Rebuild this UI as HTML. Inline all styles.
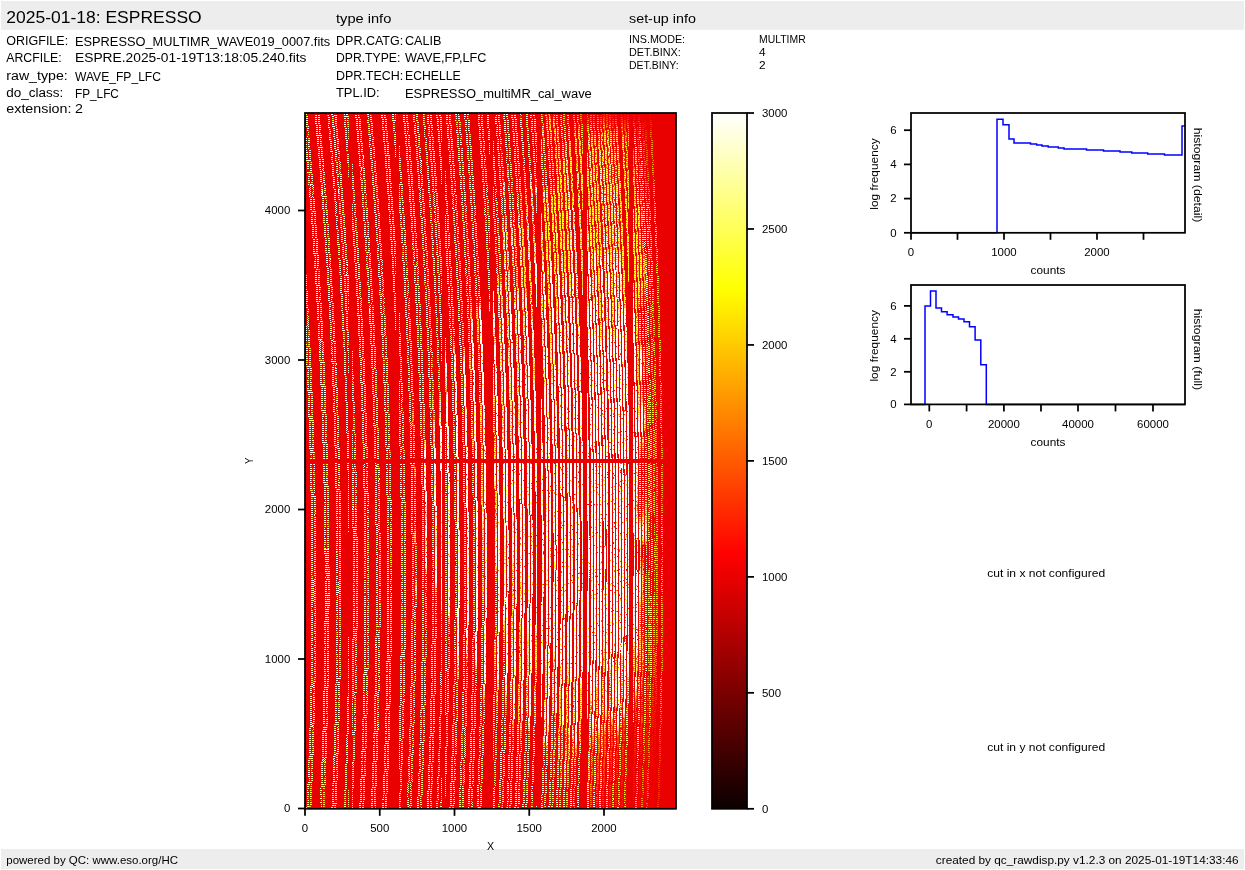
<!DOCTYPE html>
<html><head><meta charset="utf-8"><title>ESPRESSO raw display</title>
<style>html,body{margin:0;padding:0;background:#fff}svg{display:block;opacity:0.9999}text{font-family:"Liberation Sans",sans-serif}</style>
</head><body>
<svg width="1245" height="870" viewBox="0 0 1245 870">
<rect width="1245" height="870" fill="#fff"/>
<rect x="1" y="1" width="1243" height="28.8" fill="#ededed"/>
<rect x="1" y="849" width="1243" height="20" fill="#ededed"/>
<text x="6.30" y="22.90" font-size="17.42" textLength="195.36" lengthAdjust="spacingAndGlyphs" fill="#000">2025-01-18: ESPRESSO</text>
<text x="336.00" y="23.20" font-size="13.06" textLength="55.34" lengthAdjust="spacingAndGlyphs" fill="#000">type info</text>
<text x="629.00" y="22.60" font-size="13.06" textLength="66.89" lengthAdjust="spacingAndGlyphs" fill="#000">set-up info</text>
<text x="6.30" y="44.90" font-size="13.06" textLength="61.85" lengthAdjust="spacingAndGlyphs" fill="#000">ORIGFILE:</text>
<text x="75.00" y="45.80" font-size="13.06" textLength="255.19" lengthAdjust="spacingAndGlyphs" fill="#000">ESPRESSO_MULTIMR_WAVE019_0007.fits</text>
<text x="6.30" y="61.60" font-size="13.06" textLength="55.29" lengthAdjust="spacingAndGlyphs" fill="#000">ARCFILE:</text>
<text x="75.00" y="61.60" font-size="13.06" textLength="231.44" lengthAdjust="spacingAndGlyphs" fill="#000">ESPRE.2025-01-19T13:18:05.240.fits</text>
<text x="6.30" y="79.90" font-size="13.06" textLength="61.41" lengthAdjust="spacingAndGlyphs" fill="#000">raw_type:</text>
<text x="75.00" y="80.60" font-size="13.06" textLength="85.99" lengthAdjust="spacingAndGlyphs" fill="#000">WAVE_FP_LFC</text>
<text x="6.30" y="97.40" font-size="13.06" textLength="57.07" lengthAdjust="spacingAndGlyphs" fill="#000">do_class:</text>
<text x="75.00" y="98.00" font-size="13.06" textLength="43.86" lengthAdjust="spacingAndGlyphs" fill="#000">FP_LFC</text>
<text x="6.30" y="113.40" font-size="13.06" textLength="65.15" lengthAdjust="spacingAndGlyphs" fill="#000">extension:</text>
<text x="75.00" y="113.40" font-size="13.06" textLength="7.95" lengthAdjust="spacingAndGlyphs" fill="#000">2</text>
<text x="336.00" y="45.10" font-size="13.06" textLength="67.22" lengthAdjust="spacingAndGlyphs" fill="#000">DPR.CATG:</text>
<text x="405.00" y="45.10" font-size="13.06" textLength="36.51" lengthAdjust="spacingAndGlyphs" fill="#000">CALIB</text>
<text x="336.00" y="62.10" font-size="13.06" textLength="64.29" lengthAdjust="spacingAndGlyphs" fill="#000">DPR.TYPE:</text>
<text x="405.00" y="62.40" font-size="13.06" textLength="81.43" lengthAdjust="spacingAndGlyphs" fill="#000">WAVE,FP,LFC</text>
<text x="336.00" y="79.50" font-size="13.06" textLength="67.25" lengthAdjust="spacingAndGlyphs" fill="#000">DPR.TECH:</text>
<text x="405.00" y="79.50" font-size="13.06" textLength="55.75" lengthAdjust="spacingAndGlyphs" fill="#000">ECHELLE</text>
<text x="336.00" y="96.50" font-size="13.06" textLength="43.63" lengthAdjust="spacingAndGlyphs" fill="#000">TPL.ID:</text>
<text x="405.00" y="97.70" font-size="13.06" textLength="186.80" lengthAdjust="spacingAndGlyphs" fill="#000">ESPRESSO_multiMR_cal_wave</text>
<text x="629.00" y="42.80" font-size="10.89" textLength="56.10" lengthAdjust="spacingAndGlyphs" fill="#000">INS.MODE:</text>
<text x="759.00" y="42.80" font-size="10.89" textLength="46.66" lengthAdjust="spacingAndGlyphs" fill="#000">MULTIMR</text>
<text x="629.00" y="55.70" font-size="10.89" textLength="51.71" lengthAdjust="spacingAndGlyphs" fill="#000">DET.BINX:</text>
<text x="759.00" y="55.70" font-size="10.89" textLength="6.63" lengthAdjust="spacingAndGlyphs" fill="#000">4</text>
<text x="629.00" y="68.60" font-size="10.89" textLength="49.56" lengthAdjust="spacingAndGlyphs" fill="#000">DET.BINY:</text>
<text x="759.00" y="68.60" font-size="10.89" textLength="6.63" lengthAdjust="spacingAndGlyphs" fill="#000">2</text>
<text x="6.30" y="864.00" font-size="10.89" textLength="171.69" lengthAdjust="spacingAndGlyphs" fill="#000">powered by QC: www.eso.org/HC</text>
<text x="935.80" y="864.00" font-size="10.89" textLength="302.80" lengthAdjust="spacingAndGlyphs" fill="#000">created by qc_rawdisp.py v1.2.3 on 2025-01-19T14:33:46</text>
<text x="987.22" y="576.60" font-size="10.89" textLength="117.97" lengthAdjust="spacingAndGlyphs" fill="#000">cut in x not configured</text>
<text x="987.22" y="750.60" font-size="10.89" textLength="117.97" lengthAdjust="spacingAndGlyphs" fill="#000">cut in y not configured</text>
<defs>
<clipPath id="hclip"><rect x="305.0" y="113.0" width="371.0" height="695.8"/></clipPath>
<filter id="cm" x="305.0" y="113.0" width="371.0" height="695.8" filterUnits="userSpaceOnUse" color-interpolation-filters="sRGB">
<feTurbulence type="fractalNoise" baseFrequency="0.83 0.71" numOctaves="1" seed="3" result="n0"/>
<feColorMatrix in="n0" type="matrix" values="0 0 0 0 0  0 0 0 0 0  0 0 0 0 0  4.2 0 0 0 -1.15" result="n1"/>
<feColorMatrix in="SourceGraphic" type="matrix" values="0 0 0 0 1  0 0 0 0 1  0 0 0 0 1  1 0 0 0 0" result="s1"/>
<feComposite in="s1" in2="n1" operator="arithmetic" k1="1.3" k2="0" k3="0" k4="0" result="m"/>
<feColorMatrix in="m" type="matrix" values="0 0 0 1 0  0 0 0 1 0  0 0 0 1 0  0 0 0 0 1" result="g"/>
<feComponentTransfer in="g">
<feFuncR type="table" tableValues="0.914 1 1 1 1 1 1 1 1 1 1 1 1 1 1 1 1 1 1 1 1 1"/>
<feFuncG type="table" tableValues="0 0 0.083 0.167 0.25 0.333 0.417 0.5 0.583 0.667 0.75 0.833 0.917 1 1 1 1 1 1 1 1 1"/>
<feFuncB type="table" tableValues="0 0 0 0 0 0 0 0 0 0 0 0 0 0 0.125 0.25 0.375 0.5 0.625 0.75 0.875 1"/>
</feComponentTransfer>
</filter>
<filter id="cmB" x="305.0" y="113.0" width="371.0" height="695.8" filterUnits="userSpaceOnUse" color-interpolation-filters="sRGB">
<feTurbulence type="fractalNoise" baseFrequency="0.83 0.71" numOctaves="1" seed="8" result="n0"/>
<feColorMatrix in="n0" type="matrix" values="0 0 0 0 0  0 0 0 0 0  0 0 0 0 0  4.2 0 0 0 -1.15" result="n1"/>
<feColorMatrix in="SourceGraphic" type="matrix" values="0 0 0 0 1  0 0 0 0 1  0 0 0 0 1  0 0 0 1 0" result="s1"/>
<feComposite in="s1" in2="n1" operator="arithmetic" k1="1.9" k2="0" k3="0" k4="0" result="m"/>
<feColorMatrix in="m" type="matrix" values="0 0 0 1 0  0 0 0 1 0  0 0 0 1 0  0 0 0 0 1" result="g"/>
<feComponentTransfer in="g" result="c">
<feFuncR type="table" tableValues="0.914 1 1 1 1 1 1 1 1 1 1 1 1 1 1 1 1 1 1 1 1 1"/>
<feFuncG type="table" tableValues="0 0 0.083 0.167 0.25 0.333 0.417 0.5 0.583 0.667 0.75 0.833 0.917 1 1 1 1 1 1 1 1 1"/>
<feFuncB type="table" tableValues="0 0 0 0 0 0 0 0 0 0 0 0 0 0 0.125 0.25 0.375 0.5 0.625 0.75 0.875 1"/>
</feComponentTransfer>
<feComposite in="c" in2="SourceGraphic" operator="in"/>
</filter>
<radialGradient id="mL" cx="0" cy="0" r="1" gradientUnits="userSpaceOnUse" gradientTransform="translate(575 496) scale(190 300)"><stop offset="0" stop-color="#fff" stop-opacity="1"/><stop offset="0.6" stop-color="#fff" stop-opacity="1"/><stop offset="1" stop-color="#000" stop-opacity="1"/></radialGradient>
<radialGradient id="mF" cx="0" cy="0" r="1" gradientUnits="userSpaceOnUse" gradientTransform="translate(590 500) scale(135 262)"><stop offset="0" stop-color="#fff" stop-opacity="1"/><stop offset="0.4" stop-color="#fff" stop-opacity="1"/><stop offset="1" stop-color="#000" stop-opacity="1"/></radialGradient>
<filter id="dith" x="305.0" y="113.0" width="371.0" height="695.8" filterUnits="userSpaceOnUse" color-interpolation-filters="sRGB">
<feTurbulence type="fractalNoise" baseFrequency="0.09 0.02" numOctaves="2" seed="11" result="t"/>
<feColorMatrix in="t" type="matrix" values="1 0 0 0 0  1 0 0 0 0  1 0 0 0 0  0 0 0 0 1" result="tg"/>
<feComposite in="SourceGraphic" in2="tg" operator="arithmetic" k1="0" k2="1" k3="1.0" k4="-0.5" result="c"/>
<feComponentTransfer in="c"><feFuncR type="linear" slope="4" intercept="-1.5"/><feFuncG type="linear" slope="4" intercept="-1.5"/><feFuncB type="linear" slope="4" intercept="-1.5"/></feComponentTransfer>
</filter>
<linearGradient id="mR" x1="632" y1="0" x2="652" y2="0" gradientUnits="userSpaceOnUse"><stop offset="0" stop-color="#000" stop-opacity="0"/><stop offset="1" stop-color="#000" stop-opacity="1"/></linearGradient>
<mask id="mLm" maskUnits="userSpaceOnUse" x="305.0" y="113.0" width="371.0" height="695.8"><g filter="url(#dith)"><rect x="305.0" y="113.0" width="371.0" height="695.8" fill="url(#mL)"/><rect x="305.0" y="113.0" width="371.0" height="695.8" fill="url(#mR)"/></g></mask>
<mask id="mFm" maskUnits="userSpaceOnUse" x="305.0" y="113.0" width="371.0" height="695.8"><g filter="url(#dith)"><rect x="305.0" y="113.0" width="371.0" height="695.8" fill="url(#mF)"/><rect x="305.0" y="113.0" width="371.0" height="695.8" fill="url(#mR)"/></g></mask>
<radialGradient id="mU" cx="0" cy="0" r="1" gradientUnits="userSpaceOnUse" gradientTransform="translate(600 450) scale(150 400)"><stop offset="0" stop-color="#fff" stop-opacity="1"/><stop offset="0.6" stop-color="#fff" stop-opacity="1"/><stop offset="1" stop-color="#000" stop-opacity="1"/></radialGradient>
<mask id="mUm" maskUnits="userSpaceOnUse" x="305.0" y="113.0" width="371.0" height="695.8"><g filter="url(#dith)"><rect x="305.0" y="113.0" width="371.0" height="695.8" fill="url(#mU)"/><rect x="305.0" y="113.0" width="371.0" height="695.8" fill="url(#mR)"/></g></mask>
<radialGradient id="dTR" cx="0" cy="0" r="1" gradientUnits="userSpaceOnUse" gradientTransform="translate(676 113) scale(58 130)"><stop offset="0" stop-color="#000" stop-opacity="0.6"/><stop offset="0.5" stop-color="#000" stop-opacity="0.4"/><stop offset="1" stop-color="#000" stop-opacity="0"/></radialGradient>
<radialGradient id="dBR" cx="0" cy="0" r="1" gradientUnits="userSpaceOnUse" gradientTransform="translate(676 809) scale(95 140)"><stop offset="0" stop-color="#000" stop-opacity="0.8"/><stop offset="0.5" stop-color="#000" stop-opacity="0.55"/><stop offset="1" stop-color="#000" stop-opacity="0"/></radialGradient>
<radialGradient id="dBL" cx="0" cy="0" r="1" gradientUnits="userSpaceOnUse" gradientTransform="translate(305 809) scale(260 70)"><stop offset="0" stop-color="#000" stop-opacity="0.35"/><stop offset="1" stop-color="#000" stop-opacity="0"/></radialGradient>
<linearGradient id="dR" x1="640" y1="0" x2="664" y2="0" gradientUnits="userSpaceOnUse"><stop offset="0" stop-color="#000" stop-opacity="0"/><stop offset="1" stop-color="#000" stop-opacity="0.6"/></linearGradient>
<radialGradient id="lBR" cx="0" cy="0" r="1" gradientUnits="userSpaceOnUse" gradientTransform="translate(676 830) scale(130 210)"><stop offset="0" stop-color="#000" stop-opacity="0.9"/><stop offset="0.6" stop-color="#000" stop-opacity="0.7"/><stop offset="1" stop-color="#000" stop-opacity="0"/></radialGradient>
<radialGradient id="lTR" cx="0" cy="0" r="1" gradientUnits="userSpaceOnUse" gradientTransform="translate(676 100) scale(75 130)"><stop offset="0" stop-color="#000" stop-opacity="0.7"/><stop offset="0.6" stop-color="#000" stop-opacity="0.4"/><stop offset="1" stop-color="#000" stop-opacity="0"/></radialGradient>
<radialGradient id="dT" cx="0" cy="0" r="1" gradientUnits="userSpaceOnUse" gradientTransform="translate(640 111) scale(120 30)"><stop offset="0" stop-color="#000" stop-opacity="0.95"/><stop offset="0.3" stop-color="#000" stop-opacity="0.8"/><stop offset="1" stop-color="#000" stop-opacity="0"/></radialGradient>
<radialGradient id="dT2" cx="0" cy="0" r="1" gradientUnits="userSpaceOnUse" gradientTransform="translate(640 113) scale(110 140)"><stop offset="0" stop-color="#000" stop-opacity="0.15"/><stop offset="0.6" stop-color="#000" stop-opacity="0.1"/><stop offset="1" stop-color="#000" stop-opacity="0"/></radialGradient>
</defs>
<g clip-path="url(#hclip)"><g filter="url(#cm)">
<rect x="305.0" y="113.0" width="371.0" height="695.8" fill="#000"/>
<g mask="url(#mUm)"><g shape-rendering="crispEdges" fill="none" stroke="#6c6c6c">
<path d="M403.74 113.0L404.74 125.0L405.72 137.0L406.66 149.0L407.59 161.0L408.48 173.0L409.35 185.0L410.19 197.0L411.01 209.0L411.80 221.0L412.56 233.0L413.29 245.0L414.01 257.0L414.69 269.0L415.35 281.0L415.98 293.0L416.58 305.0L417.16 317.0L417.71 329.0L418.24 341.0L418.74 353.0L419.21 365.0L419.66 377.0L420.08 389.0L420.48 401.0L420.84 413.0L421.19 425.0L421.50 437.0L421.79 449.0L422.05 461.0L422.29 473.0L422.50 485.0L422.68 497.0L422.84 509.0L422.97 521.0L423.08 533.0L423.16 545.0L423.21 557.0L423.24 569.0L423.23 581.0L423.21 593.0L423.15 605.0L423.07 617.0L422.96 629.0L422.82 641.0L422.65 653.0L422.46 665.0L422.24 677.0L421.99 689.0L421.71 701.0L421.41 713.0L421.07 725.0L420.71 737.0L420.33 749.0L419.91 761.0L419.47 773.0L419.00 785.0L418.50 797.0L417.98 808.8" stroke-width="2.00"/>
<path d="M413.78 113.0L414.77 125.0L415.73 137.0L416.67 149.0L417.58 161.0L418.47 173.0L419.32 185.0L420.16 197.0L420.96 209.0L421.74 221.0L422.50 233.0L423.22 245.0L423.92 257.0L424.60 269.0L425.25 281.0L425.87 293.0L426.47 305.0L427.04 317.0L427.59 329.0L428.10 341.0L428.60 353.0L429.06 365.0L429.50 377.0L429.92 389.0L430.31 401.0L430.67 413.0L431.00 425.0L431.31 437.0L431.60 449.0L431.86 461.0L432.09 473.0L432.29 485.0L432.47 497.0L432.63 509.0L432.75 521.0L432.85 533.0L432.93 545.0L432.98 557.0L433.00 569.0L433.00 581.0L432.97 593.0L432.91 605.0L432.82 617.0L432.71 629.0L432.57 641.0L432.40 653.0L432.21 665.0L431.98 677.0L431.73 689.0L431.46 701.0L431.15 713.0L430.82 725.0L430.46 737.0L430.07 749.0L429.66 761.0L429.21 773.0L428.75 785.0L428.25 797.0L427.73 808.8" stroke-width="2.00"/>
<path d="M427.61 113.0L428.59 125.0L429.53 137.0L430.45 149.0L431.35 161.0L432.22 173.0L433.06 185.0L433.88 197.0L434.68 209.0L435.44 221.0L436.18 233.0L436.90 245.0L437.59 257.0L438.25 269.0L438.89 281.0L439.50 293.0L440.09 305.0L440.65 317.0L441.18 329.0L441.69 341.0L442.17 353.0L442.63 365.0L443.06 377.0L443.47 389.0L443.85 401.0L444.20 413.0L444.53 425.0L444.83 437.0L445.11 449.0L445.36 461.0L445.58 473.0L445.78 485.0L445.96 497.0L446.10 509.0L446.23 521.0L446.32 533.0L446.39 545.0L446.44 557.0L446.46 569.0L446.45 581.0L446.41 593.0L446.35 605.0L446.26 617.0L446.15 629.0L446.00 641.0L445.83 653.0L445.64 665.0L445.41 677.0L445.16 689.0L444.88 701.0L444.58 713.0L444.24 725.0L443.88 737.0L443.50 749.0L443.08 761.0L442.64 773.0L442.17 785.0L441.68 797.0L441.16 808.8" stroke-width="1.99"/>
<path d="M437.14 113.0L438.10 125.0L439.04 137.0L439.95 149.0L440.83 161.0L441.69 173.0L442.53 185.0L443.34 197.0L444.12 209.0L444.88 221.0L445.61 233.0L446.32 245.0L447.00 257.0L447.65 269.0L448.28 281.0L448.89 293.0L449.47 305.0L450.02 317.0L450.55 329.0L451.05 341.0L451.53 353.0L451.98 365.0L452.40 377.0L452.80 389.0L453.18 401.0L453.52 413.0L453.85 425.0L454.14 437.0L454.42 449.0L454.66 461.0L454.88 473.0L455.08 485.0L455.25 497.0L455.39 509.0L455.51 521.0L455.60 533.0L455.67 545.0L455.71 557.0L455.72 569.0L455.71 581.0L455.68 593.0L455.61 605.0L455.52 617.0L455.40 629.0L455.26 641.0L455.09 653.0L454.89 665.0L454.66 677.0L454.41 689.0L454.13 701.0L453.83 713.0L453.49 725.0L453.13 737.0L452.75 749.0L452.33 761.0L451.89 773.0L451.42 785.0L450.93 797.0L450.42 808.8" stroke-width="1.99"/>
<path d="M446.56 113.0L447.51 125.0L448.44 137.0L449.34 149.0L450.21 161.0L451.07 173.0L451.89 185.0L452.69 197.0L453.46 209.0L454.21 221.0L454.94 233.0L455.64 245.0L456.31 257.0L456.96 269.0L457.58 281.0L458.18 293.0L458.75 305.0L459.29 317.0L459.81 329.0L460.31 341.0L460.78 353.0L461.22 365.0L461.64 377.0L462.03 389.0L462.40 401.0L462.75 413.0L463.06 425.0L463.36 437.0L463.62 449.0L463.86 461.0L464.08 473.0L464.27 485.0L464.44 497.0L464.58 509.0L464.69 521.0L464.78 533.0L464.84 545.0L464.88 557.0L464.89 569.0L464.88 581.0L464.84 593.0L464.77 605.0L464.68 617.0L464.56 629.0L464.41 641.0L464.24 653.0L464.04 665.0L463.82 677.0L463.56 689.0L463.28 701.0L462.98 713.0L462.64 725.0L462.28 737.0L461.90 749.0L461.48 761.0L461.04 773.0L460.58 785.0L460.09 797.0L459.57 808.8" stroke-width="1.98"/>
<path d="M455.88 113.0L456.82 125.0L457.73 137.0L458.63 149.0L459.49 161.0L460.33 173.0L461.15 185.0L461.94 197.0L462.71 209.0L463.45 221.0L464.16 233.0L464.85 245.0L465.52 257.0L466.16 269.0L466.77 281.0L467.36 293.0L467.92 305.0L468.46 317.0L468.98 329.0L469.46 341.0L469.93 353.0L470.37 365.0L470.78 377.0L471.17 389.0L471.53 401.0L471.87 413.0L472.18 425.0L472.47 437.0L472.73 449.0L472.97 461.0L473.18 473.0L473.36 485.0L473.52 497.0L473.66 509.0L473.77 521.0L473.86 533.0L473.92 545.0L473.95 557.0L473.96 569.0L473.95 581.0L473.91 593.0L473.84 605.0L473.74 617.0L473.62 629.0L473.47 641.0L473.30 653.0L473.10 665.0L472.87 677.0L472.62 689.0L472.34 701.0L472.03 713.0L471.70 725.0L471.34 737.0L470.95 749.0L470.54 761.0L470.10 773.0L469.63 785.0L469.14 797.0L468.63 808.8" stroke-width="1.98"/>
<path d="M464.99 113.0L465.92 125.0L466.83 137.0L467.71 149.0L468.56 161.0L469.40 173.0L470.20 185.0L470.99 197.0L471.74 209.0L472.47 221.0L473.18 233.0L473.86 245.0L474.52 257.0L475.15 269.0L475.76 281.0L476.34 293.0L476.90 305.0L477.43 317.0L477.94 329.0L478.42 341.0L478.88 353.0L479.31 365.0L479.72 377.0L480.10 389.0L480.46 401.0L480.79 413.0L481.10 425.0L481.38 437.0L481.64 449.0L481.87 461.0L482.07 473.0L482.26 485.0L482.41 497.0L482.55 509.0L482.65 521.0L482.74 533.0L482.79 545.0L482.83 557.0L482.83 569.0L482.82 581.0L482.77 593.0L482.70 605.0L482.60 617.0L482.48 629.0L482.33 641.0L482.16 653.0L481.95 665.0L481.72 677.0L481.47 689.0L481.19 701.0L480.88 713.0L480.55 725.0L480.19 737.0L479.80 749.0L479.39 761.0L478.96 773.0L478.49 785.0L478.00 797.0L477.49 808.8" stroke-width="1.98"/>
<path d="M478.50 113.0L479.42 125.0L480.31 137.0L481.18 149.0L482.02 161.0L482.84 173.0L483.63 185.0L484.40 197.0L485.14 209.0L485.86 221.0L486.56 233.0L487.23 245.0L487.87 257.0L488.49 269.0L489.09 281.0L489.66 293.0L490.21 305.0L490.73 317.0L491.23 329.0L491.70 341.0L492.15 353.0L492.57 365.0L492.97 377.0L493.35 389.0L493.69 401.0L494.02 413.0L494.32 425.0L494.59 437.0L494.84 449.0L495.07 461.0L495.27 473.0L495.45 485.0L495.60 497.0L495.73 509.0L495.83 521.0L495.91 533.0L495.96 545.0L495.99 557.0L495.99 569.0L495.97 581.0L495.92 593.0L495.85 605.0L495.75 617.0L495.62 629.0L495.47 641.0L495.29 653.0L495.09 665.0L494.86 677.0L494.61 689.0L494.32 701.0L494.02 713.0L493.68 725.0L493.32 737.0L492.94 749.0L492.53 761.0L492.09 773.0L491.63 785.0L491.14 797.0L490.63 808.8" stroke-width="1.97"/>
<path d="M487.40 113.0L488.31 125.0L489.19 137.0L490.05 149.0L490.89 161.0L491.69 173.0L492.48 185.0L493.24 197.0L493.98 209.0L494.69 221.0L495.37 233.0L496.04 245.0L496.67 257.0L497.29 269.0L497.88 281.0L498.44 293.0L498.98 305.0L499.50 317.0L499.99 329.0L500.45 341.0L500.90 353.0L501.31 365.0L501.71 377.0L502.08 389.0L502.42 401.0L502.74 413.0L503.03 425.0L503.30 437.0L503.55 449.0L503.77 461.0L503.97 473.0L504.14 485.0L504.29 497.0L504.41 509.0L504.51 521.0L504.59 533.0L504.64 545.0L504.66 557.0L504.66 569.0L504.64 581.0L504.59 593.0L504.51 605.0L504.41 617.0L504.29 629.0L504.13 641.0L503.95 653.0L503.75 665.0L503.52 677.0L503.26 689.0L502.98 701.0L502.67 713.0L502.34 725.0L501.98 737.0L501.60 749.0L501.19 761.0L500.75 773.0L500.29 785.0L499.80 797.0L499.30 808.8" stroke-width="1.97"/>
<path d="M495.69 113.0L496.59 125.0L497.46 137.0L498.31 149.0L499.14 161.0L499.94 173.0L500.72 185.0L501.47 197.0L502.20 209.0L502.90 221.0L503.58 233.0L504.24 245.0L504.87 257.0L505.47 269.0L506.06 281.0L506.61 293.0L507.15 305.0L507.66 317.0L508.14 329.0L508.60 341.0L509.04 353.0L509.45 365.0L509.84 377.0L510.20 389.0L510.54 401.0L510.86 413.0L511.15 425.0L511.41 437.0L511.66 449.0L511.87 461.0L512.07 473.0L512.24 485.0L512.38 497.0L512.50 509.0L512.60 521.0L512.67 533.0L512.72 545.0L512.74 557.0L512.74 569.0L512.71 581.0L512.66 593.0L512.58 605.0L512.48 617.0L512.35 629.0L512.20 641.0L512.02 653.0L511.81 665.0L511.58 677.0L511.32 689.0L511.04 701.0L510.73 713.0L510.40 725.0L510.04 737.0L509.66 749.0L509.25 761.0L508.82 773.0L508.35 785.0L507.87 797.0L507.37 808.8" stroke-width="1.96"/>
<path d="M503.98 113.0L504.87 125.0L505.73 137.0L506.57 149.0L507.39 161.0L508.18 173.0L508.95 185.0L509.70 197.0L510.42 209.0L511.11 221.0L511.79 233.0L512.44 245.0L513.06 257.0L513.66 269.0L514.23 281.0L514.79 293.0L515.31 305.0L515.82 317.0L516.30 329.0L516.75 341.0L517.18 353.0L517.59 365.0L517.97 377.0L518.33 389.0L518.67 401.0L518.98 413.0L519.26 425.0L519.52 437.0L519.76 449.0L519.98 461.0L520.17 473.0L520.33 485.0L520.47 497.0L520.59 509.0L520.68 521.0L520.75 533.0L520.80 545.0L520.82 557.0L520.81 569.0L520.79 581.0L520.73 593.0L520.65 605.0L520.55 617.0L520.42 629.0L520.26 641.0L520.08 653.0L519.87 665.0L519.64 677.0L519.39 689.0L519.10 701.0L518.80 713.0L518.46 725.0L518.11 737.0L517.72 749.0L517.31 761.0L516.88 773.0L516.42 785.0L515.94 797.0L515.43 808.8" stroke-width="1.96"/>
<path d="M512.06 113.0L512.94 125.0L513.80 137.0L514.63 149.0L515.44 161.0L516.23 173.0L516.99 185.0L517.72 197.0L518.44 209.0L519.12 221.0L519.79 233.0L520.43 245.0L521.05 257.0L521.64 269.0L522.21 281.0L522.76 293.0L523.28 305.0L523.78 317.0L524.25 329.0L524.70 341.0L525.12 353.0L525.53 365.0L525.90 377.0L526.26 389.0L526.59 401.0L526.89 413.0L527.17 425.0L527.43 437.0L527.67 449.0L527.88 461.0L528.06 473.0L528.23 485.0L528.36 497.0L528.48 509.0L528.57 521.0L528.63 533.0L528.68 545.0L528.70 557.0L528.69 569.0L528.66 581.0L528.60 593.0L528.52 605.0L528.42 617.0L528.28 629.0L528.13 641.0L527.95 653.0L527.74 665.0L527.51 677.0L527.25 689.0L526.97 701.0L526.66 713.0L526.33 725.0L525.97 737.0L525.59 749.0L525.18 761.0L524.75 773.0L524.29 785.0L523.80 797.0L523.30 808.8" stroke-width="1.96"/>
<path d="M531.13 113.0L531.98 125.0L532.81 137.0L533.61 149.0L534.39 161.0L535.15 173.0L535.88 185.0L536.59 197.0L537.28 209.0L537.95 221.0L538.59 233.0L539.21 245.0L539.80 257.0L540.38 269.0L540.92 281.0L541.45 293.0L541.95 305.0L542.43 317.0L542.89 329.0L543.32 341.0L543.73 353.0L544.12 365.0L544.48 377.0L544.82 389.0L545.14 401.0L545.44 413.0L545.71 425.0L545.95 437.0L546.18 449.0L546.38 461.0L546.56 473.0L546.71 485.0L546.85 497.0L546.95 509.0L547.04 521.0L547.10 533.0L547.14 545.0L547.16 557.0L547.15 569.0L547.12 581.0L547.06 593.0L546.98 605.0L546.88 617.0L546.75 629.0L546.60 641.0L546.42 653.0L546.22 665.0L545.99 677.0L545.74 689.0L545.46 701.0L545.16 713.0L544.84 725.0L544.49 737.0L544.12 749.0L543.72 761.0L543.30 773.0L542.86 785.0L542.39 797.0L541.90 808.8" stroke-width="1.95"/>
<path d="M538.76 113.0L539.60 125.0L540.41 137.0L541.21 149.0L541.97 161.0L542.72 173.0L543.44 185.0L544.15 197.0L544.82 209.0L545.48 221.0L546.11 233.0L546.72 245.0L547.31 257.0L547.87 269.0L548.41 281.0L548.93 293.0L549.42 305.0L549.90 317.0L550.35 329.0L550.77 341.0L551.18 353.0L551.56 365.0L551.91 377.0L552.25 389.0L552.56 401.0L552.85 413.0L553.12 425.0L553.36 437.0L553.58 449.0L553.78 461.0L553.96 473.0L554.11 485.0L554.24 497.0L554.35 509.0L554.43 521.0L554.49 533.0L554.53 545.0L554.54 557.0L554.54 569.0L554.50 581.0L554.45 593.0L554.37 605.0L554.27 617.0L554.14 629.0L553.99 641.0L553.81 653.0L553.61 665.0L553.39 677.0L553.14 689.0L552.87 701.0L552.57 713.0L552.25 725.0L551.91 737.0L551.54 749.0L551.15 761.0L550.73 773.0L550.29 785.0L549.83 797.0L549.35 808.8" stroke-width="1.95"/>
<path d="M546.29 113.0L547.12 125.0L547.92 137.0L548.70 149.0L549.46 161.0L550.19 173.0L550.90 185.0L551.59 197.0L552.26 209.0L552.91 221.0L553.53 233.0L554.13 245.0L554.71 257.0L555.26 269.0L555.80 281.0L556.31 293.0L556.79 305.0L557.26 317.0L557.70 329.0L558.12 341.0L558.52 353.0L558.89 365.0L559.25 377.0L559.58 389.0L559.88 401.0L560.17 413.0L560.43 425.0L560.67 437.0L560.89 449.0L561.08 461.0L561.26 473.0L561.40 485.0L561.53 497.0L561.64 509.0L561.72 521.0L561.78 533.0L561.82 545.0L561.83 557.0L561.82 569.0L561.79 581.0L561.73 593.0L561.66 605.0L561.55 617.0L561.43 629.0L561.28 641.0L561.10 653.0L560.90 665.0L560.68 677.0L560.44 689.0L560.17 701.0L559.88 713.0L559.56 725.0L559.22 737.0L558.86 749.0L558.47 761.0L558.06 773.0L557.63 785.0L557.17 797.0L556.70 808.8" stroke-width="1.94"/>
<path d="M553.51 113.0L554.32 125.0L555.11 137.0L555.88 149.0L556.63 161.0L557.35 173.0L558.06 185.0L558.74 197.0L559.40 209.0L560.03 221.0L560.65 233.0L561.24 245.0L561.81 257.0L562.35 269.0L562.88 281.0L563.38 293.0L563.86 305.0L564.32 317.0L564.75 329.0L565.17 341.0L565.56 353.0L565.93 365.0L566.28 377.0L566.60 389.0L566.90 401.0L567.18 413.0L567.44 425.0L567.68 437.0L567.89 449.0L568.08 461.0L568.25 473.0L568.40 485.0L568.53 497.0L568.63 509.0L568.71 521.0L568.77 533.0L568.80 545.0L568.82 557.0L568.81 569.0L568.78 581.0L568.72 593.0L568.64 605.0L568.54 617.0L568.42 629.0L568.27 641.0L568.09 653.0L567.90 665.0L567.68 677.0L567.44 689.0L567.17 701.0L566.89 713.0L566.57 725.0L566.24 737.0L565.88 749.0L565.50 761.0L565.09 773.0L564.66 785.0L564.21 797.0L563.75 808.8" stroke-width="1.94"/>
<path d="M560.63 113.0L561.43 125.0L562.21 137.0L562.96 149.0L563.70 161.0L564.42 173.0L565.11 185.0L565.78 197.0L566.43 209.0L567.05 221.0L567.66 233.0L568.24 245.0L568.80 257.0L569.34 269.0L569.86 281.0L570.35 293.0L570.83 305.0L571.28 317.0L571.71 329.0L572.11 341.0L572.50 353.0L572.86 365.0L573.21 377.0L573.53 389.0L573.82 401.0L574.10 413.0L574.35 425.0L574.59 437.0L574.80 449.0L574.99 461.0L575.15 473.0L575.30 485.0L575.42 497.0L575.52 509.0L575.60 521.0L575.66 533.0L575.69 545.0L575.70 557.0L575.70 569.0L575.66 581.0L575.61 593.0L575.53 605.0L575.43 617.0L575.31 629.0L575.16 641.0L574.99 653.0L574.79 665.0L574.58 677.0L574.34 689.0L574.08 701.0L573.79 713.0L573.48 725.0L573.15 737.0L572.80 749.0L572.42 761.0L572.02 773.0L571.60 785.0L571.15 797.0L570.69 808.8" stroke-width="1.94"/>
<path d="M577.85 113.0L578.62 125.0L579.37 137.0L580.10 149.0L580.81 161.0L581.50 173.0L582.17 185.0L582.82 197.0L583.44 209.0L584.05 221.0L584.63 233.0L585.19 245.0L585.73 257.0L586.25 269.0L586.75 281.0L587.23 293.0L587.68 305.0L588.12 317.0L588.53 329.0L588.93 341.0L589.30 353.0L589.65 365.0L589.98 377.0L590.28 389.0L590.57 401.0L590.84 413.0L591.08 425.0L591.30 437.0L591.51 449.0L591.69 461.0L591.85 473.0L591.99 485.0L592.10 497.0L592.20 509.0L592.28 521.0L592.33 533.0L592.36 545.0L592.37 557.0L592.36 569.0L592.33 581.0L592.28 593.0L592.20 605.0L592.10 617.0L591.98 629.0L591.84 641.0L591.67 653.0L591.48 665.0L591.27 677.0L591.04 689.0L590.79 701.0L590.51 713.0L590.21 725.0L589.89 737.0L589.55 749.0L589.18 761.0L588.79 773.0L588.38 785.0L587.95 797.0L587.51 808.8" stroke-width="1.93"/>
<path d="M584.14 113.0L584.90 125.0L585.64 137.0L586.36 149.0L587.06 161.0L587.74 173.0L588.40 185.0L589.04 197.0L589.66 209.0L590.25 221.0L590.83 233.0L591.38 245.0L591.92 257.0L592.43 269.0L592.92 281.0L593.39 293.0L593.84 305.0L594.27 317.0L594.68 329.0L595.07 341.0L595.43 353.0L595.78 365.0L596.10 377.0L596.41 389.0L596.69 401.0L596.95 413.0L597.19 425.0L597.41 437.0L597.61 449.0L597.79 461.0L597.95 473.0L598.08 485.0L598.20 497.0L598.29 509.0L598.37 521.0L598.42 533.0L598.45 545.0L598.46 557.0L598.45 569.0L598.42 581.0L598.37 593.0L598.29 605.0L598.19 617.0L598.07 629.0L597.93 641.0L597.77 653.0L597.58 665.0L597.37 677.0L597.14 689.0L596.89 701.0L596.62 713.0L596.32 725.0L596.01 737.0L595.67 749.0L595.30 761.0L594.92 773.0L594.52 785.0L594.09 797.0L593.65 808.8" stroke-width="1.93"/>
<path d="M590.42 113.0L591.18 125.0L591.91 137.0L592.62 149.0L593.31 161.0L593.98 173.0L594.63 185.0L595.26 197.0L595.87 209.0L596.46 221.0L597.03 233.0L597.57 245.0L598.10 257.0L598.61 269.0L599.09 281.0L599.56 293.0L600.00 305.0L600.42 317.0L600.82 329.0L601.21 341.0L601.57 353.0L601.91 365.0L602.23 377.0L602.53 389.0L602.81 401.0L603.06 413.0L603.30 425.0L603.52 437.0L603.71 449.0L603.89 461.0L604.04 473.0L604.18 485.0L604.29 497.0L604.39 509.0L604.46 521.0L604.51 533.0L604.54 545.0L604.55 557.0L604.54 569.0L604.51 581.0L604.46 593.0L604.38 605.0L604.28 617.0L604.16 629.0L604.02 641.0L603.86 653.0L603.68 665.0L603.47 677.0L603.24 689.0L603.00 701.0L602.73 713.0L602.43 725.0L602.12 737.0L601.78 749.0L601.43 761.0L601.05 773.0L600.65 785.0L600.23 797.0L599.79 808.8" stroke-width="1.92"/>
<path d="M597.33 113.0L598.07 125.0L598.80 137.0L599.50 149.0L600.18 161.0L600.84 173.0L601.48 185.0L602.10 197.0L602.70 209.0L603.28 221.0L603.84 233.0L604.37 245.0L604.89 257.0L605.39 269.0L605.87 281.0L606.32 293.0L606.76 305.0L607.18 317.0L607.57 329.0L607.95 341.0L608.31 353.0L608.64 365.0L608.96 377.0L609.25 389.0L609.52 401.0L609.78 413.0L610.01 425.0L610.23 437.0L610.42 449.0L610.59 461.0L610.74 473.0L610.88 485.0L610.99 497.0L611.08 509.0L611.15 521.0L611.20 533.0L611.23 545.0L611.24 557.0L611.23 569.0L611.20 581.0L611.14 593.0L611.07 605.0L610.97 617.0L610.85 629.0L610.72 641.0L610.56 653.0L610.37 665.0L610.17 677.0L609.95 689.0L609.70 701.0L609.43 713.0L609.15 725.0L608.84 737.0L608.51 749.0L608.15 761.0L607.78 773.0L607.38 785.0L606.97 797.0L606.54 808.8" stroke-width="1.92"/>
<path d="M603.52 113.0L604.25 125.0L604.96 137.0L605.65 149.0L606.32 161.0L606.98 173.0L607.61 185.0L608.22 197.0L608.81 209.0L609.38 221.0L609.93 233.0L610.46 245.0L610.97 257.0L611.46 269.0L611.94 281.0L612.39 293.0L612.82 305.0L613.23 317.0L613.62 329.0L613.99 341.0L614.34 353.0L614.67 365.0L614.98 377.0L615.27 389.0L615.54 401.0L615.79 413.0L616.02 425.0L616.23 437.0L616.42 449.0L616.59 461.0L616.74 473.0L616.87 485.0L616.98 497.0L617.07 509.0L617.14 521.0L617.19 533.0L617.22 545.0L617.23 557.0L617.22 569.0L617.19 581.0L617.13 593.0L617.06 605.0L616.96 617.0L616.85 629.0L616.71 641.0L616.55 653.0L616.37 665.0L616.17 677.0L615.95 689.0L615.71 701.0L615.44 713.0L615.16 725.0L614.85 737.0L614.52 749.0L614.18 761.0L613.81 773.0L613.42 785.0L613.00 797.0L612.58 808.8" stroke-width="1.92"/>
<path d="M609.50 113.0L610.22 125.0L610.92 137.0L611.60 149.0L612.27 161.0L612.91 173.0L613.53 185.0L614.13 197.0L614.72 209.0L615.28 221.0L615.83 233.0L616.35 245.0L616.85 257.0L617.34 269.0L617.80 281.0L618.25 293.0L618.67 305.0L619.08 317.0L619.46 329.0L619.83 341.0L620.17 353.0L620.50 365.0L620.80 377.0L621.09 389.0L621.36 401.0L621.60 413.0L621.83 425.0L622.04 437.0L622.23 449.0L622.39 461.0L622.54 473.0L622.67 485.0L622.78 497.0L622.86 509.0L622.93 521.0L622.98 533.0L623.01 545.0L623.02 557.0L623.01 569.0L622.98 581.0L622.92 593.0L622.85 605.0L622.75 617.0L622.64 629.0L622.50 641.0L622.35 653.0L622.17 665.0L621.97 677.0L621.75 689.0L621.51 701.0L621.25 713.0L620.97 725.0L620.67 737.0L620.34 749.0L620.00 761.0L619.63 773.0L619.25 785.0L618.84 797.0L618.42 808.8" stroke-width="1.92"/>
<path d="M621.35 113.0L622.05 125.0L622.74 137.0L623.40 149.0L624.05 161.0L624.67 173.0L625.28 185.0L625.86 197.0L626.43 209.0L626.98 221.0L627.51 233.0L628.02 245.0L628.51 257.0L628.98 269.0L629.43 281.0L629.87 293.0L630.28 305.0L630.67 317.0L631.05 329.0L631.40 341.0L631.74 353.0L632.06 365.0L632.35 377.0L632.63 389.0L632.89 401.0L633.13 413.0L633.35 425.0L633.55 437.0L633.73 449.0L633.89 461.0L634.04 473.0L634.16 485.0L634.27 497.0L634.35 509.0L634.42 521.0L634.46 533.0L634.49 545.0L634.50 557.0L634.49 569.0L634.46 581.0L634.40 593.0L634.33 605.0L634.24 617.0L634.12 629.0L633.99 641.0L633.84 653.0L633.66 665.0L633.47 677.0L633.25 689.0L633.02 701.0L632.77 713.0L632.49 725.0L632.19 737.0L631.88 749.0L631.54 761.0L631.19 773.0L630.81 785.0L630.41 797.0L630.00 808.8" stroke-width="1.91"/>
<path d="M627.54 113.0L628.23 125.0L628.90 137.0L629.56 149.0L630.19 161.0L630.81 173.0L631.41 185.0L631.98 197.0L632.54 209.0L633.08 221.0L633.61 233.0L634.11 245.0L634.59 257.0L635.06 269.0L635.50 281.0L635.93 293.0L636.33 305.0L636.72 317.0L637.09 329.0L637.44 341.0L637.77 353.0L638.08 365.0L638.38 377.0L638.65 389.0L638.91 401.0L639.14 413.0L639.36 425.0L639.56 437.0L639.74 449.0L639.90 461.0L640.04 473.0L640.16 485.0L640.26 497.0L640.34 509.0L640.41 521.0L640.45 533.0L640.48 545.0L640.49 557.0L640.48 569.0L640.44 581.0L640.39 593.0L640.32 605.0L640.23 617.0L640.12 629.0L639.99 641.0L639.83 653.0L639.66 665.0L639.47 677.0L639.26 689.0L639.03 701.0L638.77 713.0L638.50 725.0L638.21 737.0L637.90 749.0L637.57 761.0L637.22 773.0L636.84 785.0L636.45 797.0L636.05 808.8" stroke-width="1.91"/>
<path d="M633.72 113.0L634.40 125.0L635.07 137.0L635.71 149.0L636.34 161.0L636.94 173.0L637.53 185.0L638.10 197.0L638.65 209.0L639.19 221.0L639.70 233.0L640.20 245.0L640.67 257.0L641.13 269.0L641.57 281.0L641.99 293.0L642.39 305.0L642.77 317.0L643.14 329.0L643.48 341.0L643.81 353.0L644.11 365.0L644.40 377.0L644.67 389.0L644.92 401.0L645.16 413.0L645.37 425.0L645.56 437.0L645.74 449.0L645.90 461.0L646.03 473.0L646.15 485.0L646.26 497.0L646.34 509.0L646.40 521.0L646.45 533.0L646.47 545.0L646.48 557.0L646.47 569.0L646.43 581.0L646.38 593.0L646.31 605.0L646.22 617.0L646.11 629.0L645.98 641.0L645.83 653.0L645.66 665.0L645.47 677.0L645.26 689.0L645.03 701.0L644.78 713.0L644.51 725.0L644.23 737.0L643.92 749.0L643.59 761.0L643.24 773.0L642.88 785.0L642.49 797.0L642.09 808.8" stroke-width="1.91"/>
<path d="M638.98 113.0L639.65 125.0L640.30 137.0L640.94 149.0L641.56 161.0L642.16 173.0L642.74 185.0L643.30 197.0L643.85 209.0L644.37 221.0L644.88 233.0L645.37 245.0L645.84 257.0L646.29 269.0L646.73 281.0L647.14 293.0L647.54 305.0L647.91 317.0L648.27 329.0L648.61 341.0L648.93 353.0L649.24 365.0L649.52 377.0L649.79 389.0L650.04 401.0L650.27 413.0L650.48 425.0L650.67 437.0L650.84 449.0L651.00 461.0L651.13 473.0L651.25 485.0L651.35 497.0L651.43 509.0L651.49 521.0L651.54 533.0L651.56 545.0L651.57 557.0L651.56 569.0L651.53 581.0L651.47 593.0L651.40 605.0L651.31 617.0L651.20 629.0L651.07 641.0L650.93 653.0L650.76 665.0L650.57 677.0L650.36 689.0L650.14 701.0L649.89 713.0L649.62 725.0L649.34 737.0L649.04 749.0L648.71 761.0L648.37 773.0L648.01 785.0L647.62 797.0L647.23 808.8" stroke-width="1.90"/>
<path d="M520.48 113.0L521.35 125.0L522.20 137.0L523.02 149.0L523.81 161.0L524.59 173.0L525.34 185.0L526.06 197.0L526.77 209.0L527.45 221.0L528.10 233.0L528.73 245.0L529.34 257.0L529.92 269.0L530.49 281.0L531.02 293.0L531.54 305.0L532.03 317.0L532.49 329.0L532.93 341.0L533.35 353.0L533.75 365.0L534.12 377.0L534.47 389.0L534.79 401.0L535.09 413.0L535.37 425.0L535.62 437.0L535.85 449.0L536.06 461.0L536.24 473.0L536.40 485.0L536.54 497.0L536.65 509.0L536.74 521.0L536.80 533.0L536.84 545.0L536.86 557.0L536.85 569.0L536.82 581.0L536.77 593.0L536.68 605.0L536.58 617.0L536.45 629.0L536.29 641.0L536.11 653.0L535.91 665.0L535.68 677.0L535.42 689.0L535.14 701.0L534.84 713.0L534.51 725.0L534.15 737.0L533.78 749.0L533.37 761.0L532.94 773.0L532.49 785.0L532.01 797.0L531.52 808.8" stroke-width="1.95"/>
<path d="M567.73 113.0L568.52 125.0L569.29 137.0L570.03 149.0L570.76 161.0L571.46 173.0L572.15 185.0L572.81 197.0L573.45 209.0L574.06 221.0L574.66 233.0L575.23 245.0L575.79 257.0L576.32 269.0L576.83 281.0L577.31 293.0L577.78 305.0L578.22 317.0L578.65 329.0L579.05 341.0L579.43 353.0L579.79 365.0L580.12 377.0L580.44 389.0L580.73 401.0L581.00 413.0L581.25 425.0L581.48 437.0L581.69 449.0L581.88 461.0L582.04 473.0L582.18 485.0L582.30 497.0L582.40 509.0L582.48 521.0L582.53 533.0L582.57 545.0L582.58 557.0L582.57 569.0L582.54 581.0L582.48 593.0L582.41 605.0L582.31 617.0L582.18 629.0L582.04 641.0L581.87 653.0L581.68 665.0L581.47 677.0L581.23 689.0L580.97 701.0L580.69 713.0L580.38 725.0L580.06 737.0L579.71 749.0L579.34 761.0L578.94 773.0L578.52 785.0L578.08 797.0L577.63 808.8" stroke-width="1.93"/>
<path d="M615.78 113.0L616.49 125.0L617.18 137.0L617.86 149.0L618.51 161.0L619.14 173.0L619.76 185.0L620.35 197.0L620.93 209.0L621.48 221.0L622.02 233.0L622.53 245.0L623.03 257.0L623.51 269.0L623.97 281.0L624.40 293.0L624.82 305.0L625.22 317.0L625.60 329.0L625.96 341.0L626.30 353.0L626.62 365.0L626.93 377.0L627.21 389.0L627.47 401.0L627.71 413.0L627.94 425.0L628.14 437.0L628.32 449.0L628.49 461.0L628.63 473.0L628.76 485.0L628.87 497.0L628.95 509.0L629.02 521.0L629.07 533.0L629.10 545.0L629.10 557.0L629.09 569.0L629.06 581.0L629.01 593.0L628.93 605.0L628.84 617.0L628.73 629.0L628.59 641.0L628.44 653.0L628.26 665.0L628.06 677.0L627.85 689.0L627.61 701.0L627.35 713.0L627.07 725.0L626.78 737.0L626.46 749.0L626.12 761.0L625.76 773.0L625.38 785.0L624.97 797.0L624.56 808.8" stroke-width="1.91"/>
<path d="M650.15 113.0L650.81 125.0L651.45 137.0L652.07 149.0L652.68 161.0L653.26 173.0L653.83 185.0L654.38 197.0L654.91 209.0L655.43 221.0L655.92 233.0L656.40 245.0L656.86 257.0L657.30 269.0L657.73 281.0L658.13 293.0L658.52 305.0L658.89 317.0L659.24 329.0L659.57 341.0L659.88 353.0L660.18 365.0L660.46 377.0L660.72 389.0L660.96 401.0L661.18 413.0L661.39 425.0L661.58 437.0L661.75 449.0L661.90 461.0L662.03 473.0L662.15 485.0L662.24 497.0L662.32 509.0L662.38 521.0L662.42 533.0L662.45 545.0L662.45 557.0L662.44 569.0L662.41 581.0L662.36 593.0L662.29 605.0L662.20 617.0L662.09 629.0L661.97 641.0L661.82 653.0L661.65 665.0L661.47 677.0L661.27 689.0L661.05 701.0L660.80 713.0L660.54 725.0L660.26 737.0L659.97 749.0L659.65 761.0L659.31 773.0L658.96 785.0L658.58 797.0L658.19 808.8" stroke-width="1.90"/>
<path d="M406.75 113.0L407.74 125.0L408.71 137.0L409.66 149.0L410.58 161.0L411.47 173.0L412.33 185.0L413.17 197.0L413.98 209.0L414.77 221.0L415.53 233.0L416.27 245.0L416.97 257.0L417.65 269.0L418.31 281.0L418.94 293.0L419.54 305.0L420.12 317.0L420.67 329.0L421.19 341.0L421.69 353.0L422.16 365.0L422.61 377.0L423.03 389.0L423.42 401.0L423.78 413.0L424.12 425.0L424.44 437.0L424.73 449.0L424.99 461.0L425.22 473.0L425.43 485.0L425.61 497.0L425.77 509.0L425.90 521.0L426.00 533.0L426.08 545.0L426.13 557.0L426.16 569.0L426.16 581.0L426.13 593.0L426.07 605.0L425.99 617.0L425.88 629.0L425.74 641.0L425.57 653.0L425.37 665.0L425.15 677.0L424.90 689.0L424.63 701.0L424.32 713.0L423.99 725.0L423.63 737.0L423.24 749.0L422.83 761.0L422.39 773.0L421.92 785.0L421.42 797.0L420.90 808.8" stroke-width="2.00"/>
<path d="M416.79 113.0L417.78 125.0L418.74 137.0L419.67 149.0L420.58 161.0L421.46 173.0L422.31 185.0L423.14 197.0L423.94 209.0L424.72 221.0L425.47 233.0L426.20 245.0L426.90 257.0L427.57 269.0L428.22 281.0L428.84 293.0L429.43 305.0L430.00 317.0L430.54 329.0L431.06 341.0L431.55 353.0L432.01 365.0L432.45 377.0L432.86 389.0L433.25 401.0L433.61 413.0L433.95 425.0L434.25 437.0L434.54 449.0L434.79 461.0L435.02 473.0L435.23 485.0L435.40 497.0L435.56 509.0L435.68 521.0L435.78 533.0L435.86 545.0L435.90 557.0L435.93 569.0L435.92 581.0L435.89 593.0L435.83 605.0L435.74 617.0L435.63 629.0L435.49 641.0L435.32 653.0L435.13 665.0L434.90 677.0L434.65 689.0L434.37 701.0L434.07 713.0L433.74 725.0L433.38 737.0L432.99 749.0L432.58 761.0L432.13 773.0L431.66 785.0L431.17 797.0L430.65 808.8" stroke-width="2.00"/>
<path d="M430.62 113.0L431.59 125.0L432.54 137.0L433.46 149.0L434.35 161.0L435.21 173.0L436.06 185.0L436.87 197.0L437.66 209.0L438.42 221.0L439.16 233.0L439.88 245.0L440.56 257.0L441.22 269.0L441.86 281.0L442.47 293.0L443.05 305.0L443.61 317.0L444.14 329.0L444.65 341.0L445.13 353.0L445.58 365.0L446.01 377.0L446.42 389.0L446.80 401.0L447.15 413.0L447.47 425.0L447.78 437.0L448.05 449.0L448.30 461.0L448.52 473.0L448.72 485.0L448.89 497.0L449.04 509.0L449.16 521.0L449.25 533.0L449.32 545.0L449.37 557.0L449.38 569.0L449.38 581.0L449.34 593.0L449.28 605.0L449.19 617.0L449.07 629.0L448.93 641.0L448.76 653.0L448.56 665.0L448.33 677.0L448.08 689.0L447.80 701.0L447.50 713.0L447.17 725.0L446.81 737.0L446.42 749.0L446.01 761.0L445.56 773.0L445.10 785.0L444.60 797.0L444.09 808.8" stroke-width="1.99"/>
<path d="M440.15 113.0L441.11 125.0L442.04 137.0L442.95 149.0L443.83 161.0L444.69 173.0L445.52 185.0L446.33 197.0L447.11 209.0L447.86 221.0L448.59 233.0L449.30 245.0L449.98 257.0L450.63 269.0L451.26 281.0L451.86 293.0L452.43 305.0L452.99 317.0L453.51 329.0L454.01 341.0L454.48 353.0L454.93 365.0L455.36 377.0L455.75 389.0L456.13 401.0L456.47 413.0L456.79 425.0L457.09 437.0L457.36 449.0L457.60 461.0L457.82 473.0L458.02 485.0L458.18 497.0L458.33 509.0L458.44 521.0L458.53 533.0L458.60 545.0L458.64 557.0L458.66 569.0L458.64 581.0L458.61 593.0L458.54 605.0L458.45 617.0L458.33 629.0L458.19 641.0L458.01 653.0L457.81 665.0L457.59 677.0L457.34 689.0L457.06 701.0L456.75 713.0L456.42 725.0L456.06 737.0L455.67 749.0L455.26 761.0L454.82 773.0L454.35 785.0L453.86 797.0L453.35 808.8" stroke-width="1.99"/>
<path d="M449.57 113.0L450.52 125.0L451.45 137.0L452.34 149.0L453.22 161.0L454.06 173.0L454.89 185.0L455.68 197.0L456.45 209.0L457.20 221.0L457.92 233.0L458.62 245.0L459.29 257.0L459.93 269.0L460.55 281.0L461.15 293.0L461.72 305.0L462.26 317.0L462.78 329.0L463.27 341.0L463.74 353.0L464.18 365.0L464.60 377.0L464.99 389.0L465.36 401.0L465.70 413.0L466.01 425.0L466.30 437.0L466.57 449.0L466.81 461.0L467.02 473.0L467.21 485.0L467.38 497.0L467.51 509.0L467.63 521.0L467.72 533.0L467.78 545.0L467.82 557.0L467.83 569.0L467.81 581.0L467.77 593.0L467.71 605.0L467.61 617.0L467.49 629.0L467.35 641.0L467.17 653.0L466.97 665.0L466.74 677.0L466.49 689.0L466.21 701.0L465.91 713.0L465.57 725.0L465.21 737.0L464.83 749.0L464.41 761.0L463.97 773.0L463.51 785.0L463.02 797.0L462.51 808.8" stroke-width="1.98"/>
<path d="M458.89 113.0L459.83 125.0L460.75 137.0L461.63 149.0L462.50 161.0L463.33 173.0L464.15 185.0L464.94 197.0L465.70 209.0L466.44 221.0L467.15 233.0L467.84 245.0L468.50 257.0L469.13 269.0L469.75 281.0L470.33 293.0L470.90 305.0L471.43 317.0L471.94 329.0L472.43 341.0L472.89 353.0L473.33 365.0L473.74 377.0L474.12 389.0L474.49 401.0L474.82 413.0L475.13 425.0L475.42 437.0L475.68 449.0L475.91 461.0L476.12 473.0L476.31 485.0L476.47 497.0L476.60 509.0L476.71 521.0L476.80 533.0L476.86 545.0L476.89 557.0L476.90 569.0L476.88 581.0L476.84 593.0L476.77 605.0L476.68 617.0L476.55 629.0L476.41 641.0L476.23 653.0L476.03 665.0L475.80 677.0L475.55 689.0L475.27 701.0L474.96 713.0L474.63 725.0L474.27 737.0L473.88 749.0L473.47 761.0L473.03 773.0L472.57 785.0L472.07 797.0L471.57 808.8" stroke-width="1.98"/>
<path d="M468.01 113.0L468.94 125.0L469.84 137.0L470.72 149.0L471.57 161.0L472.40 173.0L473.20 185.0L473.98 197.0L474.74 209.0L475.47 221.0L476.17 233.0L476.85 245.0L477.50 257.0L478.13 269.0L478.74 281.0L479.32 293.0L479.87 305.0L480.40 317.0L480.91 329.0L481.39 341.0L481.84 353.0L482.27 365.0L482.68 377.0L483.06 389.0L483.41 401.0L483.74 413.0L484.05 425.0L484.33 437.0L484.59 449.0L484.82 461.0L485.02 473.0L485.20 485.0L485.36 497.0L485.49 509.0L485.60 521.0L485.68 533.0L485.74 545.0L485.77 557.0L485.77 569.0L485.76 581.0L485.71 593.0L485.64 605.0L485.54 617.0L485.42 629.0L485.27 641.0L485.09 653.0L484.89 665.0L484.66 677.0L484.41 689.0L484.12 701.0L483.82 713.0L483.48 725.0L483.12 737.0L482.74 749.0L482.33 761.0L481.89 773.0L481.43 785.0L480.94 797.0L480.43 808.8" stroke-width="1.98"/>
<path d="M481.52 113.0L482.44 125.0L483.32 137.0L484.19 149.0L485.03 161.0L485.84 173.0L486.63 185.0L487.40 197.0L488.14 209.0L488.86 221.0L489.55 233.0L490.22 245.0L490.86 257.0L491.48 269.0L492.07 281.0L492.64 293.0L493.19 305.0L493.71 317.0L494.20 329.0L494.67 341.0L495.12 353.0L495.54 365.0L495.94 377.0L496.31 389.0L496.66 401.0L496.98 413.0L497.28 425.0L497.55 437.0L497.80 449.0L498.02 461.0L498.22 473.0L498.40 485.0L498.55 497.0L498.68 509.0L498.78 521.0L498.85 533.0L498.91 545.0L498.93 557.0L498.94 569.0L498.91 581.0L498.86 593.0L498.79 605.0L498.69 617.0L498.56 629.0L498.41 641.0L498.23 653.0L498.03 665.0L497.80 677.0L497.54 689.0L497.26 701.0L496.96 713.0L496.62 725.0L496.26 737.0L495.88 749.0L495.47 761.0L495.03 773.0L494.57 785.0L494.08 797.0L493.58 808.8" stroke-width="1.97"/>
<path d="M490.43 113.0L491.33 125.0L492.21 137.0L493.07 149.0L493.90 161.0L494.70 173.0L495.49 185.0L496.24 197.0L496.98 209.0L497.68 221.0L498.37 233.0L499.03 245.0L499.66 257.0L500.27 269.0L500.86 281.0L501.42 293.0L501.96 305.0L502.47 317.0L502.96 329.0L503.43 341.0L503.87 353.0L504.28 365.0L504.67 377.0L505.04 389.0L505.38 401.0L505.70 413.0L505.99 425.0L506.26 437.0L506.51 449.0L506.73 461.0L506.92 473.0L507.10 485.0L507.24 497.0L507.37 509.0L507.46 521.0L507.54 533.0L507.59 545.0L507.61 557.0L507.61 569.0L507.59 581.0L507.53 593.0L507.46 605.0L507.36 617.0L507.23 629.0L507.07 641.0L506.90 653.0L506.69 665.0L506.46 677.0L506.20 689.0L505.92 701.0L505.62 713.0L505.28 725.0L504.92 737.0L504.54 749.0L504.13 761.0L503.69 773.0L503.23 785.0L502.75 797.0L502.24 808.8" stroke-width="1.97"/>
<path d="M498.72 113.0L499.61 125.0L500.48 137.0L501.33 149.0L502.15 161.0L502.95 173.0L503.72 185.0L504.47 197.0L505.20 209.0L505.90 221.0L506.58 233.0L507.23 245.0L507.86 257.0L508.46 269.0L509.04 281.0L509.60 293.0L510.13 305.0L510.64 317.0L511.12 329.0L511.58 341.0L512.01 353.0L512.42 365.0L512.81 377.0L513.17 389.0L513.51 401.0L513.82 413.0L514.11 425.0L514.38 437.0L514.62 449.0L514.83 461.0L515.02 473.0L515.19 485.0L515.34 497.0L515.46 509.0L515.55 521.0L515.62 533.0L515.67 545.0L515.69 557.0L515.69 569.0L515.66 581.0L515.61 593.0L515.53 605.0L515.43 617.0L515.30 629.0L515.14 641.0L514.96 653.0L514.76 665.0L514.52 677.0L514.27 689.0L513.99 701.0L513.68 713.0L513.35 725.0L512.99 737.0L512.60 749.0L512.19 761.0L511.76 773.0L511.30 785.0L510.81 797.0L510.31 808.8" stroke-width="1.96"/>
<path d="M507.01 113.0L507.89 125.0L508.76 137.0L509.59 149.0L510.41 161.0L511.20 173.0L511.96 185.0L512.71 197.0L513.42 209.0L514.12 221.0L514.79 233.0L515.43 245.0L516.05 257.0L516.65 269.0L517.22 281.0L517.77 293.0L518.30 305.0L518.80 317.0L519.28 329.0L519.73 341.0L520.16 353.0L520.56 365.0L520.94 377.0L521.30 389.0L521.63 401.0L521.94 413.0L522.23 425.0L522.49 437.0L522.72 449.0L522.94 461.0L523.12 473.0L523.29 485.0L523.43 497.0L523.55 509.0L523.64 521.0L523.71 533.0L523.75 545.0L523.77 557.0L523.77 569.0L523.74 581.0L523.68 593.0L523.60 605.0L523.50 617.0L523.36 629.0L523.21 641.0L523.03 653.0L522.82 665.0L522.59 677.0L522.33 689.0L522.05 701.0L521.74 713.0L521.41 725.0L521.05 737.0L520.67 749.0L520.26 761.0L519.83 773.0L519.37 785.0L518.88 797.0L518.38 808.8" stroke-width="1.96"/>
<path d="M515.10 113.0L515.98 125.0L516.83 137.0L517.66 149.0L518.46 161.0L519.25 173.0L520.00 185.0L520.74 197.0L521.45 209.0L522.13 221.0L522.79 233.0L523.43 245.0L524.05 257.0L524.64 269.0L525.20 281.0L525.75 293.0L526.27 305.0L526.76 317.0L527.23 329.0L527.68 341.0L528.10 353.0L528.50 365.0L528.88 377.0L529.23 389.0L529.56 401.0L529.86 413.0L530.14 425.0L530.40 437.0L530.63 449.0L530.84 461.0L531.03 473.0L531.19 485.0L531.32 497.0L531.44 509.0L531.53 521.0L531.59 533.0L531.63 545.0L531.65 557.0L531.64 569.0L531.61 581.0L531.56 593.0L531.48 605.0L531.37 617.0L531.24 629.0L531.08 641.0L530.90 653.0L530.69 665.0L530.46 677.0L530.20 689.0L529.92 701.0L529.61 713.0L529.28 725.0L528.93 737.0L528.54 749.0L528.14 761.0L527.70 773.0L527.25 785.0L526.76 797.0L526.27 808.8" stroke-width="1.96"/>
<path d="M534.19 113.0L535.03 125.0L535.86 137.0L536.66 149.0L537.43 161.0L538.19 173.0L538.92 185.0L539.62 197.0L540.31 209.0L540.97 221.0L541.61 233.0L542.22 245.0L542.81 257.0L543.38 269.0L543.93 281.0L544.45 293.0L544.95 305.0L545.43 317.0L545.88 329.0L546.31 341.0L546.72 353.0L547.10 365.0L547.46 377.0L547.80 389.0L548.12 401.0L548.41 413.0L548.68 425.0L548.93 437.0L549.15 449.0L549.35 461.0L549.53 473.0L549.68 485.0L549.81 497.0L549.92 509.0L550.00 521.0L550.07 533.0L550.10 545.0L550.12 557.0L550.11 569.0L550.08 581.0L550.03 593.0L549.95 605.0L549.84 617.0L549.71 629.0L549.56 641.0L549.38 653.0L549.18 665.0L548.96 677.0L548.71 689.0L548.43 701.0L548.14 713.0L547.81 725.0L547.47 737.0L547.10 749.0L546.70 761.0L546.28 773.0L545.84 785.0L545.37 797.0L544.89 808.8" stroke-width="1.95"/>
<path d="M541.82 113.0L542.66 125.0L543.47 137.0L544.25 149.0L545.02 161.0L545.76 173.0L546.48 185.0L547.18 197.0L547.85 209.0L548.50 221.0L549.13 233.0L549.73 245.0L550.32 257.0L550.88 269.0L551.42 281.0L551.93 293.0L552.42 305.0L552.89 317.0L553.34 329.0L553.76 341.0L554.16 353.0L554.54 365.0L554.90 377.0L555.23 389.0L555.54 401.0L555.83 413.0L556.09 425.0L556.34 437.0L556.56 449.0L556.75 461.0L556.93 473.0L557.08 485.0L557.21 497.0L557.31 509.0L557.40 521.0L557.46 533.0L557.49 545.0L557.51 557.0L557.50 569.0L557.47 581.0L557.41 593.0L557.33 605.0L557.23 617.0L557.10 629.0L556.95 641.0L556.78 653.0L556.58 665.0L556.36 677.0L556.11 689.0L555.84 701.0L555.54 713.0L555.23 725.0L554.88 737.0L554.52 749.0L554.13 761.0L553.72 773.0L553.28 785.0L552.82 797.0L552.34 808.8" stroke-width="1.95"/>
<path d="M549.36 113.0L550.18 125.0L550.97 137.0L551.75 149.0L552.50 161.0L553.23 173.0L553.94 185.0L554.63 197.0L555.29 209.0L555.93 221.0L556.55 233.0L557.15 245.0L557.72 257.0L558.27 269.0L558.80 281.0L559.31 293.0L559.79 305.0L560.26 317.0L560.70 329.0L561.11 341.0L561.51 353.0L561.88 365.0L562.23 377.0L562.56 389.0L562.86 401.0L563.15 413.0L563.41 425.0L563.65 437.0L563.86 449.0L564.06 461.0L564.23 473.0L564.38 485.0L564.50 497.0L564.61 509.0L564.69 521.0L564.75 533.0L564.78 545.0L564.80 557.0L564.79 569.0L564.76 581.0L564.70 593.0L564.62 605.0L564.52 617.0L564.39 629.0L564.24 641.0L564.07 653.0L563.87 665.0L563.65 677.0L563.41 689.0L563.14 701.0L562.85 713.0L562.54 725.0L562.20 737.0L561.84 749.0L561.46 761.0L561.05 773.0L560.62 785.0L560.16 797.0L559.69 808.8" stroke-width="1.94"/>
<path d="M556.58 113.0L557.38 125.0L558.17 137.0L558.94 149.0L559.68 161.0L560.40 173.0L561.10 185.0L561.77 197.0L562.43 209.0L563.06 221.0L563.67 233.0L564.26 245.0L564.82 257.0L565.36 269.0L565.89 281.0L566.39 293.0L566.86 305.0L567.32 317.0L567.75 329.0L568.16 341.0L568.55 353.0L568.92 365.0L569.26 377.0L569.59 389.0L569.89 401.0L570.17 413.0L570.42 425.0L570.66 437.0L570.87 449.0L571.06 461.0L571.23 473.0L571.37 485.0L571.50 497.0L571.60 509.0L571.68 521.0L571.74 533.0L571.77 545.0L571.79 557.0L571.78 569.0L571.75 581.0L571.69 593.0L571.61 605.0L571.51 617.0L571.39 629.0L571.24 641.0L571.07 653.0L570.87 665.0L570.65 677.0L570.41 689.0L570.15 701.0L569.86 713.0L569.55 725.0L569.22 737.0L568.86 749.0L568.48 761.0L568.08 773.0L567.65 785.0L567.20 797.0L566.74 808.8" stroke-width="1.94"/>
<path d="M563.69 113.0L564.49 125.0L565.27 137.0L566.02 149.0L566.75 161.0L567.46 173.0L568.15 185.0L568.81 197.0L569.46 209.0L570.08 221.0L570.68 233.0L571.26 245.0L571.82 257.0L572.35 269.0L572.87 281.0L573.36 293.0L573.83 305.0L574.28 317.0L574.71 329.0L575.11 341.0L575.49 353.0L575.85 365.0L576.19 377.0L576.51 389.0L576.81 401.0L577.08 413.0L577.33 425.0L577.57 437.0L577.77 449.0L577.96 461.0L578.13 473.0L578.27 485.0L578.39 497.0L578.49 509.0L578.57 521.0L578.63 533.0L578.66 545.0L578.68 557.0L578.67 569.0L578.63 581.0L578.58 593.0L578.50 605.0L578.40 617.0L578.28 629.0L578.13 641.0L577.96 653.0L577.77 665.0L577.55 677.0L577.32 689.0L577.06 701.0L576.77 713.0L576.47 725.0L576.14 737.0L575.78 749.0L575.41 761.0L575.01 773.0L574.59 785.0L574.15 797.0L573.69 808.8" stroke-width="1.94"/>
<path d="M580.92 113.0L581.69 125.0L582.44 137.0L583.16 149.0L583.87 161.0L584.55 173.0L585.22 185.0L585.86 197.0L586.48 209.0L587.08 221.0L587.66 233.0L588.22 245.0L588.75 257.0L589.27 269.0L589.77 281.0L590.24 293.0L590.69 305.0L591.12 317.0L591.54 329.0L591.93 341.0L592.29 353.0L592.64 365.0L592.97 377.0L593.28 389.0L593.56 401.0L593.82 413.0L594.07 425.0L594.29 437.0L594.49 449.0L594.67 461.0L594.83 473.0L594.97 485.0L595.08 497.0L595.18 509.0L595.25 521.0L595.31 533.0L595.34 545.0L595.35 557.0L595.34 569.0L595.31 581.0L595.25 593.0L595.18 605.0L595.08 617.0L594.96 629.0L594.81 641.0L594.65 653.0L594.46 665.0L594.25 677.0L594.02 689.0L593.77 701.0L593.50 713.0L593.20 725.0L592.88 737.0L592.54 749.0L592.17 761.0L591.79 773.0L591.38 785.0L590.95 797.0L590.51 808.8" stroke-width="1.93"/>
<path d="M587.21 113.0L587.97 125.0L588.71 137.0L589.42 149.0L590.12 161.0L590.79 173.0L591.45 185.0L592.08 197.0L592.70 209.0L593.29 221.0L593.86 233.0L594.41 245.0L594.94 257.0L595.45 269.0L595.94 281.0L596.41 293.0L596.85 305.0L597.28 317.0L597.68 329.0L598.07 341.0L598.43 353.0L598.77 365.0L599.10 377.0L599.40 389.0L599.68 401.0L599.94 413.0L600.18 425.0L600.40 437.0L600.60 449.0L600.77 461.0L600.93 473.0L601.06 485.0L601.18 497.0L601.27 509.0L601.35 521.0L601.40 533.0L601.43 545.0L601.44 557.0L601.43 569.0L601.40 581.0L601.34 593.0L601.27 605.0L601.17 617.0L601.05 629.0L600.91 641.0L600.75 653.0L600.56 665.0L600.36 677.0L600.13 689.0L599.88 701.0L599.60 713.0L599.31 725.0L598.99 737.0L598.66 749.0L598.30 761.0L597.92 773.0L597.51 785.0L597.09 797.0L596.65 808.8" stroke-width="1.93"/>
<path d="M593.50 113.0L594.25 125.0L594.98 137.0L595.68 149.0L596.37 161.0L597.04 173.0L597.68 185.0L598.31 197.0L598.91 209.0L599.50 221.0L600.06 233.0L600.60 245.0L601.13 257.0L601.63 269.0L602.11 281.0L602.57 293.0L603.01 305.0L603.43 317.0L603.83 329.0L604.21 341.0L604.57 353.0L604.91 365.0L605.22 377.0L605.52 389.0L605.80 401.0L606.05 413.0L606.29 425.0L606.51 437.0L606.70 449.0L606.87 461.0L607.03 473.0L607.16 485.0L607.27 497.0L607.37 509.0L607.44 521.0L607.49 533.0L607.52 545.0L607.53 557.0L607.52 569.0L607.49 581.0L607.43 593.0L607.36 605.0L607.26 617.0L607.14 629.0L607.00 641.0L606.84 653.0L606.66 665.0L606.46 677.0L606.23 689.0L605.98 701.0L605.71 713.0L605.42 725.0L605.11 737.0L604.78 749.0L604.42 761.0L604.05 773.0L603.65 785.0L603.23 797.0L602.80 808.8" stroke-width="1.92"/>
<path d="M600.41 113.0L601.15 125.0L601.86 137.0L602.56 149.0L603.24 161.0L603.89 173.0L604.53 185.0L605.14 197.0L605.74 209.0L606.31 221.0L606.87 233.0L607.40 245.0L607.92 257.0L608.41 269.0L608.89 281.0L609.34 293.0L609.78 305.0L610.19 317.0L610.58 329.0L610.96 341.0L611.31 353.0L611.64 365.0L611.95 377.0L612.25 389.0L612.52 401.0L612.77 413.0L613.00 425.0L613.21 437.0L613.41 449.0L613.58 461.0L613.73 473.0L613.86 485.0L613.97 497.0L614.06 509.0L614.13 521.0L614.18 533.0L614.21 545.0L614.22 557.0L614.21 569.0L614.18 581.0L614.12 593.0L614.05 605.0L613.95 617.0L613.84 629.0L613.70 641.0L613.54 653.0L613.36 665.0L613.16 677.0L612.93 689.0L612.69 701.0L612.42 713.0L612.14 725.0L611.83 737.0L611.50 749.0L611.15 761.0L610.78 773.0L610.39 785.0L609.97 797.0L609.54 808.8" stroke-width="1.92"/>
<path d="M606.60 113.0L607.32 125.0L608.03 137.0L608.72 149.0L609.38 161.0L610.03 173.0L610.66 185.0L611.27 197.0L611.85 209.0L612.42 221.0L612.97 233.0L613.50 245.0L614.00 257.0L614.49 269.0L614.96 281.0L615.41 293.0L615.83 305.0L616.24 317.0L616.63 329.0L617.00 341.0L617.34 353.0L617.67 365.0L617.98 377.0L618.27 389.0L618.54 401.0L618.79 413.0L619.01 425.0L619.22 437.0L619.41 449.0L619.58 461.0L619.73 473.0L619.86 485.0L619.97 497.0L620.06 509.0L620.12 521.0L620.17 533.0L620.20 545.0L620.21 557.0L620.20 569.0L620.17 581.0L620.12 593.0L620.04 605.0L619.95 617.0L619.83 629.0L619.69 641.0L619.54 653.0L619.36 665.0L619.16 677.0L618.94 689.0L618.70 701.0L618.43 713.0L618.15 725.0L617.85 737.0L617.52 749.0L617.17 761.0L616.81 773.0L616.42 785.0L616.01 797.0L615.59 808.8" stroke-width="1.92"/>
<path d="M612.58 113.0L613.30 125.0L613.99 137.0L614.67 149.0L615.33 161.0L615.97 173.0L616.58 185.0L617.18 197.0L617.76 209.0L618.32 221.0L618.86 233.0L619.38 245.0L619.88 257.0L620.36 269.0L620.83 281.0L621.27 293.0L621.69 305.0L622.09 317.0L622.47 329.0L622.84 341.0L623.18 353.0L623.50 365.0L623.81 377.0L624.09 389.0L624.36 401.0L624.60 413.0L624.83 425.0L625.03 437.0L625.22 449.0L625.38 461.0L625.53 473.0L625.66 485.0L625.76 497.0L625.85 509.0L625.92 521.0L625.97 533.0L625.99 545.0L626.00 557.0L625.99 569.0L625.96 581.0L625.91 593.0L625.83 605.0L625.74 617.0L625.62 629.0L625.49 641.0L625.33 653.0L625.16 665.0L624.96 677.0L624.74 689.0L624.50 701.0L624.24 713.0L623.96 725.0L623.66 737.0L623.34 749.0L623.00 761.0L622.64 773.0L622.25 785.0L621.85 797.0L621.43 808.8" stroke-width="1.92"/>
<path d="M624.44 113.0L625.13 125.0L625.81 137.0L626.47 149.0L627.11 161.0L627.73 173.0L628.33 185.0L628.92 197.0L629.48 209.0L630.02 221.0L630.55 233.0L631.06 245.0L631.54 257.0L632.01 269.0L632.46 281.0L632.89 293.0L633.30 305.0L633.69 317.0L634.06 329.0L634.41 341.0L634.75 353.0L635.06 365.0L635.36 377.0L635.63 389.0L635.89 401.0L636.13 413.0L636.35 425.0L636.55 437.0L636.73 449.0L636.89 461.0L637.03 473.0L637.15 485.0L637.26 497.0L637.34 509.0L637.41 521.0L637.45 533.0L637.48 545.0L637.49 557.0L637.48 569.0L637.44 581.0L637.39 593.0L637.32 605.0L637.23 617.0L637.11 629.0L636.98 641.0L636.83 653.0L636.66 665.0L636.46 677.0L636.25 689.0L636.02 701.0L635.76 713.0L635.49 725.0L635.20 737.0L634.88 749.0L634.55 761.0L634.19 773.0L633.82 785.0L633.43 797.0L633.02 808.8" stroke-width="1.91"/>
<path d="M630.62 113.0L631.31 125.0L631.98 137.0L632.63 149.0L633.26 161.0L633.87 173.0L634.46 185.0L635.04 197.0L635.59 209.0L636.13 221.0L636.65 233.0L637.15 245.0L637.63 257.0L638.09 269.0L638.53 281.0L638.95 293.0L639.36 305.0L639.74 317.0L640.11 329.0L640.46 341.0L640.78 353.0L641.09 365.0L641.38 377.0L641.66 389.0L641.91 401.0L642.14 413.0L642.36 425.0L642.55 437.0L642.73 449.0L642.89 461.0L643.03 473.0L643.15 485.0L643.25 497.0L643.34 509.0L643.40 521.0L643.44 533.0L643.47 545.0L643.48 557.0L643.47 569.0L643.43 581.0L643.38 593.0L643.31 605.0L643.22 617.0L643.11 629.0L642.98 641.0L642.83 653.0L642.65 665.0L642.46 677.0L642.25 689.0L642.02 701.0L641.77 713.0L641.50 725.0L641.21 737.0L640.90 749.0L640.57 761.0L640.22 773.0L639.85 785.0L639.47 797.0L639.06 808.8" stroke-width="1.91"/>
<path d="M636.81 113.0L637.48 125.0L638.14 137.0L638.78 149.0L639.41 161.0L640.01 173.0L640.59 185.0L641.16 197.0L641.71 209.0L642.23 221.0L642.74 233.0L643.24 245.0L643.71 257.0L644.16 269.0L644.60 281.0L645.01 293.0L645.41 305.0L645.79 317.0L646.15 329.0L646.50 341.0L646.82 353.0L647.12 365.0L647.41 377.0L647.68 389.0L647.93 401.0L648.16 413.0L648.37 425.0L648.56 437.0L648.74 449.0L648.89 461.0L649.03 473.0L649.15 485.0L649.25 497.0L649.33 509.0L649.39 521.0L649.44 533.0L649.46 545.0L649.47 557.0L649.46 569.0L649.43 581.0L649.37 593.0L649.30 605.0L649.21 617.0L649.10 629.0L648.97 641.0L648.82 653.0L648.65 665.0L648.47 677.0L648.26 689.0L648.03 701.0L647.78 713.0L647.52 725.0L647.23 737.0L646.92 749.0L646.60 761.0L646.25 773.0L645.89 785.0L645.51 797.0L645.11 808.8" stroke-width="1.91"/>
<path d="M642.06 113.0L642.73 125.0L643.38 137.0L644.02 149.0L644.63 161.0L645.23 173.0L645.80 185.0L646.36 197.0L646.90 209.0L647.42 221.0L647.93 233.0L648.41 245.0L648.88 257.0L649.33 269.0L649.76 281.0L650.17 293.0L650.56 305.0L650.94 317.0L651.29 329.0L651.63 341.0L651.95 353.0L652.25 365.0L652.53 377.0L652.80 389.0L653.04 401.0L653.27 413.0L653.48 425.0L653.67 437.0L653.84 449.0L654.00 461.0L654.13 473.0L654.25 485.0L654.35 497.0L654.43 509.0L654.49 521.0L654.53 533.0L654.56 545.0L654.56 557.0L654.55 569.0L654.52 581.0L654.47 593.0L654.40 605.0L654.31 617.0L654.20 629.0L654.07 641.0L653.92 653.0L653.75 665.0L653.57 677.0L653.36 689.0L653.14 701.0L652.89 713.0L652.63 725.0L652.35 737.0L652.04 749.0L651.72 761.0L651.38 773.0L651.02 785.0L650.64 797.0L650.25 808.8" stroke-width="1.90"/>
<path d="M423.48 113.0L424.46 125.0L425.41 137.0L426.34 149.0L427.24 161.0L428.11 173.0L428.96 185.0L429.78 197.0L430.58 209.0L431.35 221.0L432.10 233.0L432.82 245.0L433.51 257.0L434.18 269.0L434.82 281.0L435.43 293.0L436.02 305.0L436.58 317.0L437.12 329.0L437.63 341.0L438.12 353.0L438.58 365.0L439.01 377.0L439.42 389.0L439.80 401.0L440.16 413.0L440.49 425.0L440.80 437.0L441.07 449.0L441.33 461.0L441.55 473.0L441.76 485.0L441.93 497.0L442.08 509.0L442.20 521.0L442.30 533.0L442.37 545.0L442.42 557.0L442.44 569.0L442.43 581.0L442.40 593.0L442.34 605.0L442.25 617.0L442.13 629.0L441.99 641.0L441.82 653.0L441.63 665.0L441.40 677.0L441.15 689.0L440.87 701.0L440.57 713.0L440.23 725.0L439.87 737.0L439.49 749.0L439.07 761.0L438.63 773.0L438.16 785.0L437.67 797.0L437.15 808.8" stroke-width="1.99"/>
<path d="M526.47 113.0L527.33 125.0L528.16 137.0L528.97 149.0L529.76 161.0L530.53 173.0L531.27 185.0L531.98 197.0L532.68 209.0L533.35 221.0L534.00 233.0L534.62 245.0L535.22 257.0L535.80 269.0L536.35 281.0L536.89 293.0L537.39 305.0L537.88 317.0L538.34 329.0L538.77 341.0L539.19 353.0L539.58 365.0L539.95 377.0L540.29 389.0L540.61 401.0L540.91 413.0L541.18 425.0L541.43 437.0L541.66 449.0L541.86 461.0L542.04 473.0L542.20 485.0L542.33 497.0L542.44 509.0L542.53 521.0L542.59 533.0L542.63 545.0L542.65 557.0L542.64 569.0L542.61 581.0L542.56 593.0L542.47 605.0L542.37 617.0L542.24 629.0L542.09 641.0L541.91 653.0L541.70 665.0L541.47 677.0L541.22 689.0L540.95 701.0L540.64 713.0L540.32 725.0L539.97 737.0L539.59 749.0L539.19 761.0L538.77 773.0L538.32 785.0L537.85 797.0L537.36 808.8" stroke-width="1.95"/>
<path d="M573.92 113.0L574.70 125.0L575.46 137.0L576.19 149.0L576.91 161.0L577.60 173.0L578.28 185.0L578.93 197.0L579.56 209.0L580.17 221.0L580.76 233.0L581.32 245.0L581.87 257.0L582.39 269.0L582.90 281.0L583.38 293.0L583.84 305.0L584.28 317.0L584.69 329.0L585.09 341.0L585.46 353.0L585.82 365.0L586.15 377.0L586.46 389.0L586.75 401.0L587.02 413.0L587.26 425.0L587.49 437.0L587.69 449.0L587.88 461.0L588.04 473.0L588.18 485.0L588.30 497.0L588.39 509.0L588.47 521.0L588.53 533.0L588.56 545.0L588.57 557.0L588.56 569.0L588.53 581.0L588.47 593.0L588.40 605.0L588.30 617.0L588.18 629.0L588.03 641.0L587.87 653.0L587.68 665.0L587.46 677.0L587.23 689.0L586.97 701.0L586.70 713.0L586.40 725.0L586.07 737.0L585.73 749.0L585.36 761.0L584.97 773.0L584.55 785.0L584.12 797.0L583.67 808.8" stroke-width="1.93"/>
<path d="M644.64 113.0L645.31 125.0L645.95 137.0L646.58 149.0L647.19 161.0L647.78 173.0L648.36 185.0L648.91 197.0L649.45 209.0L649.97 221.0L650.47 233.0L650.95 245.0L651.41 257.0L651.86 269.0L652.29 281.0L652.70 293.0L653.09 305.0L653.46 317.0L653.81 329.0L654.15 341.0L654.47 353.0L654.76 365.0L655.04 377.0L655.31 389.0L655.55 401.0L655.78 413.0L655.98 425.0L656.17 437.0L656.34 449.0L656.50 461.0L656.63 473.0L656.75 485.0L656.85 497.0L656.93 509.0L656.99 521.0L657.03 533.0L657.05 545.0L657.06 557.0L657.05 569.0L657.02 581.0L656.96 593.0L656.89 605.0L656.81 617.0L656.70 629.0L656.57 641.0L656.42 653.0L656.26 665.0L656.07 677.0L655.87 689.0L655.64 701.0L655.40 713.0L655.14 725.0L654.85 737.0L654.55 749.0L654.23 761.0L653.89 773.0L653.54 785.0L653.16 797.0L652.77 808.8" stroke-width="1.90"/>
</g></g>
<g shape-rendering="crispEdges" fill="none" stroke="#c6c6c6">
<path d="M292.69 113.0L293.82 125.0L294.92 137.0L295.99 149.0L297.03 161.0L298.04 173.0L299.03 185.0L299.98 197.0L300.91 209.0L301.81 221.0L302.68 233.0L303.52 245.0L304.33 257.0L305.11 269.0L305.86 281.0L306.59 293.0L307.29 305.0L307.95 317.0L308.59 329.0L309.20 341.0L309.79 353.0L310.34 365.0L310.86 377.0L311.36 389.0L311.82 401.0L312.26 413.0L312.67 425.0L313.05 437.0L313.40 449.0L313.73 461.0L314.02 473.0L314.29 485.0L314.52 497.0L314.73 509.0L314.91 521.0L315.06 533.0L315.18 545.0L315.27 557.0L315.34 569.0L315.37 581.0L315.38 593.0L315.36 605.0L315.30 617.0L315.22 629.0L315.11 641.0L314.96 653.0L314.79 665.0L314.58 677.0L314.35 689.0L314.08 701.0L313.79 713.0L313.46 725.0L313.11 737.0L312.72 749.0L312.31 761.0L311.86 773.0L311.38 785.0L310.88 797.0L310.35 808.8" stroke-width="2.05" stroke-dasharray="1 0.991" stroke-dashoffset="0.96"/>
<path d="M306.24 113.0L307.35 125.0L308.43 137.0L309.49 149.0L310.52 161.0L311.51 173.0L312.48 185.0L313.43 197.0L314.34 209.0L315.22 221.0L316.08 233.0L316.91 245.0L317.70 257.0L318.48 269.0L319.22 281.0L319.93 293.0L320.62 305.0L321.27 317.0L321.90 329.0L322.50 341.0L323.07 353.0L323.62 365.0L324.13 377.0L324.62 389.0L325.07 401.0L325.50 413.0L325.90 425.0L326.28 437.0L326.62 449.0L326.93 461.0L327.22 473.0L327.48 485.0L327.71 497.0L327.91 509.0L328.08 521.0L328.23 533.0L328.34 545.0L328.43 557.0L328.49 569.0L328.52 581.0L328.52 593.0L328.50 605.0L328.44 617.0L328.35 629.0L328.23 641.0L328.09 653.0L327.91 665.0L327.70 677.0L327.47 689.0L327.20 701.0L326.90 713.0L326.58 725.0L326.22 737.0L325.83 749.0L325.42 761.0L324.97 773.0L324.50 785.0L323.99 797.0L323.46 808.8" stroke-width="2.04" stroke-dasharray="1 0.991" stroke-dashoffset="0.82"/>
<path d="M318.45 113.0L319.55 125.0L320.62 137.0L321.66 149.0L322.67 161.0L323.66 173.0L324.61 185.0L325.54 197.0L326.44 209.0L327.32 221.0L328.16 233.0L328.98 245.0L329.76 257.0L330.52 269.0L331.25 281.0L331.96 293.0L332.63 305.0L333.28 317.0L333.90 329.0L334.49 341.0L335.05 353.0L335.58 365.0L336.09 377.0L336.57 389.0L337.02 401.0L337.44 413.0L337.83 425.0L338.20 437.0L338.53 449.0L338.84 461.0L339.12 473.0L339.37 485.0L339.60 497.0L339.79 509.0L339.96 521.0L340.10 533.0L340.21 545.0L340.29 557.0L340.35 569.0L340.37 581.0L340.37 593.0L340.34 605.0L340.28 617.0L340.19 629.0L340.07 641.0L339.92 653.0L339.74 665.0L339.53 677.0L339.29 689.0L339.02 701.0L338.73 713.0L338.40 725.0L338.04 737.0L337.66 749.0L337.24 761.0L336.79 773.0L336.32 785.0L335.81 797.0L335.29 808.8" stroke-width="2.04" stroke-dasharray="1 0.984" stroke-dashoffset="-0.17"/>
<path d="M335.28 113.0L336.36 125.0L337.41 137.0L338.43 149.0L339.42 161.0L340.39 173.0L341.33 185.0L342.24 197.0L343.12 209.0L343.98 221.0L344.81 233.0L345.61 245.0L346.38 257.0L347.12 269.0L347.84 281.0L348.53 293.0L349.19 305.0L349.82 317.0L350.43 329.0L351.01 341.0L351.56 353.0L352.08 365.0L352.57 377.0L353.04 389.0L353.48 401.0L353.89 413.0L354.27 425.0L354.62 437.0L354.95 449.0L355.25 461.0L355.52 473.0L355.76 485.0L355.98 497.0L356.17 509.0L356.33 521.0L356.46 533.0L356.56 545.0L356.64 557.0L356.69 569.0L356.71 581.0L356.70 593.0L356.67 605.0L356.60 617.0L356.51 629.0L356.38 641.0L356.23 653.0L356.05 665.0L355.83 677.0L355.59 689.0L355.32 701.0L355.02 713.0L354.70 725.0L354.34 737.0L353.95 749.0L353.53 761.0L353.09 773.0L352.61 785.0L352.11 797.0L351.59 808.8" stroke-width="2.03" stroke-dasharray="1 0.985" stroke-dashoffset="1.85"/>
<path d="M347.18 113.0L348.24 125.0L349.28 137.0L350.29 149.0L351.27 161.0L352.22 173.0L353.15 185.0L354.05 197.0L354.92 209.0L355.77 221.0L356.58 233.0L357.37 245.0L358.13 257.0L358.87 269.0L359.57 281.0L360.25 293.0L360.90 305.0L361.52 317.0L362.12 329.0L362.69 341.0L363.23 353.0L363.74 365.0L364.23 377.0L364.69 389.0L365.12 401.0L365.52 413.0L365.90 425.0L366.24 437.0L366.56 449.0L366.86 461.0L367.12 473.0L367.36 485.0L367.57 497.0L367.75 509.0L367.91 521.0L368.03 533.0L368.13 545.0L368.21 557.0L368.25 569.0L368.27 581.0L368.26 593.0L368.22 605.0L368.15 617.0L368.05 629.0L367.92 641.0L367.77 653.0L367.58 665.0L367.37 677.0L367.13 689.0L366.85 701.0L366.55 713.0L366.22 725.0L365.87 737.0L365.48 749.0L365.06 761.0L364.62 773.0L364.14 785.0L363.64 797.0L363.12 808.8" stroke-width="2.03" stroke-dasharray="1 1.011" stroke-dashoffset="1.03"/>
<path d="M358.97 113.0L360.02 125.0L361.05 137.0L362.04 149.0L363.01 161.0L363.95 173.0L364.87 185.0L365.76 197.0L366.62 209.0L367.45 221.0L368.25 233.0L369.03 245.0L369.78 257.0L370.50 269.0L371.20 281.0L371.87 293.0L372.51 305.0L373.12 317.0L373.71 329.0L374.27 341.0L374.80 353.0L375.31 365.0L375.78 377.0L376.23 389.0L376.66 401.0L377.05 413.0L377.42 425.0L377.76 437.0L378.08 449.0L378.36 461.0L378.62 473.0L378.85 485.0L379.06 497.0L379.23 509.0L379.38 521.0L379.51 533.0L379.60 545.0L379.67 557.0L379.71 569.0L379.72 581.0L379.71 593.0L379.67 605.0L379.59 617.0L379.49 629.0L379.36 641.0L379.21 653.0L379.02 665.0L378.80 677.0L378.56 689.0L378.29 701.0L377.99 713.0L377.66 725.0L377.30 737.0L376.91 749.0L376.49 761.0L376.05 773.0L375.57 785.0L375.07 797.0L374.55 808.8" stroke-width="2.02" stroke-dasharray="1 0.984" stroke-dashoffset="-0.08"/>
<path d="M370.66 113.0L371.70 125.0L372.71 137.0L373.69 149.0L374.65 161.0L375.58 173.0L376.48 185.0L377.36 197.0L378.21 209.0L379.03 221.0L379.82 233.0L380.59 245.0L381.33 257.0L382.04 269.0L382.73 281.0L383.39 293.0L384.02 305.0L384.62 317.0L385.20 329.0L385.75 341.0L386.27 353.0L386.77 365.0L387.24 377.0L387.68 389.0L388.10 401.0L388.49 413.0L388.85 425.0L389.18 437.0L389.49 449.0L389.77 461.0L390.02 473.0L390.25 485.0L390.45 497.0L390.62 509.0L390.76 521.0L390.88 533.0L390.97 545.0L391.04 557.0L391.07 569.0L391.08 581.0L391.06 593.0L391.02 605.0L390.94 617.0L390.84 629.0L390.71 641.0L390.55 653.0L390.36 665.0L390.14 677.0L389.89 689.0L389.62 701.0L389.32 713.0L388.99 725.0L388.63 737.0L388.24 749.0L387.83 761.0L387.38 773.0L386.91 785.0L386.41 797.0L385.89 808.8" stroke-width="2.02" stroke-dasharray="1 1.001" stroke-dashoffset="2.13"/>
<path d="M385.02 113.0L386.04 125.0L387.03 137.0L388.00 149.0L388.94 161.0L389.86 173.0L390.74 185.0L391.60 197.0L392.44 209.0L393.25 221.0L394.03 233.0L394.78 245.0L395.51 257.0L396.21 269.0L396.88 281.0L397.53 293.0L398.15 305.0L398.74 317.0L399.31 329.0L399.85 341.0L400.36 353.0L400.85 365.0L401.31 377.0L401.74 389.0L402.15 401.0L402.53 413.0L402.88 425.0L403.20 437.0L403.50 449.0L403.78 461.0L404.02 473.0L404.24 485.0L404.43 497.0L404.60 509.0L404.74 521.0L404.85 533.0L404.94 545.0L404.99 557.0L405.03 569.0L405.03 581.0L405.01 593.0L404.96 605.0L404.88 617.0L404.77 629.0L404.64 641.0L404.47 653.0L404.28 665.0L404.06 677.0L403.82 689.0L403.54 701.0L403.24 713.0L402.91 725.0L402.55 737.0L402.16 749.0L401.74 761.0L401.30 773.0L400.83 785.0L400.33 797.0L399.81 808.8" stroke-width="2.01" stroke-dasharray="1 1.007" stroke-dashoffset="-0.05"/>
<path d="M395.88 113.0L396.89 125.0L397.87 137.0L398.83 149.0L399.76 161.0L400.66 173.0L401.54 185.0L402.39 197.0L403.21 209.0L404.01 221.0L404.78 233.0L405.52 245.0L406.24 257.0L406.93 269.0L407.60 281.0L408.23 293.0L408.84 305.0L409.43 317.0L409.99 329.0L410.52 341.0L411.03 353.0L411.50 365.0L411.96 377.0L412.38 389.0L412.78 401.0L413.15 413.0L413.50 425.0L413.82 437.0L414.11 449.0L414.38 461.0L414.62 473.0L414.84 485.0L415.02 497.0L415.18 509.0L415.32 521.0L415.43 533.0L415.51 545.0L415.56 557.0L415.59 569.0L415.59 581.0L415.57 593.0L415.51 605.0L415.43 617.0L415.32 629.0L415.19 641.0L415.02 653.0L414.83 665.0L414.61 677.0L414.36 689.0L414.08 701.0L413.78 713.0L413.45 725.0L413.09 737.0L412.70 749.0L412.29 761.0L411.84 773.0L411.37 785.0L410.87 797.0L410.36 808.8" stroke-width="2.01" stroke-dasharray="1 1.009" stroke-dashoffset="0.88"/>
<path d="M406.75 113.0L407.74 125.0L408.71 137.0L409.66 149.0L410.58 161.0L411.47 173.0L412.33 185.0L413.17 197.0L413.98 209.0L414.77 221.0L415.53 233.0L416.27 245.0L416.97 257.0L417.65 269.0L418.31 281.0L418.94 293.0L419.54 305.0L420.12 317.0L420.67 329.0L421.19 341.0L421.69 353.0L422.16 365.0L422.61 377.0L423.03 389.0L423.42 401.0L423.78 413.0L424.12 425.0L424.44 437.0L424.73 449.0L424.99 461.0L425.22 473.0L425.43 485.0L425.61 497.0L425.77 509.0L425.90 521.0L426.00 533.0L426.08 545.0L426.13 557.0L426.16 569.0L426.16 581.0L426.13 593.0L426.07 605.0L425.99 617.0L425.88 629.0L425.74 641.0L425.57 653.0L425.37 665.0L425.15 677.0L424.90 689.0L424.63 701.0L424.32 713.0L423.99 725.0L423.63 737.0L423.24 749.0L422.83 761.0L422.39 773.0L421.92 785.0L421.42 797.0L420.90 808.8" stroke-width="2.00" stroke-dasharray="1 1.012" stroke-dashoffset="0.03"/>
<path d="M416.79 113.0L417.78 125.0L418.74 137.0L419.67 149.0L420.58 161.0L421.46 173.0L422.31 185.0L423.14 197.0L423.94 209.0L424.72 221.0L425.47 233.0L426.20 245.0L426.90 257.0L427.57 269.0L428.22 281.0L428.84 293.0L429.43 305.0L430.00 317.0L430.54 329.0L431.06 341.0L431.55 353.0L432.01 365.0L432.45 377.0L432.86 389.0L433.25 401.0L433.61 413.0L433.95 425.0L434.25 437.0L434.54 449.0L434.79 461.0L435.02 473.0L435.23 485.0L435.40 497.0L435.56 509.0L435.68 521.0L435.78 533.0L435.86 545.0L435.90 557.0L435.93 569.0L435.92 581.0L435.89 593.0L435.83 605.0L435.74 617.0L435.63 629.0L435.49 641.0L435.32 653.0L435.13 665.0L434.90 677.0L434.65 689.0L434.37 701.0L434.07 713.0L433.74 725.0L433.38 737.0L432.99 749.0L432.58 761.0L432.13 773.0L431.66 785.0L431.17 797.0L430.65 808.8" stroke-width="2.00" stroke-dasharray="1 0.992" stroke-dashoffset="1.08"/>
<path d="M430.62 113.0L431.59 125.0L432.54 137.0L433.46 149.0L434.35 161.0L435.21 173.0L436.06 185.0L436.87 197.0L437.66 209.0L438.42 221.0L439.16 233.0L439.88 245.0L440.56 257.0L441.22 269.0L441.86 281.0L442.47 293.0L443.05 305.0L443.61 317.0L444.14 329.0L444.65 341.0L445.13 353.0L445.58 365.0L446.01 377.0L446.42 389.0L446.80 401.0L447.15 413.0L447.47 425.0L447.78 437.0L448.05 449.0L448.30 461.0L448.52 473.0L448.72 485.0L448.89 497.0L449.04 509.0L449.16 521.0L449.25 533.0L449.32 545.0L449.37 557.0L449.38 569.0L449.38 581.0L449.34 593.0L449.28 605.0L449.19 617.0L449.07 629.0L448.93 641.0L448.76 653.0L448.56 665.0L448.33 677.0L448.08 689.0L447.80 701.0L447.50 713.0L447.17 725.0L446.81 737.0L446.42 749.0L446.01 761.0L445.56 773.0L445.10 785.0L444.60 797.0L444.09 808.8" stroke-width="1.99" stroke-dasharray="1 1.001" stroke-dashoffset="0.15"/>
<path d="M440.15 113.0L441.11 125.0L442.04 137.0L442.95 149.0L443.83 161.0L444.69 173.0L445.52 185.0L446.33 197.0L447.11 209.0L447.86 221.0L448.59 233.0L449.30 245.0L449.98 257.0L450.63 269.0L451.26 281.0L451.86 293.0L452.43 305.0L452.99 317.0L453.51 329.0L454.01 341.0L454.48 353.0L454.93 365.0L455.36 377.0L455.75 389.0L456.13 401.0L456.47 413.0L456.79 425.0L457.09 437.0L457.36 449.0L457.60 461.0L457.82 473.0L458.02 485.0L458.18 497.0L458.33 509.0L458.44 521.0L458.53 533.0L458.60 545.0L458.64 557.0L458.66 569.0L458.64 581.0L458.61 593.0L458.54 605.0L458.45 617.0L458.33 629.0L458.19 641.0L458.01 653.0L457.81 665.0L457.59 677.0L457.34 689.0L457.06 701.0L456.75 713.0L456.42 725.0L456.06 737.0L455.67 749.0L455.26 761.0L454.82 773.0L454.35 785.0L453.86 797.0L453.35 808.8" stroke-width="1.99" stroke-dasharray="1 1.006" stroke-dashoffset="-0.15"/>
<path d="M449.57 113.0L450.52 125.0L451.45 137.0L452.34 149.0L453.22 161.0L454.06 173.0L454.89 185.0L455.68 197.0L456.45 209.0L457.20 221.0L457.92 233.0L458.62 245.0L459.29 257.0L459.93 269.0L460.55 281.0L461.15 293.0L461.72 305.0L462.26 317.0L462.78 329.0L463.27 341.0L463.74 353.0L464.18 365.0L464.60 377.0L464.99 389.0L465.36 401.0L465.70 413.0L466.01 425.0L466.30 437.0L466.57 449.0L466.81 461.0L467.02 473.0L467.21 485.0L467.38 497.0L467.51 509.0L467.63 521.0L467.72 533.0L467.78 545.0L467.82 557.0L467.83 569.0L467.81 581.0L467.77 593.0L467.71 605.0L467.61 617.0L467.49 629.0L467.35 641.0L467.17 653.0L466.97 665.0L466.74 677.0L466.49 689.0L466.21 701.0L465.91 713.0L465.57 725.0L465.21 737.0L464.83 749.0L464.41 761.0L463.97 773.0L463.51 785.0L463.02 797.0L462.51 808.8" stroke-width="1.98" stroke-dasharray="1 1.000" stroke-dashoffset="-0.03"/>
<path d="M458.89 113.0L459.83 125.0L460.75 137.0L461.63 149.0L462.50 161.0L463.33 173.0L464.15 185.0L464.94 197.0L465.70 209.0L466.44 221.0L467.15 233.0L467.84 245.0L468.50 257.0L469.13 269.0L469.75 281.0L470.33 293.0L470.90 305.0L471.43 317.0L471.94 329.0L472.43 341.0L472.89 353.0L473.33 365.0L473.74 377.0L474.12 389.0L474.49 401.0L474.82 413.0L475.13 425.0L475.42 437.0L475.68 449.0L475.91 461.0L476.12 473.0L476.31 485.0L476.47 497.0L476.60 509.0L476.71 521.0L476.80 533.0L476.86 545.0L476.89 557.0L476.90 569.0L476.88 581.0L476.84 593.0L476.77 605.0L476.68 617.0L476.55 629.0L476.41 641.0L476.23 653.0L476.03 665.0L475.80 677.0L475.55 689.0L475.27 701.0L474.96 713.0L474.63 725.0L474.27 737.0L473.88 749.0L473.47 761.0L473.03 773.0L472.57 785.0L472.07 797.0L471.57 808.8" stroke-width="1.98" stroke-dasharray="1 1.018" stroke-dashoffset="1.12"/>
<path d="M468.01 113.0L468.94 125.0L469.84 137.0L470.72 149.0L471.57 161.0L472.40 173.0L473.20 185.0L473.98 197.0L474.74 209.0L475.47 221.0L476.17 233.0L476.85 245.0L477.50 257.0L478.13 269.0L478.74 281.0L479.32 293.0L479.87 305.0L480.40 317.0L480.91 329.0L481.39 341.0L481.84 353.0L482.27 365.0L482.68 377.0L483.06 389.0L483.41 401.0L483.74 413.0L484.05 425.0L484.33 437.0L484.59 449.0L484.82 461.0L485.02 473.0L485.20 485.0L485.36 497.0L485.49 509.0L485.60 521.0L485.68 533.0L485.74 545.0L485.77 557.0L485.77 569.0L485.76 581.0L485.71 593.0L485.64 605.0L485.54 617.0L485.42 629.0L485.27 641.0L485.09 653.0L484.89 665.0L484.66 677.0L484.41 689.0L484.12 701.0L483.82 713.0L483.48 725.0L483.12 737.0L482.74 749.0L482.33 761.0L481.89 773.0L481.43 785.0L480.94 797.0L480.43 808.8" stroke-width="1.98" stroke-dasharray="1 1.015" stroke-dashoffset="1.00"/>
<path d="M481.52 113.0L482.44 125.0L483.32 137.0L484.19 149.0L485.03 161.0L485.84 173.0L486.63 185.0L487.40 197.0L488.14 209.0L488.86 221.0L489.55 233.0L490.22 245.0L490.86 257.0L491.48 269.0L492.07 281.0L492.64 293.0L493.19 305.0L493.71 317.0L494.20 329.0L494.67 341.0L495.12 353.0L495.54 365.0L495.94 377.0L496.31 389.0L496.66 401.0L496.98 413.0L497.28 425.0L497.55 437.0L497.80 449.0L498.02 461.0L498.22 473.0L498.40 485.0L498.55 497.0L498.68 509.0L498.78 521.0L498.85 533.0L498.91 545.0L498.93 557.0L498.94 569.0L498.91 581.0L498.86 593.0L498.79 605.0L498.69 617.0L498.56 629.0L498.41 641.0L498.23 653.0L498.03 665.0L497.80 677.0L497.54 689.0L497.26 701.0L496.96 713.0L496.62 725.0L496.26 737.0L495.88 749.0L495.47 761.0L495.03 773.0L494.57 785.0L494.08 797.0L493.58 808.8" stroke-width="1.97" stroke-dasharray="1 1.018" stroke-dashoffset="-0.01"/>
<path d="M490.43 113.0L491.33 125.0L492.21 137.0L493.07 149.0L493.90 161.0L494.70 173.0L495.49 185.0L496.24 197.0L496.98 209.0L497.68 221.0L498.37 233.0L499.03 245.0L499.66 257.0L500.27 269.0L500.86 281.0L501.42 293.0L501.96 305.0L502.47 317.0L502.96 329.0L503.43 341.0L503.87 353.0L504.28 365.0L504.67 377.0L505.04 389.0L505.38 401.0L505.70 413.0L505.99 425.0L506.26 437.0L506.51 449.0L506.73 461.0L506.92 473.0L507.10 485.0L507.24 497.0L507.37 509.0L507.46 521.0L507.54 533.0L507.59 545.0L507.61 557.0L507.61 569.0L507.59 581.0L507.53 593.0L507.46 605.0L507.36 617.0L507.23 629.0L507.07 641.0L506.90 653.0L506.69 665.0L506.46 677.0L506.20 689.0L505.92 701.0L505.62 713.0L505.28 725.0L504.92 737.0L504.54 749.0L504.13 761.0L503.69 773.0L503.23 785.0L502.75 797.0L502.24 808.8" stroke-width="1.97" stroke-dasharray="1 1.019" stroke-dashoffset="0.06"/>
<path d="M498.72 113.0L499.61 125.0L500.48 137.0L501.33 149.0L502.15 161.0L502.95 173.0L503.72 185.0L504.47 197.0L505.20 209.0L505.90 221.0L506.58 233.0L507.23 245.0L507.86 257.0L508.46 269.0L509.04 281.0L509.60 293.0L510.13 305.0L510.64 317.0L511.12 329.0L511.58 341.0L512.01 353.0L512.42 365.0L512.81 377.0L513.17 389.0L513.51 401.0L513.82 413.0L514.11 425.0L514.38 437.0L514.62 449.0L514.83 461.0L515.02 473.0L515.19 485.0L515.34 497.0L515.46 509.0L515.55 521.0L515.62 533.0L515.67 545.0L515.69 557.0L515.69 569.0L515.66 581.0L515.61 593.0L515.53 605.0L515.43 617.0L515.30 629.0L515.14 641.0L514.96 653.0L514.76 665.0L514.52 677.0L514.27 689.0L513.99 701.0L513.68 713.0L513.35 725.0L512.99 737.0L512.60 749.0L512.19 761.0L511.76 773.0L511.30 785.0L510.81 797.0L510.31 808.8" stroke-width="1.96" stroke-dasharray="1 0.995" stroke-dashoffset="0.15"/>
<path d="M507.01 113.0L507.89 125.0L508.76 137.0L509.59 149.0L510.41 161.0L511.20 173.0L511.96 185.0L512.71 197.0L513.42 209.0L514.12 221.0L514.79 233.0L515.43 245.0L516.05 257.0L516.65 269.0L517.22 281.0L517.77 293.0L518.30 305.0L518.80 317.0L519.28 329.0L519.73 341.0L520.16 353.0L520.56 365.0L520.94 377.0L521.30 389.0L521.63 401.0L521.94 413.0L522.23 425.0L522.49 437.0L522.72 449.0L522.94 461.0L523.12 473.0L523.29 485.0L523.43 497.0L523.55 509.0L523.64 521.0L523.71 533.0L523.75 545.0L523.77 557.0L523.77 569.0L523.74 581.0L523.68 593.0L523.60 605.0L523.50 617.0L523.36 629.0L523.21 641.0L523.03 653.0L522.82 665.0L522.59 677.0L522.33 689.0L522.05 701.0L521.74 713.0L521.41 725.0L521.05 737.0L520.67 749.0L520.26 761.0L519.83 773.0L519.37 785.0L518.88 797.0L518.38 808.8" stroke-width="1.96" stroke-dasharray="1 0.992" stroke-dashoffset="0.85"/>
<path d="M515.10 113.0L515.98 125.0L516.83 137.0L517.66 149.0L518.46 161.0L519.25 173.0L520.00 185.0L520.74 197.0L521.45 209.0L522.13 221.0L522.79 233.0L523.43 245.0L524.05 257.0L524.64 269.0L525.20 281.0L525.75 293.0L526.27 305.0L526.76 317.0L527.23 329.0L527.68 341.0L528.10 353.0L528.50 365.0L528.88 377.0L529.23 389.0L529.56 401.0L529.86 413.0L530.14 425.0L530.40 437.0L530.63 449.0L530.84 461.0L531.03 473.0L531.19 485.0L531.32 497.0L531.44 509.0L531.53 521.0L531.59 533.0L531.63 545.0L531.65 557.0L531.64 569.0L531.61 581.0L531.56 593.0L531.48 605.0L531.37 617.0L531.24 629.0L531.08 641.0L530.90 653.0L530.69 665.0L530.46 677.0L530.20 689.0L529.92 701.0L529.61 713.0L529.28 725.0L528.93 737.0L528.54 749.0L528.14 761.0L527.70 773.0L527.25 785.0L526.76 797.0L526.27 808.8" stroke-width="1.96" stroke-dasharray="1 0.999" stroke-dashoffset="-0.04"/>
<path d="M534.19 113.0L535.03 125.0L535.86 137.0L536.66 149.0L537.43 161.0L538.19 173.0L538.92 185.0L539.62 197.0L540.31 209.0L540.97 221.0L541.61 233.0L542.22 245.0L542.81 257.0L543.38 269.0L543.93 281.0L544.45 293.0L544.95 305.0L545.43 317.0L545.88 329.0L546.31 341.0L546.72 353.0L547.10 365.0L547.46 377.0L547.80 389.0L548.12 401.0L548.41 413.0L548.68 425.0L548.93 437.0L549.15 449.0L549.35 461.0L549.53 473.0L549.68 485.0L549.81 497.0L549.92 509.0L550.00 521.0L550.07 533.0L550.10 545.0L550.12 557.0L550.11 569.0L550.08 581.0L550.03 593.0L549.95 605.0L549.84 617.0L549.71 629.0L549.56 641.0L549.38 653.0L549.18 665.0L548.96 677.0L548.71 689.0L548.43 701.0L548.14 713.0L547.81 725.0L547.47 737.0L547.10 749.0L546.70 761.0L546.28 773.0L545.84 785.0L545.37 797.0L544.89 808.8" stroke-width="1.95" stroke-dasharray="1 0.987" stroke-dashoffset="-0.04"/>
<path d="M541.82 113.0L542.66 125.0L543.47 137.0L544.25 149.0L545.02 161.0L545.76 173.0L546.48 185.0L547.18 197.0L547.85 209.0L548.50 221.0L549.13 233.0L549.73 245.0L550.32 257.0L550.88 269.0L551.42 281.0L551.93 293.0L552.42 305.0L552.89 317.0L553.34 329.0L553.76 341.0L554.16 353.0L554.54 365.0L554.90 377.0L555.23 389.0L555.54 401.0L555.83 413.0L556.09 425.0L556.34 437.0L556.56 449.0L556.75 461.0L556.93 473.0L557.08 485.0L557.21 497.0L557.31 509.0L557.40 521.0L557.46 533.0L557.49 545.0L557.51 557.0L557.50 569.0L557.47 581.0L557.41 593.0L557.33 605.0L557.23 617.0L557.10 629.0L556.95 641.0L556.78 653.0L556.58 665.0L556.36 677.0L556.11 689.0L555.84 701.0L555.54 713.0L555.23 725.0L554.88 737.0L554.52 749.0L554.13 761.0L553.72 773.0L553.28 785.0L552.82 797.0L552.34 808.8" stroke-width="1.95" stroke-dasharray="1 1.013" stroke-dashoffset="0.91"/>
<path d="M549.36 113.0L550.18 125.0L550.97 137.0L551.75 149.0L552.50 161.0L553.23 173.0L553.94 185.0L554.63 197.0L555.29 209.0L555.93 221.0L556.55 233.0L557.15 245.0L557.72 257.0L558.27 269.0L558.80 281.0L559.31 293.0L559.79 305.0L560.26 317.0L560.70 329.0L561.11 341.0L561.51 353.0L561.88 365.0L562.23 377.0L562.56 389.0L562.86 401.0L563.15 413.0L563.41 425.0L563.65 437.0L563.86 449.0L564.06 461.0L564.23 473.0L564.38 485.0L564.50 497.0L564.61 509.0L564.69 521.0L564.75 533.0L564.78 545.0L564.80 557.0L564.79 569.0L564.76 581.0L564.70 593.0L564.62 605.0L564.52 617.0L564.39 629.0L564.24 641.0L564.07 653.0L563.87 665.0L563.65 677.0L563.41 689.0L563.14 701.0L562.85 713.0L562.54 725.0L562.20 737.0L561.84 749.0L561.46 761.0L561.05 773.0L560.62 785.0L560.16 797.0L559.69 808.8" stroke-width="1.94" stroke-dasharray="1 1.004" stroke-dashoffset="0.18"/>
<path d="M556.58 113.0L557.38 125.0L558.17 137.0L558.94 149.0L559.68 161.0L560.40 173.0L561.10 185.0L561.77 197.0L562.43 209.0L563.06 221.0L563.67 233.0L564.26 245.0L564.82 257.0L565.36 269.0L565.89 281.0L566.39 293.0L566.86 305.0L567.32 317.0L567.75 329.0L568.16 341.0L568.55 353.0L568.92 365.0L569.26 377.0L569.59 389.0L569.89 401.0L570.17 413.0L570.42 425.0L570.66 437.0L570.87 449.0L571.06 461.0L571.23 473.0L571.37 485.0L571.50 497.0L571.60 509.0L571.68 521.0L571.74 533.0L571.77 545.0L571.79 557.0L571.78 569.0L571.75 581.0L571.69 593.0L571.61 605.0L571.51 617.0L571.39 629.0L571.24 641.0L571.07 653.0L570.87 665.0L570.65 677.0L570.41 689.0L570.15 701.0L569.86 713.0L569.55 725.0L569.22 737.0L568.86 749.0L568.48 761.0L568.08 773.0L567.65 785.0L567.20 797.0L566.74 808.8" stroke-width="1.94" stroke-dasharray="1 0.998" stroke-dashoffset="-0.20"/>
<path d="M563.69 113.0L564.49 125.0L565.27 137.0L566.02 149.0L566.75 161.0L567.46 173.0L568.15 185.0L568.81 197.0L569.46 209.0L570.08 221.0L570.68 233.0L571.26 245.0L571.82 257.0L572.35 269.0L572.87 281.0L573.36 293.0L573.83 305.0L574.28 317.0L574.71 329.0L575.11 341.0L575.49 353.0L575.85 365.0L576.19 377.0L576.51 389.0L576.81 401.0L577.08 413.0L577.33 425.0L577.57 437.0L577.77 449.0L577.96 461.0L578.13 473.0L578.27 485.0L578.39 497.0L578.49 509.0L578.57 521.0L578.63 533.0L578.66 545.0L578.68 557.0L578.67 569.0L578.63 581.0L578.58 593.0L578.50 605.0L578.40 617.0L578.28 629.0L578.13 641.0L577.96 653.0L577.77 665.0L577.55 677.0L577.32 689.0L577.06 701.0L576.77 713.0L576.47 725.0L576.14 737.0L575.78 749.0L575.41 761.0L575.01 773.0L574.59 785.0L574.15 797.0L573.69 808.8" stroke-width="1.94" stroke-dasharray="1 0.997" stroke-dashoffset="0.86"/>
<path d="M580.92 113.0L581.69 125.0L582.44 137.0L583.16 149.0L583.87 161.0L584.55 173.0L585.22 185.0L585.86 197.0L586.48 209.0L587.08 221.0L587.66 233.0L588.22 245.0L588.75 257.0L589.27 269.0L589.77 281.0L590.24 293.0L590.69 305.0L591.12 317.0L591.54 329.0L591.93 341.0L592.29 353.0L592.64 365.0L592.97 377.0L593.28 389.0L593.56 401.0L593.82 413.0L594.07 425.0L594.29 437.0L594.49 449.0L594.67 461.0L594.83 473.0L594.97 485.0L595.08 497.0L595.18 509.0L595.25 521.0L595.31 533.0L595.34 545.0L595.35 557.0L595.34 569.0L595.31 581.0L595.25 593.0L595.18 605.0L595.08 617.0L594.96 629.0L594.81 641.0L594.65 653.0L594.46 665.0L594.25 677.0L594.02 689.0L593.77 701.0L593.50 713.0L593.20 725.0L592.88 737.0L592.54 749.0L592.17 761.0L591.79 773.0L591.38 785.0L590.95 797.0L590.51 808.8" stroke-width="1.93" stroke-dasharray="1 1.006" stroke-dashoffset="1.08"/>
<path d="M587.21 113.0L587.97 125.0L588.71 137.0L589.42 149.0L590.12 161.0L590.79 173.0L591.45 185.0L592.08 197.0L592.70 209.0L593.29 221.0L593.86 233.0L594.41 245.0L594.94 257.0L595.45 269.0L595.94 281.0L596.41 293.0L596.85 305.0L597.28 317.0L597.68 329.0L598.07 341.0L598.43 353.0L598.77 365.0L599.10 377.0L599.40 389.0L599.68 401.0L599.94 413.0L600.18 425.0L600.40 437.0L600.60 449.0L600.77 461.0L600.93 473.0L601.06 485.0L601.18 497.0L601.27 509.0L601.35 521.0L601.40 533.0L601.43 545.0L601.44 557.0L601.43 569.0L601.40 581.0L601.34 593.0L601.27 605.0L601.17 617.0L601.05 629.0L600.91 641.0L600.75 653.0L600.56 665.0L600.36 677.0L600.13 689.0L599.88 701.0L599.60 713.0L599.31 725.0L598.99 737.0L598.66 749.0L598.30 761.0L597.92 773.0L597.51 785.0L597.09 797.0L596.65 808.8" stroke-width="1.93" stroke-dasharray="1 1.015" stroke-dashoffset="0.98"/>
<path d="M593.50 113.0L594.25 125.0L594.98 137.0L595.68 149.0L596.37 161.0L597.04 173.0L597.68 185.0L598.31 197.0L598.91 209.0L599.50 221.0L600.06 233.0L600.60 245.0L601.13 257.0L601.63 269.0L602.11 281.0L602.57 293.0L603.01 305.0L603.43 317.0L603.83 329.0L604.21 341.0L604.57 353.0L604.91 365.0L605.22 377.0L605.52 389.0L605.80 401.0L606.05 413.0L606.29 425.0L606.51 437.0L606.70 449.0L606.87 461.0L607.03 473.0L607.16 485.0L607.27 497.0L607.37 509.0L607.44 521.0L607.49 533.0L607.52 545.0L607.53 557.0L607.52 569.0L607.49 581.0L607.43 593.0L607.36 605.0L607.26 617.0L607.14 629.0L607.00 641.0L606.84 653.0L606.66 665.0L606.46 677.0L606.23 689.0L605.98 701.0L605.71 713.0L605.42 725.0L605.11 737.0L604.78 749.0L604.42 761.0L604.05 773.0L603.65 785.0L603.23 797.0L602.80 808.8" stroke-width="1.92" stroke-dasharray="1 1.000" stroke-dashoffset="-0.04"/>
<path d="M600.41 113.0L601.15 125.0L601.86 137.0L602.56 149.0L603.24 161.0L603.89 173.0L604.53 185.0L605.14 197.0L605.74 209.0L606.31 221.0L606.87 233.0L607.40 245.0L607.92 257.0L608.41 269.0L608.89 281.0L609.34 293.0L609.78 305.0L610.19 317.0L610.58 329.0L610.96 341.0L611.31 353.0L611.64 365.0L611.95 377.0L612.25 389.0L612.52 401.0L612.77 413.0L613.00 425.0L613.21 437.0L613.41 449.0L613.58 461.0L613.73 473.0L613.86 485.0L613.97 497.0L614.06 509.0L614.13 521.0L614.18 533.0L614.21 545.0L614.22 557.0L614.21 569.0L614.18 581.0L614.12 593.0L614.05 605.0L613.95 617.0L613.84 629.0L613.70 641.0L613.54 653.0L613.36 665.0L613.16 677.0L612.93 689.0L612.69 701.0L612.42 713.0L612.14 725.0L611.83 737.0L611.50 749.0L611.15 761.0L610.78 773.0L610.39 785.0L609.97 797.0L609.54 808.8" stroke-width="1.92" stroke-dasharray="1 0.989" stroke-dashoffset="0.19"/>
<path d="M606.60 113.0L607.32 125.0L608.03 137.0L608.72 149.0L609.38 161.0L610.03 173.0L610.66 185.0L611.27 197.0L611.85 209.0L612.42 221.0L612.97 233.0L613.50 245.0L614.00 257.0L614.49 269.0L614.96 281.0L615.41 293.0L615.83 305.0L616.24 317.0L616.63 329.0L617.00 341.0L617.34 353.0L617.67 365.0L617.98 377.0L618.27 389.0L618.54 401.0L618.79 413.0L619.01 425.0L619.22 437.0L619.41 449.0L619.58 461.0L619.73 473.0L619.86 485.0L619.97 497.0L620.06 509.0L620.12 521.0L620.17 533.0L620.20 545.0L620.21 557.0L620.20 569.0L620.17 581.0L620.12 593.0L620.04 605.0L619.95 617.0L619.83 629.0L619.69 641.0L619.54 653.0L619.36 665.0L619.16 677.0L618.94 689.0L618.70 701.0L618.43 713.0L618.15 725.0L617.85 737.0L617.52 749.0L617.17 761.0L616.81 773.0L616.42 785.0L616.01 797.0L615.59 808.8" stroke-width="1.92" stroke-dasharray="1 1.000" stroke-dashoffset="0.84"/>
<path d="M612.58 113.0L613.30 125.0L613.99 137.0L614.67 149.0L615.33 161.0L615.97 173.0L616.58 185.0L617.18 197.0L617.76 209.0L618.32 221.0L618.86 233.0L619.38 245.0L619.88 257.0L620.36 269.0L620.83 281.0L621.27 293.0L621.69 305.0L622.09 317.0L622.47 329.0L622.84 341.0L623.18 353.0L623.50 365.0L623.81 377.0L624.09 389.0L624.36 401.0L624.60 413.0L624.83 425.0L625.03 437.0L625.22 449.0L625.38 461.0L625.53 473.0L625.66 485.0L625.76 497.0L625.85 509.0L625.92 521.0L625.97 533.0L625.99 545.0L626.00 557.0L625.99 569.0L625.96 581.0L625.91 593.0L625.83 605.0L625.74 617.0L625.62 629.0L625.49 641.0L625.33 653.0L625.16 665.0L624.96 677.0L624.74 689.0L624.50 701.0L624.24 713.0L623.96 725.0L623.66 737.0L623.34 749.0L623.00 761.0L622.64 773.0L622.25 785.0L621.85 797.0L621.43 808.8" stroke-width="1.92" stroke-dasharray="1 0.984" stroke-dashoffset="0.05"/>
<path d="M624.44 113.0L625.13 125.0L625.81 137.0L626.47 149.0L627.11 161.0L627.73 173.0L628.33 185.0L628.92 197.0L629.48 209.0L630.02 221.0L630.55 233.0L631.06 245.0L631.54 257.0L632.01 269.0L632.46 281.0L632.89 293.0L633.30 305.0L633.69 317.0L634.06 329.0L634.41 341.0L634.75 353.0L635.06 365.0L635.36 377.0L635.63 389.0L635.89 401.0L636.13 413.0L636.35 425.0L636.55 437.0L636.73 449.0L636.89 461.0L637.03 473.0L637.15 485.0L637.26 497.0L637.34 509.0L637.41 521.0L637.45 533.0L637.48 545.0L637.49 557.0L637.48 569.0L637.44 581.0L637.39 593.0L637.32 605.0L637.23 617.0L637.11 629.0L636.98 641.0L636.83 653.0L636.66 665.0L636.46 677.0L636.25 689.0L636.02 701.0L635.76 713.0L635.49 725.0L635.20 737.0L634.88 749.0L634.55 761.0L634.19 773.0L633.82 785.0L633.43 797.0L633.02 808.8" stroke-width="1.91" stroke-dasharray="1 1.015" stroke-dashoffset="1.05"/>
<path d="M630.62 113.0L631.31 125.0L631.98 137.0L632.63 149.0L633.26 161.0L633.87 173.0L634.46 185.0L635.04 197.0L635.59 209.0L636.13 221.0L636.65 233.0L637.15 245.0L637.63 257.0L638.09 269.0L638.53 281.0L638.95 293.0L639.36 305.0L639.74 317.0L640.11 329.0L640.46 341.0L640.78 353.0L641.09 365.0L641.38 377.0L641.66 389.0L641.91 401.0L642.14 413.0L642.36 425.0L642.55 437.0L642.73 449.0L642.89 461.0L643.03 473.0L643.15 485.0L643.25 497.0L643.34 509.0L643.40 521.0L643.44 533.0L643.47 545.0L643.48 557.0L643.47 569.0L643.43 581.0L643.38 593.0L643.31 605.0L643.22 617.0L643.11 629.0L642.98 641.0L642.83 653.0L642.65 665.0L642.46 677.0L642.25 689.0L642.02 701.0L641.77 713.0L641.50 725.0L641.21 737.0L640.90 749.0L640.57 761.0L640.22 773.0L639.85 785.0L639.47 797.0L639.06 808.8" stroke-width="1.91" stroke-dasharray="1 0.999" stroke-dashoffset="-0.15"/>
<path d="M636.81 113.0L637.48 125.0L638.14 137.0L638.78 149.0L639.41 161.0L640.01 173.0L640.59 185.0L641.16 197.0L641.71 209.0L642.23 221.0L642.74 233.0L643.24 245.0L643.71 257.0L644.16 269.0L644.60 281.0L645.01 293.0L645.41 305.0L645.79 317.0L646.15 329.0L646.50 341.0L646.82 353.0L647.12 365.0L647.41 377.0L647.68 389.0L647.93 401.0L648.16 413.0L648.37 425.0L648.56 437.0L648.74 449.0L648.89 461.0L649.03 473.0L649.15 485.0L649.25 497.0L649.33 509.0L649.39 521.0L649.44 533.0L649.46 545.0L649.47 557.0L649.46 569.0L649.43 581.0L649.37 593.0L649.30 605.0L649.21 617.0L649.10 629.0L648.97 641.0L648.82 653.0L648.65 665.0L648.47 677.0L648.26 689.0L648.03 701.0L647.78 713.0L647.52 725.0L647.23 737.0L646.92 749.0L646.60 761.0L646.25 773.0L645.89 785.0L645.51 797.0L645.11 808.8" stroke-width="1.91" stroke-dasharray="1 0.997" stroke-dashoffset="-0.17"/>
<path d="M642.06 113.0L642.73 125.0L643.38 137.0L644.02 149.0L644.63 161.0L645.23 173.0L645.80 185.0L646.36 197.0L646.90 209.0L647.42 221.0L647.93 233.0L648.41 245.0L648.88 257.0L649.33 269.0L649.76 281.0L650.17 293.0L650.56 305.0L650.94 317.0L651.29 329.0L651.63 341.0L651.95 353.0L652.25 365.0L652.53 377.0L652.80 389.0L653.04 401.0L653.27 413.0L653.48 425.0L653.67 437.0L653.84 449.0L654.00 461.0L654.13 473.0L654.25 485.0L654.35 497.0L654.43 509.0L654.49 521.0L654.53 533.0L654.56 545.0L654.56 557.0L654.55 569.0L654.52 581.0L654.47 593.0L654.40 605.0L654.31 617.0L654.20 629.0L654.07 641.0L653.92 653.0L653.75 665.0L653.57 677.0L653.36 689.0L653.14 701.0L652.89 713.0L652.63 725.0L652.35 737.0L652.04 749.0L651.72 761.0L651.38 773.0L651.02 785.0L650.64 797.0L650.25 808.8" stroke-width="1.90" stroke-dasharray="1 1.006" stroke-dashoffset="0.13"/>
<path d="M423.48 113.0L424.46 125.0L425.41 137.0L426.34 149.0L427.24 161.0L428.11 173.0L428.96 185.0L429.78 197.0L430.58 209.0L431.35 221.0L432.10 233.0L432.82 245.0L433.51 257.0L434.18 269.0L434.82 281.0L435.43 293.0L436.02 305.0L436.58 317.0L437.12 329.0L437.63 341.0L438.12 353.0L438.58 365.0L439.01 377.0L439.42 389.0L439.80 401.0L440.16 413.0L440.49 425.0L440.80 437.0L441.07 449.0L441.33 461.0L441.55 473.0L441.76 485.0L441.93 497.0L442.08 509.0L442.20 521.0L442.30 533.0L442.37 545.0L442.42 557.0L442.44 569.0L442.43 581.0L442.40 593.0L442.34 605.0L442.25 617.0L442.13 629.0L441.99 641.0L441.82 653.0L441.63 665.0L441.40 677.0L441.15 689.0L440.87 701.0L440.57 713.0L440.23 725.0L439.87 737.0L439.49 749.0L439.07 761.0L438.63 773.0L438.16 785.0L437.67 797.0L437.15 808.8" stroke-width="1.99" stroke-dasharray="1 1.005" stroke-dashoffset="1.38"/>
<path d="M526.47 113.0L527.33 125.0L528.16 137.0L528.97 149.0L529.76 161.0L530.53 173.0L531.27 185.0L531.98 197.0L532.68 209.0L533.35 221.0L534.00 233.0L534.62 245.0L535.22 257.0L535.80 269.0L536.35 281.0L536.89 293.0L537.39 305.0L537.88 317.0L538.34 329.0L538.77 341.0L539.19 353.0L539.58 365.0L539.95 377.0L540.29 389.0L540.61 401.0L540.91 413.0L541.18 425.0L541.43 437.0L541.66 449.0L541.86 461.0L542.04 473.0L542.20 485.0L542.33 497.0L542.44 509.0L542.53 521.0L542.59 533.0L542.63 545.0L542.65 557.0L542.64 569.0L542.61 581.0L542.56 593.0L542.47 605.0L542.37 617.0L542.24 629.0L542.09 641.0L541.91 653.0L541.70 665.0L541.47 677.0L541.22 689.0L540.95 701.0L540.64 713.0L540.32 725.0L539.97 737.0L539.59 749.0L539.19 761.0L538.77 773.0L538.32 785.0L537.85 797.0L537.36 808.8" stroke-width="1.95" stroke-dasharray="1 1.001" stroke-dashoffset="1.29"/>
<path d="M573.92 113.0L574.70 125.0L575.46 137.0L576.19 149.0L576.91 161.0L577.60 173.0L578.28 185.0L578.93 197.0L579.56 209.0L580.17 221.0L580.76 233.0L581.32 245.0L581.87 257.0L582.39 269.0L582.90 281.0L583.38 293.0L583.84 305.0L584.28 317.0L584.69 329.0L585.09 341.0L585.46 353.0L585.82 365.0L586.15 377.0L586.46 389.0L586.75 401.0L587.02 413.0L587.26 425.0L587.49 437.0L587.69 449.0L587.88 461.0L588.04 473.0L588.18 485.0L588.30 497.0L588.39 509.0L588.47 521.0L588.53 533.0L588.56 545.0L588.57 557.0L588.56 569.0L588.53 581.0L588.47 593.0L588.40 605.0L588.30 617.0L588.18 629.0L588.03 641.0L587.87 653.0L587.68 665.0L587.46 677.0L587.23 689.0L586.97 701.0L586.70 713.0L586.40 725.0L586.07 737.0L585.73 749.0L585.36 761.0L584.97 773.0L584.55 785.0L584.12 797.0L583.67 808.8" stroke-width="1.93" stroke-dasharray="1 1.016" stroke-dashoffset="1.82"/>
<path d="M644.64 113.0L645.31 125.0L645.95 137.0L646.58 149.0L647.19 161.0L647.78 173.0L648.36 185.0L648.91 197.0L649.45 209.0L649.97 221.0L650.47 233.0L650.95 245.0L651.41 257.0L651.86 269.0L652.29 281.0L652.70 293.0L653.09 305.0L653.46 317.0L653.81 329.0L654.15 341.0L654.47 353.0L654.76 365.0L655.04 377.0L655.31 389.0L655.55 401.0L655.78 413.0L655.98 425.0L656.17 437.0L656.34 449.0L656.50 461.0L656.63 473.0L656.75 485.0L656.85 497.0L656.93 509.0L656.99 521.0L657.03 533.0L657.05 545.0L657.06 557.0L657.05 569.0L657.02 581.0L656.96 593.0L656.89 605.0L656.81 617.0L656.70 629.0L656.57 641.0L656.42 653.0L656.26 665.0L656.07 677.0L655.87 689.0L655.64 701.0L655.40 713.0L655.14 725.0L654.85 737.0L654.55 749.0L654.23 761.0L653.89 773.0L653.54 785.0L653.16 797.0L652.77 808.8" stroke-width="1.90" stroke-dasharray="1 1.018" stroke-dashoffset="1.01"/>
</g>
<rect x="305.0" y="113.0" width="371.0" height="695.8" fill="url(#lBR)"/><rect x="305.0" y="113.0" width="371.0" height="695.8" fill="url(#lTR)"/>
<g shape-rendering="crispEdges" fill="none" stroke="#ececec">
<path d="M289.74 113.0L290.87 125.0L291.97 137.0L293.04 149.0L294.09 161.0L295.10 173.0L296.09 185.0L297.05 197.0L297.97 209.0L298.87 221.0L299.75 233.0L300.59 245.0L301.40 257.0L302.19 269.0L302.94 281.0L303.67 293.0L304.37 305.0L305.04 317.0L305.68 329.0L306.29 341.0L306.87 353.0L307.43 365.0L307.95 377.0L308.45 389.0L308.92 401.0L309.36 413.0L309.77 425.0L310.15 437.0L310.50 449.0L310.83 461.0L311.12 473.0L311.39 485.0L311.63 497.0L311.83 509.0L312.01 521.0L312.17 533.0L312.29 545.0L312.38 557.0L312.45 569.0L312.48 581.0L312.49 593.0L312.47 605.0L312.41 617.0L312.33 629.0L312.22 641.0L312.07 653.0L311.90 665.0L311.70 677.0L311.46 689.0L311.20 701.0L310.90 713.0L310.58 725.0L310.22 737.0L309.84 749.0L309.42 761.0L308.97 773.0L308.50 785.0L307.99 797.0L307.46 808.8" stroke-width="2.05" stroke-dasharray="1 0.998" stroke-dashoffset="-0.04"/>
<path d="M303.26 113.0L304.37 125.0L305.46 137.0L306.52 149.0L307.55 161.0L308.55 173.0L309.52 185.0L310.47 197.0L311.38 209.0L312.27 221.0L313.13 233.0L313.96 245.0L314.76 257.0L315.54 269.0L316.28 281.0L317.00 293.0L317.68 305.0L318.34 317.0L318.97 329.0L319.58 341.0L320.15 353.0L320.70 365.0L321.21 377.0L321.70 389.0L322.16 401.0L322.59 413.0L322.99 425.0L323.37 437.0L323.71 449.0L324.03 461.0L324.32 473.0L324.58 485.0L324.81 497.0L325.01 509.0L325.19 521.0L325.33 533.0L325.45 545.0L325.54 557.0L325.60 569.0L325.63 581.0L325.63 593.0L325.61 605.0L325.55 617.0L325.46 629.0L325.35 641.0L325.20 653.0L325.02 665.0L324.82 677.0L324.58 689.0L324.31 701.0L324.02 713.0L323.69 725.0L323.34 737.0L322.95 749.0L322.53 761.0L322.09 773.0L321.61 785.0L321.11 797.0L320.58 808.8" stroke-width="2.04" stroke-dasharray="1 0.991" stroke-dashoffset="0.82"/>
<path d="M315.47 113.0L316.57 125.0L317.64 137.0L318.69 149.0L319.70 161.0L320.69 173.0L321.65 185.0L322.58 197.0L323.49 209.0L324.36 221.0L325.21 233.0L326.03 245.0L326.82 257.0L327.58 269.0L328.31 281.0L329.02 293.0L329.70 305.0L330.35 317.0L330.97 329.0L331.56 341.0L332.12 353.0L332.66 365.0L333.17 377.0L333.65 389.0L334.10 401.0L334.52 413.0L334.92 425.0L335.28 437.0L335.62 449.0L335.93 461.0L336.21 473.0L336.47 485.0L336.69 497.0L336.89 509.0L337.06 521.0L337.20 533.0L337.31 545.0L337.40 557.0L337.45 569.0L337.48 581.0L337.48 593.0L337.45 605.0L337.39 617.0L337.30 629.0L337.18 641.0L337.03 653.0L336.85 665.0L336.64 677.0L336.40 689.0L336.14 701.0L335.84 713.0L335.51 725.0L335.15 737.0L334.77 749.0L334.35 761.0L333.91 773.0L333.43 785.0L332.92 797.0L332.40 808.8" stroke-width="2.04" stroke-dasharray="1 0.991" stroke-dashoffset="-0.17"/>
<path d="M332.29 113.0L333.37 125.0L334.43 137.0L335.45 149.0L336.45 161.0L337.42 173.0L338.36 185.0L339.28 197.0L340.16 209.0L341.02 221.0L341.85 233.0L342.66 245.0L343.43 257.0L344.18 269.0L344.90 281.0L345.59 293.0L346.25 305.0L346.89 317.0L347.49 329.0L348.07 341.0L348.63 353.0L349.15 365.0L349.65 377.0L350.11 389.0L350.55 401.0L350.97 413.0L351.35 425.0L351.71 437.0L352.04 449.0L352.34 461.0L352.61 473.0L352.85 485.0L353.07 497.0L353.26 509.0L353.42 521.0L353.56 533.0L353.66 545.0L353.74 557.0L353.79 569.0L353.81 581.0L353.80 593.0L353.77 605.0L353.70 617.0L353.61 629.0L353.49 641.0L353.33 653.0L353.15 665.0L352.94 677.0L352.70 689.0L352.43 701.0L352.13 713.0L351.80 725.0L351.44 737.0L351.06 749.0L350.64 761.0L350.20 773.0L349.72 785.0L349.22 797.0L348.69 808.8" stroke-width="2.03" stroke-dasharray="1 0.990" stroke-dashoffset="0.85"/>
<path d="M344.19 113.0L345.26 125.0L346.30 137.0L347.31 149.0L348.29 161.0L349.25 173.0L350.18 185.0L351.08 197.0L351.96 209.0L352.80 221.0L353.62 233.0L354.42 245.0L355.18 257.0L355.92 269.0L356.62 281.0L357.31 293.0L357.96 305.0L358.58 317.0L359.18 329.0L359.75 341.0L360.30 353.0L360.81 365.0L361.30 377.0L361.76 389.0L362.19 401.0L362.60 413.0L362.97 425.0L363.32 437.0L363.65 449.0L363.94 461.0L364.21 473.0L364.45 485.0L364.66 497.0L364.84 509.0L365.00 521.0L365.13 533.0L365.23 545.0L365.30 557.0L365.35 569.0L365.36 581.0L365.35 593.0L365.31 605.0L365.25 617.0L365.15 629.0L365.02 641.0L364.87 653.0L364.68 665.0L364.47 677.0L364.23 689.0L363.96 701.0L363.66 713.0L363.33 725.0L362.97 737.0L362.58 749.0L362.17 761.0L361.72 773.0L361.25 785.0L360.74 797.0L360.22 808.8" stroke-width="2.03" stroke-dasharray="1 1.018" stroke-dashoffset="1.03"/>
<path d="M355.98 113.0L357.03 125.0L358.06 137.0L359.06 149.0L360.03 161.0L360.98 173.0L361.90 185.0L362.79 197.0L363.65 209.0L364.48 221.0L365.29 233.0L366.07 245.0L366.83 257.0L367.55 269.0L368.25 281.0L368.92 293.0L369.56 305.0L370.18 317.0L370.77 329.0L371.33 341.0L371.87 353.0L372.37 365.0L372.85 377.0L373.30 389.0L373.73 401.0L374.13 413.0L374.50 425.0L374.84 437.0L375.15 449.0L375.44 461.0L375.70 473.0L375.94 485.0L376.14 497.0L376.32 509.0L376.47 521.0L376.60 533.0L376.69 545.0L376.76 557.0L376.80 569.0L376.82 581.0L376.80 593.0L376.76 605.0L376.69 617.0L376.59 629.0L376.46 641.0L376.30 653.0L376.12 665.0L375.90 677.0L375.66 689.0L375.39 701.0L375.08 713.0L374.75 725.0L374.40 737.0L374.01 749.0L373.59 761.0L373.15 773.0L372.67 785.0L372.17 797.0L371.65 808.8" stroke-width="2.02" stroke-dasharray="1 0.989" stroke-dashoffset="-0.08"/>
<path d="M367.67 113.0L368.71 125.0L369.72 137.0L370.71 149.0L371.67 161.0L372.60 173.0L373.51 185.0L374.38 197.0L375.24 209.0L376.06 221.0L376.86 233.0L377.63 245.0L378.37 257.0L379.08 269.0L379.77 281.0L380.43 293.0L381.07 305.0L381.68 317.0L382.26 329.0L382.81 341.0L383.33 353.0L383.83 365.0L384.30 377.0L384.75 389.0L385.17 401.0L385.56 413.0L385.92 425.0L386.26 437.0L386.56 449.0L386.85 461.0L387.10 473.0L387.33 485.0L387.53 497.0L387.70 509.0L387.85 521.0L387.97 533.0L388.06 545.0L388.12 557.0L388.16 569.0L388.17 581.0L388.15 593.0L388.11 605.0L388.03 617.0L387.93 629.0L387.80 641.0L387.64 653.0L387.45 665.0L387.24 677.0L386.99 689.0L386.72 701.0L386.41 713.0L386.08 725.0L385.72 737.0L385.34 749.0L384.92 761.0L384.48 773.0L384.00 785.0L383.50 797.0L382.98 808.8" stroke-width="2.02" stroke-dasharray="1 1.006" stroke-dashoffset="1.13"/>
<path d="M382.02 113.0L383.04 125.0L384.04 137.0L385.01 149.0L385.96 161.0L386.87 173.0L387.76 185.0L388.63 197.0L389.46 209.0L390.27 221.0L391.06 233.0L391.81 245.0L392.54 257.0L393.25 269.0L393.92 281.0L394.57 293.0L395.19 305.0L395.79 317.0L396.36 329.0L396.90 341.0L397.42 353.0L397.91 365.0L398.37 377.0L398.80 389.0L399.21 401.0L399.59 413.0L399.95 425.0L400.27 437.0L400.57 449.0L400.85 461.0L401.10 473.0L401.32 485.0L401.51 497.0L401.68 509.0L401.82 521.0L401.93 533.0L402.02 545.0L402.08 557.0L402.11 569.0L402.12 581.0L402.09 593.0L402.04 605.0L401.97 617.0L401.86 629.0L401.73 641.0L401.56 653.0L401.37 665.0L401.15 677.0L400.91 689.0L400.63 701.0L400.33 713.0L400.00 725.0L399.64 737.0L399.25 749.0L398.84 761.0L398.39 773.0L397.92 785.0L397.42 797.0L396.90 808.8" stroke-width="2.01" stroke-dasharray="1 1.006" stroke-dashoffset="-0.05"/>
<path d="M392.88 113.0L393.89 125.0L394.88 137.0L395.84 149.0L396.77 161.0L397.68 173.0L398.56 185.0L399.41 197.0L400.24 209.0L401.04 221.0L401.81 233.0L402.56 245.0L403.28 257.0L403.97 269.0L404.64 281.0L405.28 293.0L405.89 305.0L406.48 317.0L407.04 329.0L407.57 341.0L408.08 353.0L408.56 365.0L409.01 377.0L409.44 389.0L409.84 401.0L410.22 413.0L410.57 425.0L410.89 437.0L411.18 449.0L411.45 461.0L411.69 473.0L411.91 485.0L412.10 497.0L412.26 509.0L412.40 521.0L412.50 533.0L412.59 545.0L412.64 557.0L412.67 569.0L412.68 581.0L412.65 593.0L412.60 605.0L412.52 617.0L412.41 629.0L412.27 641.0L412.11 653.0L411.92 665.0L411.70 677.0L411.45 689.0L411.17 701.0L410.87 713.0L410.54 725.0L410.18 737.0L409.79 749.0L409.37 761.0L408.93 773.0L408.46 785.0L407.96 797.0L407.44 808.8" stroke-width="2.01" stroke-dasharray="1 1.006" stroke-dashoffset="0.88"/>
<path d="M403.74 113.0L404.74 125.0L405.72 137.0L406.66 149.0L407.59 161.0L408.48 173.0L409.35 185.0L410.19 197.0L411.01 209.0L411.80 221.0L412.56 233.0L413.29 245.0L414.01 257.0L414.69 269.0L415.35 281.0L415.98 293.0L416.58 305.0L417.16 317.0L417.71 329.0L418.24 341.0L418.74 353.0L419.21 365.0L419.66 377.0L420.08 389.0L420.48 401.0L420.84 413.0L421.19 425.0L421.50 437.0L421.79 449.0L422.05 461.0L422.29 473.0L422.50 485.0L422.68 497.0L422.84 509.0L422.97 521.0L423.08 533.0L423.16 545.0L423.21 557.0L423.24 569.0L423.23 581.0L423.21 593.0L423.15 605.0L423.07 617.0L422.96 629.0L422.82 641.0L422.65 653.0L422.46 665.0L422.24 677.0L421.99 689.0L421.71 701.0L421.41 713.0L421.07 725.0L420.71 737.0L420.33 749.0L419.91 761.0L419.47 773.0L419.00 785.0L418.50 797.0L417.98 808.8" stroke-width="2.00" stroke-dasharray="1 1.013" stroke-dashoffset="0.03"/>
<path d="M413.78 113.0L414.77 125.0L415.73 137.0L416.67 149.0L417.58 161.0L418.47 173.0L419.32 185.0L420.16 197.0L420.96 209.0L421.74 221.0L422.50 233.0L423.22 245.0L423.92 257.0L424.60 269.0L425.25 281.0L425.87 293.0L426.47 305.0L427.04 317.0L427.59 329.0L428.10 341.0L428.60 353.0L429.06 365.0L429.50 377.0L429.92 389.0L430.31 401.0L430.67 413.0L431.00 425.0L431.31 437.0L431.60 449.0L431.86 461.0L432.09 473.0L432.29 485.0L432.47 497.0L432.63 509.0L432.75 521.0L432.85 533.0L432.93 545.0L432.98 557.0L433.00 569.0L433.00 581.0L432.97 593.0L432.91 605.0L432.82 617.0L432.71 629.0L432.57 641.0L432.40 653.0L432.21 665.0L431.98 677.0L431.73 689.0L431.46 701.0L431.15 713.0L430.82 725.0L430.46 737.0L430.07 749.0L429.66 761.0L429.21 773.0L428.75 785.0L428.25 797.0L427.73 808.8" stroke-width="2.00" stroke-dasharray="1 0.996" stroke-dashoffset="0.08"/>
<path d="M427.61 113.0L428.59 125.0L429.53 137.0L430.45 149.0L431.35 161.0L432.22 173.0L433.06 185.0L433.88 197.0L434.68 209.0L435.44 221.0L436.18 233.0L436.90 245.0L437.59 257.0L438.25 269.0L438.89 281.0L439.50 293.0L440.09 305.0L440.65 317.0L441.18 329.0L441.69 341.0L442.17 353.0L442.63 365.0L443.06 377.0L443.47 389.0L443.85 401.0L444.20 413.0L444.53 425.0L444.83 437.0L445.11 449.0L445.36 461.0L445.58 473.0L445.78 485.0L445.96 497.0L446.10 509.0L446.23 521.0L446.32 533.0L446.39 545.0L446.44 557.0L446.46 569.0L446.45 581.0L446.41 593.0L446.35 605.0L446.26 617.0L446.15 629.0L446.00 641.0L445.83 653.0L445.64 665.0L445.41 677.0L445.16 689.0L444.88 701.0L444.58 713.0L444.24 725.0L443.88 737.0L443.50 749.0L443.08 761.0L442.64 773.0L442.17 785.0L441.68 797.0L441.16 808.8" stroke-width="1.99" stroke-dasharray="1 0.998" stroke-dashoffset="0.15"/>
<path d="M437.14 113.0L438.10 125.0L439.04 137.0L439.95 149.0L440.83 161.0L441.69 173.0L442.53 185.0L443.34 197.0L444.12 209.0L444.88 221.0L445.61 233.0L446.32 245.0L447.00 257.0L447.65 269.0L448.28 281.0L448.89 293.0L449.47 305.0L450.02 317.0L450.55 329.0L451.05 341.0L451.53 353.0L451.98 365.0L452.40 377.0L452.80 389.0L453.18 401.0L453.52 413.0L453.85 425.0L454.14 437.0L454.42 449.0L454.66 461.0L454.88 473.0L455.08 485.0L455.25 497.0L455.39 509.0L455.51 521.0L455.60 533.0L455.67 545.0L455.71 557.0L455.72 569.0L455.71 581.0L455.68 593.0L455.61 605.0L455.52 617.0L455.40 629.0L455.26 641.0L455.09 653.0L454.89 665.0L454.66 677.0L454.41 689.0L454.13 701.0L453.83 713.0L453.49 725.0L453.13 737.0L452.75 749.0L452.33 761.0L451.89 773.0L451.42 785.0L450.93 797.0L450.42 808.8" stroke-width="1.99" stroke-dasharray="1 1.007" stroke-dashoffset="-0.15"/>
<path d="M446.56 113.0L447.51 125.0L448.44 137.0L449.34 149.0L450.21 161.0L451.07 173.0L451.89 185.0L452.69 197.0L453.46 209.0L454.21 221.0L454.94 233.0L455.64 245.0L456.31 257.0L456.96 269.0L457.58 281.0L458.18 293.0L458.75 305.0L459.29 317.0L459.81 329.0L460.31 341.0L460.78 353.0L461.22 365.0L461.64 377.0L462.03 389.0L462.40 401.0L462.75 413.0L463.06 425.0L463.36 437.0L463.62 449.0L463.86 461.0L464.08 473.0L464.27 485.0L464.44 497.0L464.58 509.0L464.69 521.0L464.78 533.0L464.84 545.0L464.88 557.0L464.89 569.0L464.88 581.0L464.84 593.0L464.77 605.0L464.68 617.0L464.56 629.0L464.41 641.0L464.24 653.0L464.04 665.0L463.82 677.0L463.56 689.0L463.28 701.0L462.98 713.0L462.64 725.0L462.28 737.0L461.90 749.0L461.48 761.0L461.04 773.0L460.58 785.0L460.09 797.0L459.57 808.8" stroke-width="1.98" stroke-dasharray="1 0.993" stroke-dashoffset="-0.03"/>
<path d="M455.88 113.0L456.82 125.0L457.73 137.0L458.63 149.0L459.49 161.0L460.33 173.0L461.15 185.0L461.94 197.0L462.71 209.0L463.45 221.0L464.16 233.0L464.85 245.0L465.52 257.0L466.16 269.0L466.77 281.0L467.36 293.0L467.92 305.0L468.46 317.0L468.98 329.0L469.46 341.0L469.93 353.0L470.37 365.0L470.78 377.0L471.17 389.0L471.53 401.0L471.87 413.0L472.18 425.0L472.47 437.0L472.73 449.0L472.97 461.0L473.18 473.0L473.36 485.0L473.52 497.0L473.66 509.0L473.77 521.0L473.86 533.0L473.92 545.0L473.95 557.0L473.96 569.0L473.95 581.0L473.91 593.0L473.84 605.0L473.74 617.0L473.62 629.0L473.47 641.0L473.30 653.0L473.10 665.0L472.87 677.0L472.62 689.0L472.34 701.0L472.03 713.0L471.70 725.0L471.34 737.0L470.95 749.0L470.54 761.0L470.10 773.0L469.63 785.0L469.14 797.0L468.63 808.8" stroke-width="1.98" stroke-dasharray="1 1.012" stroke-dashoffset="1.12"/>
<path d="M464.99 113.0L465.92 125.0L466.83 137.0L467.71 149.0L468.56 161.0L469.40 173.0L470.20 185.0L470.99 197.0L471.74 209.0L472.47 221.0L473.18 233.0L473.86 245.0L474.52 257.0L475.15 269.0L475.76 281.0L476.34 293.0L476.90 305.0L477.43 317.0L477.94 329.0L478.42 341.0L478.88 353.0L479.31 365.0L479.72 377.0L480.10 389.0L480.46 401.0L480.79 413.0L481.10 425.0L481.38 437.0L481.64 449.0L481.87 461.0L482.07 473.0L482.26 485.0L482.41 497.0L482.55 509.0L482.65 521.0L482.74 533.0L482.79 545.0L482.83 557.0L482.83 569.0L482.82 581.0L482.77 593.0L482.70 605.0L482.60 617.0L482.48 629.0L482.33 641.0L482.16 653.0L481.95 665.0L481.72 677.0L481.47 689.0L481.19 701.0L480.88 713.0L480.55 725.0L480.19 737.0L479.80 749.0L479.39 761.0L478.96 773.0L478.49 785.0L478.00 797.0L477.49 808.8" stroke-width="1.98" stroke-dasharray="1 1.010" stroke-dashoffset="1.00"/>
<path d="M478.50 113.0L479.42 125.0L480.31 137.0L481.18 149.0L482.02 161.0L482.84 173.0L483.63 185.0L484.40 197.0L485.14 209.0L485.86 221.0L486.56 233.0L487.23 245.0L487.87 257.0L488.49 269.0L489.09 281.0L489.66 293.0L490.21 305.0L490.73 317.0L491.23 329.0L491.70 341.0L492.15 353.0L492.57 365.0L492.97 377.0L493.35 389.0L493.69 401.0L494.02 413.0L494.32 425.0L494.59 437.0L494.84 449.0L495.07 461.0L495.27 473.0L495.45 485.0L495.60 497.0L495.73 509.0L495.83 521.0L495.91 533.0L495.96 545.0L495.99 557.0L495.99 569.0L495.97 581.0L495.92 593.0L495.85 605.0L495.75 617.0L495.62 629.0L495.47 641.0L495.29 653.0L495.09 665.0L494.86 677.0L494.61 689.0L494.32 701.0L494.02 713.0L493.68 725.0L493.32 737.0L492.94 749.0L492.53 761.0L492.09 773.0L491.63 785.0L491.14 797.0L490.63 808.8" stroke-width="1.97" stroke-dasharray="1 1.015" stroke-dashoffset="-0.01"/>
<path d="M487.40 113.0L488.31 125.0L489.19 137.0L490.05 149.0L490.89 161.0L491.69 173.0L492.48 185.0L493.24 197.0L493.98 209.0L494.69 221.0L495.37 233.0L496.04 245.0L496.67 257.0L497.29 269.0L497.88 281.0L498.44 293.0L498.98 305.0L499.50 317.0L499.99 329.0L500.45 341.0L500.90 353.0L501.31 365.0L501.71 377.0L502.08 389.0L502.42 401.0L502.74 413.0L503.03 425.0L503.30 437.0L503.55 449.0L503.77 461.0L503.97 473.0L504.14 485.0L504.29 497.0L504.41 509.0L504.51 521.0L504.59 533.0L504.64 545.0L504.66 557.0L504.66 569.0L504.64 581.0L504.59 593.0L504.51 605.0L504.41 617.0L504.29 629.0L504.13 641.0L503.95 653.0L503.75 665.0L503.52 677.0L503.26 689.0L502.98 701.0L502.67 713.0L502.34 725.0L501.98 737.0L501.60 749.0L501.19 761.0L500.75 773.0L500.29 785.0L499.80 797.0L499.30 808.8" stroke-width="1.97" stroke-dasharray="1 1.011" stroke-dashoffset="0.06"/>
<path d="M495.69 113.0L496.59 125.0L497.46 137.0L498.31 149.0L499.14 161.0L499.94 173.0L500.72 185.0L501.47 197.0L502.20 209.0L502.90 221.0L503.58 233.0L504.24 245.0L504.87 257.0L505.47 269.0L506.06 281.0L506.61 293.0L507.15 305.0L507.66 317.0L508.14 329.0L508.60 341.0L509.04 353.0L509.45 365.0L509.84 377.0L510.20 389.0L510.54 401.0L510.86 413.0L511.15 425.0L511.41 437.0L511.66 449.0L511.87 461.0L512.07 473.0L512.24 485.0L512.38 497.0L512.50 509.0L512.60 521.0L512.67 533.0L512.72 545.0L512.74 557.0L512.74 569.0L512.71 581.0L512.66 593.0L512.58 605.0L512.48 617.0L512.35 629.0L512.20 641.0L512.02 653.0L511.81 665.0L511.58 677.0L511.32 689.0L511.04 701.0L510.73 713.0L510.40 725.0L510.04 737.0L509.66 749.0L509.25 761.0L508.82 773.0L508.35 785.0L507.87 797.0L507.37 808.8" stroke-width="1.96" stroke-dasharray="1 0.997" stroke-dashoffset="0.15"/>
<path d="M503.98 113.0L504.87 125.0L505.73 137.0L506.57 149.0L507.39 161.0L508.18 173.0L508.95 185.0L509.70 197.0L510.42 209.0L511.11 221.0L511.79 233.0L512.44 245.0L513.06 257.0L513.66 269.0L514.23 281.0L514.79 293.0L515.31 305.0L515.82 317.0L516.30 329.0L516.75 341.0L517.18 353.0L517.59 365.0L517.97 377.0L518.33 389.0L518.67 401.0L518.98 413.0L519.26 425.0L519.52 437.0L519.76 449.0L519.98 461.0L520.17 473.0L520.33 485.0L520.47 497.0L520.59 509.0L520.68 521.0L520.75 533.0L520.80 545.0L520.82 557.0L520.81 569.0L520.79 581.0L520.73 593.0L520.65 605.0L520.55 617.0L520.42 629.0L520.26 641.0L520.08 653.0L519.87 665.0L519.64 677.0L519.39 689.0L519.10 701.0L518.80 713.0L518.46 725.0L518.11 737.0L517.72 749.0L517.31 761.0L516.88 773.0L516.42 785.0L515.94 797.0L515.43 808.8" stroke-width="1.96" stroke-dasharray="1 0.999" stroke-dashoffset="0.85"/>
<path d="M512.06 113.0L512.94 125.0L513.80 137.0L514.63 149.0L515.44 161.0L516.23 173.0L516.99 185.0L517.72 197.0L518.44 209.0L519.12 221.0L519.79 233.0L520.43 245.0L521.05 257.0L521.64 269.0L522.21 281.0L522.76 293.0L523.28 305.0L523.78 317.0L524.25 329.0L524.70 341.0L525.12 353.0L525.53 365.0L525.90 377.0L526.26 389.0L526.59 401.0L526.89 413.0L527.17 425.0L527.43 437.0L527.67 449.0L527.88 461.0L528.06 473.0L528.23 485.0L528.36 497.0L528.48 509.0L528.57 521.0L528.63 533.0L528.68 545.0L528.70 557.0L528.69 569.0L528.66 581.0L528.60 593.0L528.52 605.0L528.42 617.0L528.28 629.0L528.13 641.0L527.95 653.0L527.74 665.0L527.51 677.0L527.25 689.0L526.97 701.0L526.66 713.0L526.33 725.0L525.97 737.0L525.59 749.0L525.18 761.0L524.75 773.0L524.29 785.0L523.80 797.0L523.30 808.8" stroke-width="1.96" stroke-dasharray="1 0.992" stroke-dashoffset="-0.04"/>
<path d="M531.13 113.0L531.98 125.0L532.81 137.0L533.61 149.0L534.39 161.0L535.15 173.0L535.88 185.0L536.59 197.0L537.28 209.0L537.95 221.0L538.59 233.0L539.21 245.0L539.80 257.0L540.38 269.0L540.92 281.0L541.45 293.0L541.95 305.0L542.43 317.0L542.89 329.0L543.32 341.0L543.73 353.0L544.12 365.0L544.48 377.0L544.82 389.0L545.14 401.0L545.44 413.0L545.71 425.0L545.95 437.0L546.18 449.0L546.38 461.0L546.56 473.0L546.71 485.0L546.85 497.0L546.95 509.0L547.04 521.0L547.10 533.0L547.14 545.0L547.16 557.0L547.15 569.0L547.12 581.0L547.06 593.0L546.98 605.0L546.88 617.0L546.75 629.0L546.60 641.0L546.42 653.0L546.22 665.0L545.99 677.0L545.74 689.0L545.46 701.0L545.16 713.0L544.84 725.0L544.49 737.0L544.12 749.0L543.72 761.0L543.30 773.0L542.86 785.0L542.39 797.0L541.90 808.8" stroke-width="1.95" stroke-dasharray="1 0.991" stroke-dashoffset="-0.04"/>
<path d="M538.76 113.0L539.60 125.0L540.41 137.0L541.21 149.0L541.97 161.0L542.72 173.0L543.44 185.0L544.15 197.0L544.82 209.0L545.48 221.0L546.11 233.0L546.72 245.0L547.31 257.0L547.87 269.0L548.41 281.0L548.93 293.0L549.42 305.0L549.90 317.0L550.35 329.0L550.77 341.0L551.18 353.0L551.56 365.0L551.91 377.0L552.25 389.0L552.56 401.0L552.85 413.0L553.12 425.0L553.36 437.0L553.58 449.0L553.78 461.0L553.96 473.0L554.11 485.0L554.24 497.0L554.35 509.0L554.43 521.0L554.49 533.0L554.53 545.0L554.54 557.0L554.54 569.0L554.50 581.0L554.45 593.0L554.37 605.0L554.27 617.0L554.14 629.0L553.99 641.0L553.81 653.0L553.61 665.0L553.39 677.0L553.14 689.0L552.87 701.0L552.57 713.0L552.25 725.0L551.91 737.0L551.54 749.0L551.15 761.0L550.73 773.0L550.29 785.0L549.83 797.0L549.35 808.8" stroke-width="1.95" stroke-dasharray="1 1.014" stroke-dashoffset="0.91"/>
<path d="M546.29 113.0L547.12 125.0L547.92 137.0L548.70 149.0L549.46 161.0L550.19 173.0L550.90 185.0L551.59 197.0L552.26 209.0L552.91 221.0L553.53 233.0L554.13 245.0L554.71 257.0L555.26 269.0L555.80 281.0L556.31 293.0L556.79 305.0L557.26 317.0L557.70 329.0L558.12 341.0L558.52 353.0L558.89 365.0L559.25 377.0L559.58 389.0L559.88 401.0L560.17 413.0L560.43 425.0L560.67 437.0L560.89 449.0L561.08 461.0L561.26 473.0L561.40 485.0L561.53 497.0L561.64 509.0L561.72 521.0L561.78 533.0L561.82 545.0L561.83 557.0L561.82 569.0L561.79 581.0L561.73 593.0L561.66 605.0L561.55 617.0L561.43 629.0L561.28 641.0L561.10 653.0L560.90 665.0L560.68 677.0L560.44 689.0L560.17 701.0L559.88 713.0L559.56 725.0L559.22 737.0L558.86 749.0L558.47 761.0L558.06 773.0L557.63 785.0L557.17 797.0L556.70 808.8" stroke-width="1.94" stroke-dasharray="1 1.010" stroke-dashoffset="0.18"/>
<path d="M553.51 113.0L554.32 125.0L555.11 137.0L555.88 149.0L556.63 161.0L557.35 173.0L558.06 185.0L558.74 197.0L559.40 209.0L560.03 221.0L560.65 233.0L561.24 245.0L561.81 257.0L562.35 269.0L562.88 281.0L563.38 293.0L563.86 305.0L564.32 317.0L564.75 329.0L565.17 341.0L565.56 353.0L565.93 365.0L566.28 377.0L566.60 389.0L566.90 401.0L567.18 413.0L567.44 425.0L567.68 437.0L567.89 449.0L568.08 461.0L568.25 473.0L568.40 485.0L568.53 497.0L568.63 509.0L568.71 521.0L568.77 533.0L568.80 545.0L568.82 557.0L568.81 569.0L568.78 581.0L568.72 593.0L568.64 605.0L568.54 617.0L568.42 629.0L568.27 641.0L568.09 653.0L567.90 665.0L567.68 677.0L567.44 689.0L567.17 701.0L566.89 713.0L566.57 725.0L566.24 737.0L565.88 749.0L565.50 761.0L565.09 773.0L564.66 785.0L564.21 797.0L563.75 808.8" stroke-width="1.94" stroke-dasharray="1 0.993" stroke-dashoffset="-0.20"/>
<path d="M560.63 113.0L561.43 125.0L562.21 137.0L562.96 149.0L563.70 161.0L564.42 173.0L565.11 185.0L565.78 197.0L566.43 209.0L567.05 221.0L567.66 233.0L568.24 245.0L568.80 257.0L569.34 269.0L569.86 281.0L570.35 293.0L570.83 305.0L571.28 317.0L571.71 329.0L572.11 341.0L572.50 353.0L572.86 365.0L573.21 377.0L573.53 389.0L573.82 401.0L574.10 413.0L574.35 425.0L574.59 437.0L574.80 449.0L574.99 461.0L575.15 473.0L575.30 485.0L575.42 497.0L575.52 509.0L575.60 521.0L575.66 533.0L575.69 545.0L575.70 557.0L575.70 569.0L575.66 581.0L575.61 593.0L575.53 605.0L575.43 617.0L575.31 629.0L575.16 641.0L574.99 653.0L574.79 665.0L574.58 677.0L574.34 689.0L574.08 701.0L573.79 713.0L573.48 725.0L573.15 737.0L572.80 749.0L572.42 761.0L572.02 773.0L571.60 785.0L571.15 797.0L570.69 808.8" stroke-width="1.94" stroke-dasharray="1 0.996" stroke-dashoffset="-0.14"/>
<path d="M577.85 113.0L578.62 125.0L579.37 137.0L580.10 149.0L580.81 161.0L581.50 173.0L582.17 185.0L582.82 197.0L583.44 209.0L584.05 221.0L584.63 233.0L585.19 245.0L585.73 257.0L586.25 269.0L586.75 281.0L587.23 293.0L587.68 305.0L588.12 317.0L588.53 329.0L588.93 341.0L589.30 353.0L589.65 365.0L589.98 377.0L590.28 389.0L590.57 401.0L590.84 413.0L591.08 425.0L591.30 437.0L591.51 449.0L591.69 461.0L591.85 473.0L591.99 485.0L592.10 497.0L592.20 509.0L592.28 521.0L592.33 533.0L592.36 545.0L592.37 557.0L592.36 569.0L592.33 581.0L592.28 593.0L592.20 605.0L592.10 617.0L591.98 629.0L591.84 641.0L591.67 653.0L591.48 665.0L591.27 677.0L591.04 689.0L590.79 701.0L590.51 713.0L590.21 725.0L589.89 737.0L589.55 749.0L589.18 761.0L588.79 773.0L588.38 785.0L587.95 797.0L587.51 808.8" stroke-width="1.93" stroke-dasharray="1 1.006" stroke-dashoffset="0.08"/>
<path d="M584.14 113.0L584.90 125.0L585.64 137.0L586.36 149.0L587.06 161.0L587.74 173.0L588.40 185.0L589.04 197.0L589.66 209.0L590.25 221.0L590.83 233.0L591.38 245.0L591.92 257.0L592.43 269.0L592.92 281.0L593.39 293.0L593.84 305.0L594.27 317.0L594.68 329.0L595.07 341.0L595.43 353.0L595.78 365.0L596.10 377.0L596.41 389.0L596.69 401.0L596.95 413.0L597.19 425.0L597.41 437.0L597.61 449.0L597.79 461.0L597.95 473.0L598.08 485.0L598.20 497.0L598.29 509.0L598.37 521.0L598.42 533.0L598.45 545.0L598.46 557.0L598.45 569.0L598.42 581.0L598.37 593.0L598.29 605.0L598.19 617.0L598.07 629.0L597.93 641.0L597.77 653.0L597.58 665.0L597.37 677.0L597.14 689.0L596.89 701.0L596.62 713.0L596.32 725.0L596.01 737.0L595.67 749.0L595.30 761.0L594.92 773.0L594.52 785.0L594.09 797.0L593.65 808.8" stroke-width="1.93" stroke-dasharray="1 1.009" stroke-dashoffset="-0.02"/>
<path d="M590.42 113.0L591.18 125.0L591.91 137.0L592.62 149.0L593.31 161.0L593.98 173.0L594.63 185.0L595.26 197.0L595.87 209.0L596.46 221.0L597.03 233.0L597.57 245.0L598.10 257.0L598.61 269.0L599.09 281.0L599.56 293.0L600.00 305.0L600.42 317.0L600.82 329.0L601.21 341.0L601.57 353.0L601.91 365.0L602.23 377.0L602.53 389.0L602.81 401.0L603.06 413.0L603.30 425.0L603.52 437.0L603.71 449.0L603.89 461.0L604.04 473.0L604.18 485.0L604.29 497.0L604.39 509.0L604.46 521.0L604.51 533.0L604.54 545.0L604.55 557.0L604.54 569.0L604.51 581.0L604.46 593.0L604.38 605.0L604.28 617.0L604.16 629.0L604.02 641.0L603.86 653.0L603.68 665.0L603.47 677.0L603.24 689.0L603.00 701.0L602.73 713.0L602.43 725.0L602.12 737.0L601.78 749.0L601.43 761.0L601.05 773.0L600.65 785.0L600.23 797.0L599.79 808.8" stroke-width="1.92" stroke-dasharray="1 1.001" stroke-dashoffset="-0.04"/>
<path d="M597.33 113.0L598.07 125.0L598.80 137.0L599.50 149.0L600.18 161.0L600.84 173.0L601.48 185.0L602.10 197.0L602.70 209.0L603.28 221.0L603.84 233.0L604.37 245.0L604.89 257.0L605.39 269.0L605.87 281.0L606.32 293.0L606.76 305.0L607.18 317.0L607.57 329.0L607.95 341.0L608.31 353.0L608.64 365.0L608.96 377.0L609.25 389.0L609.52 401.0L609.78 413.0L610.01 425.0L610.23 437.0L610.42 449.0L610.59 461.0L610.74 473.0L610.88 485.0L610.99 497.0L611.08 509.0L611.15 521.0L611.20 533.0L611.23 545.0L611.24 557.0L611.23 569.0L611.20 581.0L611.14 593.0L611.07 605.0L610.97 617.0L610.85 629.0L610.72 641.0L610.56 653.0L610.37 665.0L610.17 677.0L609.95 689.0L609.70 701.0L609.43 713.0L609.15 725.0L608.84 737.0L608.51 749.0L608.15 761.0L607.78 773.0L607.38 785.0L606.97 797.0L606.54 808.8" stroke-width="1.92" stroke-dasharray="1 0.990" stroke-dashoffset="0.19"/>
<path d="M603.52 113.0L604.25 125.0L604.96 137.0L605.65 149.0L606.32 161.0L606.98 173.0L607.61 185.0L608.22 197.0L608.81 209.0L609.38 221.0L609.93 233.0L610.46 245.0L610.97 257.0L611.46 269.0L611.94 281.0L612.39 293.0L612.82 305.0L613.23 317.0L613.62 329.0L613.99 341.0L614.34 353.0L614.67 365.0L614.98 377.0L615.27 389.0L615.54 401.0L615.79 413.0L616.02 425.0L616.23 437.0L616.42 449.0L616.59 461.0L616.74 473.0L616.87 485.0L616.98 497.0L617.07 509.0L617.14 521.0L617.19 533.0L617.22 545.0L617.23 557.0L617.22 569.0L617.19 581.0L617.13 593.0L617.06 605.0L616.96 617.0L616.85 629.0L616.71 641.0L616.55 653.0L616.37 665.0L616.17 677.0L615.95 689.0L615.71 701.0L615.44 713.0L615.16 725.0L614.85 737.0L614.52 749.0L614.18 761.0L613.81 773.0L613.42 785.0L613.00 797.0L612.58 808.8" stroke-width="1.92" stroke-dasharray="1 0.999" stroke-dashoffset="-0.16"/>
<path d="M609.50 113.0L610.22 125.0L610.92 137.0L611.60 149.0L612.27 161.0L612.91 173.0L613.53 185.0L614.13 197.0L614.72 209.0L615.28 221.0L615.83 233.0L616.35 245.0L616.85 257.0L617.34 269.0L617.80 281.0L618.25 293.0L618.67 305.0L619.08 317.0L619.46 329.0L619.83 341.0L620.17 353.0L620.50 365.0L620.80 377.0L621.09 389.0L621.36 401.0L621.60 413.0L621.83 425.0L622.04 437.0L622.23 449.0L622.39 461.0L622.54 473.0L622.67 485.0L622.78 497.0L622.86 509.0L622.93 521.0L622.98 533.0L623.01 545.0L623.02 557.0L623.01 569.0L622.98 581.0L622.92 593.0L622.85 605.0L622.75 617.0L622.64 629.0L622.50 641.0L622.35 653.0L622.17 665.0L621.97 677.0L621.75 689.0L621.51 701.0L621.25 713.0L620.97 725.0L620.67 737.0L620.34 749.0L620.00 761.0L619.63 773.0L619.25 785.0L618.84 797.0L618.42 808.8" stroke-width="1.92" stroke-dasharray="1 0.991" stroke-dashoffset="0.05"/>
<path d="M621.35 113.0L622.05 125.0L622.74 137.0L623.40 149.0L624.05 161.0L624.67 173.0L625.28 185.0L625.86 197.0L626.43 209.0L626.98 221.0L627.51 233.0L628.02 245.0L628.51 257.0L628.98 269.0L629.43 281.0L629.87 293.0L630.28 305.0L630.67 317.0L631.05 329.0L631.40 341.0L631.74 353.0L632.06 365.0L632.35 377.0L632.63 389.0L632.89 401.0L633.13 413.0L633.35 425.0L633.55 437.0L633.73 449.0L633.89 461.0L634.04 473.0L634.16 485.0L634.27 497.0L634.35 509.0L634.42 521.0L634.46 533.0L634.49 545.0L634.50 557.0L634.49 569.0L634.46 581.0L634.40 593.0L634.33 605.0L634.24 617.0L634.12 629.0L633.99 641.0L633.84 653.0L633.66 665.0L633.47 677.0L633.25 689.0L633.02 701.0L632.77 713.0L632.49 725.0L632.19 737.0L631.88 749.0L631.54 761.0L631.19 773.0L630.81 785.0L630.41 797.0L630.00 808.8" stroke-width="1.91" stroke-dasharray="1 1.008" stroke-dashoffset="0.05"/>
<path d="M627.54 113.0L628.23 125.0L628.90 137.0L629.56 149.0L630.19 161.0L630.81 173.0L631.41 185.0L631.98 197.0L632.54 209.0L633.08 221.0L633.61 233.0L634.11 245.0L634.59 257.0L635.06 269.0L635.50 281.0L635.93 293.0L636.33 305.0L636.72 317.0L637.09 329.0L637.44 341.0L637.77 353.0L638.08 365.0L638.38 377.0L638.65 389.0L638.91 401.0L639.14 413.0L639.36 425.0L639.56 437.0L639.74 449.0L639.90 461.0L640.04 473.0L640.16 485.0L640.26 497.0L640.34 509.0L640.41 521.0L640.45 533.0L640.48 545.0L640.49 557.0L640.48 569.0L640.44 581.0L640.39 593.0L640.32 605.0L640.23 617.0L640.12 629.0L639.99 641.0L639.83 653.0L639.66 665.0L639.47 677.0L639.26 689.0L639.03 701.0L638.77 713.0L638.50 725.0L638.21 737.0L637.90 749.0L637.57 761.0L637.22 773.0L636.84 785.0L636.45 797.0L636.05 808.8" stroke-width="1.91" stroke-dasharray="1 1.000" stroke-dashoffset="-0.15"/>
<path d="M633.72 113.0L634.40 125.0L635.07 137.0L635.71 149.0L636.34 161.0L636.94 173.0L637.53 185.0L638.10 197.0L638.65 209.0L639.19 221.0L639.70 233.0L640.20 245.0L640.67 257.0L641.13 269.0L641.57 281.0L641.99 293.0L642.39 305.0L642.77 317.0L643.14 329.0L643.48 341.0L643.81 353.0L644.11 365.0L644.40 377.0L644.67 389.0L644.92 401.0L645.16 413.0L645.37 425.0L645.56 437.0L645.74 449.0L645.90 461.0L646.03 473.0L646.15 485.0L646.26 497.0L646.34 509.0L646.40 521.0L646.45 533.0L646.47 545.0L646.48 557.0L646.47 569.0L646.43 581.0L646.38 593.0L646.31 605.0L646.22 617.0L646.11 629.0L645.98 641.0L645.83 653.0L645.66 665.0L645.47 677.0L645.26 689.0L645.03 701.0L644.78 713.0L644.51 725.0L644.23 737.0L643.92 749.0L643.59 761.0L643.24 773.0L642.88 785.0L642.49 797.0L642.09 808.8" stroke-width="1.91" stroke-dasharray="1 1.003" stroke-dashoffset="-0.17"/>
<path d="M638.98 113.0L639.65 125.0L640.30 137.0L640.94 149.0L641.56 161.0L642.16 173.0L642.74 185.0L643.30 197.0L643.85 209.0L644.37 221.0L644.88 233.0L645.37 245.0L645.84 257.0L646.29 269.0L646.73 281.0L647.14 293.0L647.54 305.0L647.91 317.0L648.27 329.0L648.61 341.0L648.93 353.0L649.24 365.0L649.52 377.0L649.79 389.0L650.04 401.0L650.27 413.0L650.48 425.0L650.67 437.0L650.84 449.0L651.00 461.0L651.13 473.0L651.25 485.0L651.35 497.0L651.43 509.0L651.49 521.0L651.54 533.0L651.56 545.0L651.57 557.0L651.56 569.0L651.53 581.0L651.47 593.0L651.40 605.0L651.31 617.0L651.20 629.0L651.07 641.0L650.93 653.0L650.76 665.0L650.57 677.0L650.36 689.0L650.14 701.0L649.89 713.0L649.62 725.0L649.34 737.0L649.04 749.0L648.71 761.0L648.37 773.0L648.01 785.0L647.62 797.0L647.23 808.8" stroke-width="1.90" stroke-dasharray="1 1.012" stroke-dashoffset="0.13"/>
<path d="M328.14 113.0L329.23 125.0L330.29 137.0L331.32 149.0L332.32 161.0L333.29 173.0L334.24 185.0L335.16 197.0L336.05 209.0L336.91 221.0L337.75 233.0L338.55 245.0L339.33 257.0L340.08 269.0L340.81 281.0L341.50 293.0L342.17 305.0L342.81 317.0L343.42 329.0L344.00 341.0L344.56 353.0L345.08 365.0L345.58 377.0L346.05 389.0L346.50 401.0L346.91 413.0L347.30 425.0L347.66 437.0L347.99 449.0L348.29 461.0L348.57 473.0L348.81 485.0L349.03 497.0L349.22 509.0L349.39 521.0L349.52 533.0L349.63 545.0L349.71 557.0L349.76 569.0L349.78 581.0L349.78 593.0L349.74 605.0L349.68 617.0L349.59 629.0L349.46 641.0L349.31 653.0L349.13 665.0L348.92 677.0L348.68 689.0L348.41 701.0L348.11 713.0L347.78 725.0L347.43 737.0L347.04 749.0L346.62 761.0L346.18 773.0L345.70 785.0L345.20 797.0L344.67 808.8" stroke-width="2.03" stroke-dasharray="1 0.994" stroke-dashoffset="1.90"/>
<path d="M520.48 113.0L521.35 125.0L522.20 137.0L523.02 149.0L523.81 161.0L524.59 173.0L525.34 185.0L526.06 197.0L526.77 209.0L527.45 221.0L528.10 233.0L528.73 245.0L529.34 257.0L529.92 269.0L530.49 281.0L531.02 293.0L531.54 305.0L532.03 317.0L532.49 329.0L532.93 341.0L533.35 353.0L533.75 365.0L534.12 377.0L534.47 389.0L534.79 401.0L535.09 413.0L535.37 425.0L535.62 437.0L535.85 449.0L536.06 461.0L536.24 473.0L536.40 485.0L536.54 497.0L536.65 509.0L536.74 521.0L536.80 533.0L536.84 545.0L536.86 557.0L536.85 569.0L536.82 581.0L536.77 593.0L536.68 605.0L536.58 617.0L536.45 629.0L536.29 641.0L536.11 653.0L535.91 665.0L535.68 677.0L535.42 689.0L535.14 701.0L534.84 713.0L534.51 725.0L534.15 737.0L533.78 749.0L533.37 761.0L532.94 773.0L532.49 785.0L532.01 797.0L531.52 808.8" stroke-width="1.95" stroke-dasharray="1 1.044" stroke-dashoffset="1.52"/>
<path d="M567.73 113.0L568.52 125.0L569.29 137.0L570.03 149.0L570.76 161.0L571.46 173.0L572.15 185.0L572.81 197.0L573.45 209.0L574.06 221.0L574.66 233.0L575.23 245.0L575.79 257.0L576.32 269.0L576.83 281.0L577.31 293.0L577.78 305.0L578.22 317.0L578.65 329.0L579.05 341.0L579.43 353.0L579.79 365.0L580.12 377.0L580.44 389.0L580.73 401.0L581.00 413.0L581.25 425.0L581.48 437.0L581.69 449.0L581.88 461.0L582.04 473.0L582.18 485.0L582.30 497.0L582.40 509.0L582.48 521.0L582.53 533.0L582.57 545.0L582.58 557.0L582.57 569.0L582.54 581.0L582.48 593.0L582.41 605.0L582.31 617.0L582.18 629.0L582.04 641.0L581.87 653.0L581.68 665.0L581.47 677.0L581.23 689.0L580.97 701.0L580.69 713.0L580.38 725.0L580.06 737.0L579.71 749.0L579.34 761.0L578.94 773.0L578.52 785.0L578.08 797.0L577.63 808.8" stroke-width="1.93" stroke-dasharray="1 0.986" stroke-dashoffset="1.69"/>
<path d="M615.78 113.0L616.49 125.0L617.18 137.0L617.86 149.0L618.51 161.0L619.14 173.0L619.76 185.0L620.35 197.0L620.93 209.0L621.48 221.0L622.02 233.0L622.53 245.0L623.03 257.0L623.51 269.0L623.97 281.0L624.40 293.0L624.82 305.0L625.22 317.0L625.60 329.0L625.96 341.0L626.30 353.0L626.62 365.0L626.93 377.0L627.21 389.0L627.47 401.0L627.71 413.0L627.94 425.0L628.14 437.0L628.32 449.0L628.49 461.0L628.63 473.0L628.76 485.0L628.87 497.0L628.95 509.0L629.02 521.0L629.07 533.0L629.10 545.0L629.10 557.0L629.09 569.0L629.06 581.0L629.01 593.0L628.93 605.0L628.84 617.0L628.73 629.0L628.59 641.0L628.44 653.0L628.26 665.0L628.06 677.0L627.85 689.0L627.61 701.0L627.35 713.0L627.07 725.0L626.78 737.0L626.46 749.0L626.12 761.0L625.76 773.0L625.38 785.0L624.97 797.0L624.56 808.8" stroke-width="1.91" stroke-dasharray="1 1.005" stroke-dashoffset="0.45"/>
<path d="M650.15 113.0L650.81 125.0L651.45 137.0L652.07 149.0L652.68 161.0L653.26 173.0L653.83 185.0L654.38 197.0L654.91 209.0L655.43 221.0L655.92 233.0L656.40 245.0L656.86 257.0L657.30 269.0L657.73 281.0L658.13 293.0L658.52 305.0L658.89 317.0L659.24 329.0L659.57 341.0L659.88 353.0L660.18 365.0L660.46 377.0L660.72 389.0L660.96 401.0L661.18 413.0L661.39 425.0L661.58 437.0L661.75 449.0L661.90 461.0L662.03 473.0L662.15 485.0L662.24 497.0L662.32 509.0L662.38 521.0L662.42 533.0L662.45 545.0L662.45 557.0L662.44 569.0L662.41 581.0L662.36 593.0L662.29 605.0L662.20 617.0L662.09 629.0L661.97 641.0L661.82 653.0L661.65 665.0L661.47 677.0L661.27 689.0L661.05 701.0L660.80 713.0L660.54 725.0L660.26 737.0L659.97 749.0L659.65 761.0L659.31 773.0L658.96 785.0L658.58 797.0L658.19 808.8" stroke-width="1.90" stroke-dasharray="1 1.025" stroke-dashoffset="1.23"/>
</g>
<rect x="305.0" y="113.0" width="371.0" height="695.8" fill="url(#dTR)"/><rect x="305.0" y="113.0" width="371.0" height="695.8" fill="url(#dBR)"/><rect x="305.0" y="113.0" width="371.0" height="695.8" fill="url(#dBL)"/><rect x="305.0" y="113.0" width="371.0" height="695.8" fill="url(#dR)"/><rect x="305.0" y="113.0" width="371.0" height="695.8" fill="url(#dT)"/><rect x="305.0" y="113.0" width="371.0" height="695.8" fill="url(#dT2)"/>
</g>
<g filter="url(#cmB)">
<g mask="url(#mLm)"><g shape-rendering="crispEdges" fill="none" stroke="#fff">
<path d="M292.69 113.0L293.82 125.0L294.92 137.0L295.99 149.0L297.03 161.0L298.04 173.0L299.03 185.0L299.98 197.0L300.91 209.0L301.81 221.0L302.68 233.0L303.52 245.0L304.33 257.0L305.11 269.0L305.86 281.0L306.59 293.0L307.29 305.0L307.95 317.0L308.59 329.0L309.20 341.0L309.79 353.0L310.34 365.0L310.86 377.0L311.36 389.0L311.82 401.0L312.26 413.0L312.67 425.0L313.05 437.0L313.40 449.0L313.73 461.0L314.02 473.0L314.29 485.0L314.52 497.0L314.73 509.0L314.91 521.0L315.06 533.0L315.18 545.0L315.27 557.0L315.34 569.0L315.37 581.0L315.38 593.0L315.36 605.0L315.30 617.0L315.22 629.0L315.11 641.0L314.96 653.0L314.79 665.0L314.58 677.0L314.35 689.0L314.08 701.0L313.79 713.0L313.46 725.0L313.11 737.0L312.72 749.0L312.31 761.0L311.86 773.0L311.38 785.0L310.88 797.0L310.35 808.8" stroke-width="2.05"/>
<path d="M306.24 113.0L307.35 125.0L308.43 137.0L309.49 149.0L310.52 161.0L311.51 173.0L312.48 185.0L313.43 197.0L314.34 209.0L315.22 221.0L316.08 233.0L316.91 245.0L317.70 257.0L318.48 269.0L319.22 281.0L319.93 293.0L320.62 305.0L321.27 317.0L321.90 329.0L322.50 341.0L323.07 353.0L323.62 365.0L324.13 377.0L324.62 389.0L325.07 401.0L325.50 413.0L325.90 425.0L326.28 437.0L326.62 449.0L326.93 461.0L327.22 473.0L327.48 485.0L327.71 497.0L327.91 509.0L328.08 521.0L328.23 533.0L328.34 545.0L328.43 557.0L328.49 569.0L328.52 581.0L328.52 593.0L328.50 605.0L328.44 617.0L328.35 629.0L328.23 641.0L328.09 653.0L327.91 665.0L327.70 677.0L327.47 689.0L327.20 701.0L326.90 713.0L326.58 725.0L326.22 737.0L325.83 749.0L325.42 761.0L324.97 773.0L324.50 785.0L323.99 797.0L323.46 808.8" stroke-width="2.04"/>
<path d="M318.45 113.0L319.55 125.0L320.62 137.0L321.66 149.0L322.67 161.0L323.66 173.0L324.61 185.0L325.54 197.0L326.44 209.0L327.32 221.0L328.16 233.0L328.98 245.0L329.76 257.0L330.52 269.0L331.25 281.0L331.96 293.0L332.63 305.0L333.28 317.0L333.90 329.0L334.49 341.0L335.05 353.0L335.58 365.0L336.09 377.0L336.57 389.0L337.02 401.0L337.44 413.0L337.83 425.0L338.20 437.0L338.53 449.0L338.84 461.0L339.12 473.0L339.37 485.0L339.60 497.0L339.79 509.0L339.96 521.0L340.10 533.0L340.21 545.0L340.29 557.0L340.35 569.0L340.37 581.0L340.37 593.0L340.34 605.0L340.28 617.0L340.19 629.0L340.07 641.0L339.92 653.0L339.74 665.0L339.53 677.0L339.29 689.0L339.02 701.0L338.73 713.0L338.40 725.0L338.04 737.0L337.66 749.0L337.24 761.0L336.79 773.0L336.32 785.0L335.81 797.0L335.29 808.8" stroke-width="2.04"/>
<path d="M335.28 113.0L336.36 125.0L337.41 137.0L338.43 149.0L339.42 161.0L340.39 173.0L341.33 185.0L342.24 197.0L343.12 209.0L343.98 221.0L344.81 233.0L345.61 245.0L346.38 257.0L347.12 269.0L347.84 281.0L348.53 293.0L349.19 305.0L349.82 317.0L350.43 329.0L351.01 341.0L351.56 353.0L352.08 365.0L352.57 377.0L353.04 389.0L353.48 401.0L353.89 413.0L354.27 425.0L354.62 437.0L354.95 449.0L355.25 461.0L355.52 473.0L355.76 485.0L355.98 497.0L356.17 509.0L356.33 521.0L356.46 533.0L356.56 545.0L356.64 557.0L356.69 569.0L356.71 581.0L356.70 593.0L356.67 605.0L356.60 617.0L356.51 629.0L356.38 641.0L356.23 653.0L356.05 665.0L355.83 677.0L355.59 689.0L355.32 701.0L355.02 713.0L354.70 725.0L354.34 737.0L353.95 749.0L353.53 761.0L353.09 773.0L352.61 785.0L352.11 797.0L351.59 808.8" stroke-width="2.03"/>
<path d="M347.18 113.0L348.24 125.0L349.28 137.0L350.29 149.0L351.27 161.0L352.22 173.0L353.15 185.0L354.05 197.0L354.92 209.0L355.77 221.0L356.58 233.0L357.37 245.0L358.13 257.0L358.87 269.0L359.57 281.0L360.25 293.0L360.90 305.0L361.52 317.0L362.12 329.0L362.69 341.0L363.23 353.0L363.74 365.0L364.23 377.0L364.69 389.0L365.12 401.0L365.52 413.0L365.90 425.0L366.24 437.0L366.56 449.0L366.86 461.0L367.12 473.0L367.36 485.0L367.57 497.0L367.75 509.0L367.91 521.0L368.03 533.0L368.13 545.0L368.21 557.0L368.25 569.0L368.27 581.0L368.26 593.0L368.22 605.0L368.15 617.0L368.05 629.0L367.92 641.0L367.77 653.0L367.58 665.0L367.37 677.0L367.13 689.0L366.85 701.0L366.55 713.0L366.22 725.0L365.87 737.0L365.48 749.0L365.06 761.0L364.62 773.0L364.14 785.0L363.64 797.0L363.12 808.8" stroke-width="2.03"/>
<path d="M358.97 113.0L360.02 125.0L361.05 137.0L362.04 149.0L363.01 161.0L363.95 173.0L364.87 185.0L365.76 197.0L366.62 209.0L367.45 221.0L368.25 233.0L369.03 245.0L369.78 257.0L370.50 269.0L371.20 281.0L371.87 293.0L372.51 305.0L373.12 317.0L373.71 329.0L374.27 341.0L374.80 353.0L375.31 365.0L375.78 377.0L376.23 389.0L376.66 401.0L377.05 413.0L377.42 425.0L377.76 437.0L378.08 449.0L378.36 461.0L378.62 473.0L378.85 485.0L379.06 497.0L379.23 509.0L379.38 521.0L379.51 533.0L379.60 545.0L379.67 557.0L379.71 569.0L379.72 581.0L379.71 593.0L379.67 605.0L379.59 617.0L379.49 629.0L379.36 641.0L379.21 653.0L379.02 665.0L378.80 677.0L378.56 689.0L378.29 701.0L377.99 713.0L377.66 725.0L377.30 737.0L376.91 749.0L376.49 761.0L376.05 773.0L375.57 785.0L375.07 797.0L374.55 808.8" stroke-width="2.02"/>
<path d="M370.66 113.0L371.70 125.0L372.71 137.0L373.69 149.0L374.65 161.0L375.58 173.0L376.48 185.0L377.36 197.0L378.21 209.0L379.03 221.0L379.82 233.0L380.59 245.0L381.33 257.0L382.04 269.0L382.73 281.0L383.39 293.0L384.02 305.0L384.62 317.0L385.20 329.0L385.75 341.0L386.27 353.0L386.77 365.0L387.24 377.0L387.68 389.0L388.10 401.0L388.49 413.0L388.85 425.0L389.18 437.0L389.49 449.0L389.77 461.0L390.02 473.0L390.25 485.0L390.45 497.0L390.62 509.0L390.76 521.0L390.88 533.0L390.97 545.0L391.04 557.0L391.07 569.0L391.08 581.0L391.06 593.0L391.02 605.0L390.94 617.0L390.84 629.0L390.71 641.0L390.55 653.0L390.36 665.0L390.14 677.0L389.89 689.0L389.62 701.0L389.32 713.0L388.99 725.0L388.63 737.0L388.24 749.0L387.83 761.0L387.38 773.0L386.91 785.0L386.41 797.0L385.89 808.8" stroke-width="2.02"/>
<path d="M385.02 113.0L386.04 125.0L387.03 137.0L388.00 149.0L388.94 161.0L389.86 173.0L390.74 185.0L391.60 197.0L392.44 209.0L393.25 221.0L394.03 233.0L394.78 245.0L395.51 257.0L396.21 269.0L396.88 281.0L397.53 293.0L398.15 305.0L398.74 317.0L399.31 329.0L399.85 341.0L400.36 353.0L400.85 365.0L401.31 377.0L401.74 389.0L402.15 401.0L402.53 413.0L402.88 425.0L403.20 437.0L403.50 449.0L403.78 461.0L404.02 473.0L404.24 485.0L404.43 497.0L404.60 509.0L404.74 521.0L404.85 533.0L404.94 545.0L404.99 557.0L405.03 569.0L405.03 581.0L405.01 593.0L404.96 605.0L404.88 617.0L404.77 629.0L404.64 641.0L404.47 653.0L404.28 665.0L404.06 677.0L403.82 689.0L403.54 701.0L403.24 713.0L402.91 725.0L402.55 737.0L402.16 749.0L401.74 761.0L401.30 773.0L400.83 785.0L400.33 797.0L399.81 808.8" stroke-width="2.01"/>
<path d="M395.88 113.0L396.89 125.0L397.87 137.0L398.83 149.0L399.76 161.0L400.66 173.0L401.54 185.0L402.39 197.0L403.21 209.0L404.01 221.0L404.78 233.0L405.52 245.0L406.24 257.0L406.93 269.0L407.60 281.0L408.23 293.0L408.84 305.0L409.43 317.0L409.99 329.0L410.52 341.0L411.03 353.0L411.50 365.0L411.96 377.0L412.38 389.0L412.78 401.0L413.15 413.0L413.50 425.0L413.82 437.0L414.11 449.0L414.38 461.0L414.62 473.0L414.84 485.0L415.02 497.0L415.18 509.0L415.32 521.0L415.43 533.0L415.51 545.0L415.56 557.0L415.59 569.0L415.59 581.0L415.57 593.0L415.51 605.0L415.43 617.0L415.32 629.0L415.19 641.0L415.02 653.0L414.83 665.0L414.61 677.0L414.36 689.0L414.08 701.0L413.78 713.0L413.45 725.0L413.09 737.0L412.70 749.0L412.29 761.0L411.84 773.0L411.37 785.0L410.87 797.0L410.36 808.8" stroke-width="2.01"/>
<path d="M406.75 113.0L407.74 125.0L408.71 137.0L409.66 149.0L410.58 161.0L411.47 173.0L412.33 185.0L413.17 197.0L413.98 209.0L414.77 221.0L415.53 233.0L416.27 245.0L416.97 257.0L417.65 269.0L418.31 281.0L418.94 293.0L419.54 305.0L420.12 317.0L420.67 329.0L421.19 341.0L421.69 353.0L422.16 365.0L422.61 377.0L423.03 389.0L423.42 401.0L423.78 413.0L424.12 425.0L424.44 437.0L424.73 449.0L424.99 461.0L425.22 473.0L425.43 485.0L425.61 497.0L425.77 509.0L425.90 521.0L426.00 533.0L426.08 545.0L426.13 557.0L426.16 569.0L426.16 581.0L426.13 593.0L426.07 605.0L425.99 617.0L425.88 629.0L425.74 641.0L425.57 653.0L425.37 665.0L425.15 677.0L424.90 689.0L424.63 701.0L424.32 713.0L423.99 725.0L423.63 737.0L423.24 749.0L422.83 761.0L422.39 773.0L421.92 785.0L421.42 797.0L420.90 808.8" stroke-width="2.00"/>
<path d="M416.79 113.0L417.78 125.0L418.74 137.0L419.67 149.0L420.58 161.0L421.46 173.0L422.31 185.0L423.14 197.0L423.94 209.0L424.72 221.0L425.47 233.0L426.20 245.0L426.90 257.0L427.57 269.0L428.22 281.0L428.84 293.0L429.43 305.0L430.00 317.0L430.54 329.0L431.06 341.0L431.55 353.0L432.01 365.0L432.45 377.0L432.86 389.0L433.25 401.0L433.61 413.0L433.95 425.0L434.25 437.0L434.54 449.0L434.79 461.0L435.02 473.0L435.23 485.0L435.40 497.0L435.56 509.0L435.68 521.0L435.78 533.0L435.86 545.0L435.90 557.0L435.93 569.0L435.92 581.0L435.89 593.0L435.83 605.0L435.74 617.0L435.63 629.0L435.49 641.0L435.32 653.0L435.13 665.0L434.90 677.0L434.65 689.0L434.37 701.0L434.07 713.0L433.74 725.0L433.38 737.0L432.99 749.0L432.58 761.0L432.13 773.0L431.66 785.0L431.17 797.0L430.65 808.8" stroke-width="2.00"/>
<path d="M430.62 113.0L431.59 125.0L432.54 137.0L433.46 149.0L434.35 161.0L435.21 173.0L436.06 185.0L436.87 197.0L437.66 209.0L438.42 221.0L439.16 233.0L439.88 245.0L440.56 257.0L441.22 269.0L441.86 281.0L442.47 293.0L443.05 305.0L443.61 317.0L444.14 329.0L444.65 341.0L445.13 353.0L445.58 365.0L446.01 377.0L446.42 389.0L446.80 401.0L447.15 413.0L447.47 425.0L447.78 437.0L448.05 449.0L448.30 461.0L448.52 473.0L448.72 485.0L448.89 497.0L449.04 509.0L449.16 521.0L449.25 533.0L449.32 545.0L449.37 557.0L449.38 569.0L449.38 581.0L449.34 593.0L449.28 605.0L449.19 617.0L449.07 629.0L448.93 641.0L448.76 653.0L448.56 665.0L448.33 677.0L448.08 689.0L447.80 701.0L447.50 713.0L447.17 725.0L446.81 737.0L446.42 749.0L446.01 761.0L445.56 773.0L445.10 785.0L444.60 797.0L444.09 808.8" stroke-width="1.99"/>
<path d="M440.15 113.0L441.11 125.0L442.04 137.0L442.95 149.0L443.83 161.0L444.69 173.0L445.52 185.0L446.33 197.0L447.11 209.0L447.86 221.0L448.59 233.0L449.30 245.0L449.98 257.0L450.63 269.0L451.26 281.0L451.86 293.0L452.43 305.0L452.99 317.0L453.51 329.0L454.01 341.0L454.48 353.0L454.93 365.0L455.36 377.0L455.75 389.0L456.13 401.0L456.47 413.0L456.79 425.0L457.09 437.0L457.36 449.0L457.60 461.0L457.82 473.0L458.02 485.0L458.18 497.0L458.33 509.0L458.44 521.0L458.53 533.0L458.60 545.0L458.64 557.0L458.66 569.0L458.64 581.0L458.61 593.0L458.54 605.0L458.45 617.0L458.33 629.0L458.19 641.0L458.01 653.0L457.81 665.0L457.59 677.0L457.34 689.0L457.06 701.0L456.75 713.0L456.42 725.0L456.06 737.0L455.67 749.0L455.26 761.0L454.82 773.0L454.35 785.0L453.86 797.0L453.35 808.8" stroke-width="1.99"/>
<path d="M449.57 113.0L450.52 125.0L451.45 137.0L452.34 149.0L453.22 161.0L454.06 173.0L454.89 185.0L455.68 197.0L456.45 209.0L457.20 221.0L457.92 233.0L458.62 245.0L459.29 257.0L459.93 269.0L460.55 281.0L461.15 293.0L461.72 305.0L462.26 317.0L462.78 329.0L463.27 341.0L463.74 353.0L464.18 365.0L464.60 377.0L464.99 389.0L465.36 401.0L465.70 413.0L466.01 425.0L466.30 437.0L466.57 449.0L466.81 461.0L467.02 473.0L467.21 485.0L467.38 497.0L467.51 509.0L467.63 521.0L467.72 533.0L467.78 545.0L467.82 557.0L467.83 569.0L467.81 581.0L467.77 593.0L467.71 605.0L467.61 617.0L467.49 629.0L467.35 641.0L467.17 653.0L466.97 665.0L466.74 677.0L466.49 689.0L466.21 701.0L465.91 713.0L465.57 725.0L465.21 737.0L464.83 749.0L464.41 761.0L463.97 773.0L463.51 785.0L463.02 797.0L462.51 808.8" stroke-width="1.98"/>
<path d="M458.89 113.0L459.83 125.0L460.75 137.0L461.63 149.0L462.50 161.0L463.33 173.0L464.15 185.0L464.94 197.0L465.70 209.0L466.44 221.0L467.15 233.0L467.84 245.0L468.50 257.0L469.13 269.0L469.75 281.0L470.33 293.0L470.90 305.0L471.43 317.0L471.94 329.0L472.43 341.0L472.89 353.0L473.33 365.0L473.74 377.0L474.12 389.0L474.49 401.0L474.82 413.0L475.13 425.0L475.42 437.0L475.68 449.0L475.91 461.0L476.12 473.0L476.31 485.0L476.47 497.0L476.60 509.0L476.71 521.0L476.80 533.0L476.86 545.0L476.89 557.0L476.90 569.0L476.88 581.0L476.84 593.0L476.77 605.0L476.68 617.0L476.55 629.0L476.41 641.0L476.23 653.0L476.03 665.0L475.80 677.0L475.55 689.0L475.27 701.0L474.96 713.0L474.63 725.0L474.27 737.0L473.88 749.0L473.47 761.0L473.03 773.0L472.57 785.0L472.07 797.0L471.57 808.8" stroke-width="1.98"/>
<path d="M468.01 113.0L468.94 125.0L469.84 137.0L470.72 149.0L471.57 161.0L472.40 173.0L473.20 185.0L473.98 197.0L474.74 209.0L475.47 221.0L476.17 233.0L476.85 245.0L477.50 257.0L478.13 269.0L478.74 281.0L479.32 293.0L479.87 305.0L480.40 317.0L480.91 329.0L481.39 341.0L481.84 353.0L482.27 365.0L482.68 377.0L483.06 389.0L483.41 401.0L483.74 413.0L484.05 425.0L484.33 437.0L484.59 449.0L484.82 461.0L485.02 473.0L485.20 485.0L485.36 497.0L485.49 509.0L485.60 521.0L485.68 533.0L485.74 545.0L485.77 557.0L485.77 569.0L485.76 581.0L485.71 593.0L485.64 605.0L485.54 617.0L485.42 629.0L485.27 641.0L485.09 653.0L484.89 665.0L484.66 677.0L484.41 689.0L484.12 701.0L483.82 713.0L483.48 725.0L483.12 737.0L482.74 749.0L482.33 761.0L481.89 773.0L481.43 785.0L480.94 797.0L480.43 808.8" stroke-width="1.98"/>
<path d="M481.52 113.0L482.44 125.0L483.32 137.0L484.19 149.0L485.03 161.0L485.84 173.0L486.63 185.0L487.40 197.0L488.14 209.0L488.86 221.0L489.55 233.0L490.22 245.0L490.86 257.0L491.48 269.0L492.07 281.0L492.64 293.0L493.19 305.0L493.71 317.0L494.20 329.0L494.67 341.0L495.12 353.0L495.54 365.0L495.94 377.0L496.31 389.0L496.66 401.0L496.98 413.0L497.28 425.0L497.55 437.0L497.80 449.0L498.02 461.0L498.22 473.0L498.40 485.0L498.55 497.0L498.68 509.0L498.78 521.0L498.85 533.0L498.91 545.0L498.93 557.0L498.94 569.0L498.91 581.0L498.86 593.0L498.79 605.0L498.69 617.0L498.56 629.0L498.41 641.0L498.23 653.0L498.03 665.0L497.80 677.0L497.54 689.0L497.26 701.0L496.96 713.0L496.62 725.0L496.26 737.0L495.88 749.0L495.47 761.0L495.03 773.0L494.57 785.0L494.08 797.0L493.58 808.8" stroke-width="1.97"/>
<path d="M490.43 113.0L491.33 125.0L492.21 137.0L493.07 149.0L493.90 161.0L494.70 173.0L495.49 185.0L496.24 197.0L496.98 209.0L497.68 221.0L498.37 233.0L499.03 245.0L499.66 257.0L500.27 269.0L500.86 281.0L501.42 293.0L501.96 305.0L502.47 317.0L502.96 329.0L503.43 341.0L503.87 353.0L504.28 365.0L504.67 377.0L505.04 389.0L505.38 401.0L505.70 413.0L505.99 425.0L506.26 437.0L506.51 449.0L506.73 461.0L506.92 473.0L507.10 485.0L507.24 497.0L507.37 509.0L507.46 521.0L507.54 533.0L507.59 545.0L507.61 557.0L507.61 569.0L507.59 581.0L507.53 593.0L507.46 605.0L507.36 617.0L507.23 629.0L507.07 641.0L506.90 653.0L506.69 665.0L506.46 677.0L506.20 689.0L505.92 701.0L505.62 713.0L505.28 725.0L504.92 737.0L504.54 749.0L504.13 761.0L503.69 773.0L503.23 785.0L502.75 797.0L502.24 808.8" stroke-width="1.97"/>
<path d="M498.72 113.0L499.61 125.0L500.48 137.0L501.33 149.0L502.15 161.0L502.95 173.0L503.72 185.0L504.47 197.0L505.20 209.0L505.90 221.0L506.58 233.0L507.23 245.0L507.86 257.0L508.46 269.0L509.04 281.0L509.60 293.0L510.13 305.0L510.64 317.0L511.12 329.0L511.58 341.0L512.01 353.0L512.42 365.0L512.81 377.0L513.17 389.0L513.51 401.0L513.82 413.0L514.11 425.0L514.38 437.0L514.62 449.0L514.83 461.0L515.02 473.0L515.19 485.0L515.34 497.0L515.46 509.0L515.55 521.0L515.62 533.0L515.67 545.0L515.69 557.0L515.69 569.0L515.66 581.0L515.61 593.0L515.53 605.0L515.43 617.0L515.30 629.0L515.14 641.0L514.96 653.0L514.76 665.0L514.52 677.0L514.27 689.0L513.99 701.0L513.68 713.0L513.35 725.0L512.99 737.0L512.60 749.0L512.19 761.0L511.76 773.0L511.30 785.0L510.81 797.0L510.31 808.8" stroke-width="1.96"/>
<path d="M507.01 113.0L507.89 125.0L508.76 137.0L509.59 149.0L510.41 161.0L511.20 173.0L511.96 185.0L512.71 197.0L513.42 209.0L514.12 221.0L514.79 233.0L515.43 245.0L516.05 257.0L516.65 269.0L517.22 281.0L517.77 293.0L518.30 305.0L518.80 317.0L519.28 329.0L519.73 341.0L520.16 353.0L520.56 365.0L520.94 377.0L521.30 389.0L521.63 401.0L521.94 413.0L522.23 425.0L522.49 437.0L522.72 449.0L522.94 461.0L523.12 473.0L523.29 485.0L523.43 497.0L523.55 509.0L523.64 521.0L523.71 533.0L523.75 545.0L523.77 557.0L523.77 569.0L523.74 581.0L523.68 593.0L523.60 605.0L523.50 617.0L523.36 629.0L523.21 641.0L523.03 653.0L522.82 665.0L522.59 677.0L522.33 689.0L522.05 701.0L521.74 713.0L521.41 725.0L521.05 737.0L520.67 749.0L520.26 761.0L519.83 773.0L519.37 785.0L518.88 797.0L518.38 808.8" stroke-width="1.96"/>
<path d="M515.10 113.0L515.98 125.0L516.83 137.0L517.66 149.0L518.46 161.0L519.25 173.0L520.00 185.0L520.74 197.0L521.45 209.0L522.13 221.0L522.79 233.0L523.43 245.0L524.05 257.0L524.64 269.0L525.20 281.0L525.75 293.0L526.27 305.0L526.76 317.0L527.23 329.0L527.68 341.0L528.10 353.0L528.50 365.0L528.88 377.0L529.23 389.0L529.56 401.0L529.86 413.0L530.14 425.0L530.40 437.0L530.63 449.0L530.84 461.0L531.03 473.0L531.19 485.0L531.32 497.0L531.44 509.0L531.53 521.0L531.59 533.0L531.63 545.0L531.65 557.0L531.64 569.0L531.61 581.0L531.56 593.0L531.48 605.0L531.37 617.0L531.24 629.0L531.08 641.0L530.90 653.0L530.69 665.0L530.46 677.0L530.20 689.0L529.92 701.0L529.61 713.0L529.28 725.0L528.93 737.0L528.54 749.0L528.14 761.0L527.70 773.0L527.25 785.0L526.76 797.0L526.27 808.8" stroke-width="1.96"/>
<path d="M534.19 113.0L535.03 125.0L535.86 137.0L536.66 149.0L537.43 161.0L538.19 173.0L538.92 185.0L539.62 197.0L540.31 209.0L540.97 221.0L541.61 233.0L542.22 245.0L542.81 257.0L543.38 269.0L543.93 281.0L544.45 293.0L544.95 305.0L545.43 317.0L545.88 329.0L546.31 341.0L546.72 353.0L547.10 365.0L547.46 377.0L547.80 389.0L548.12 401.0L548.41 413.0L548.68 425.0L548.93 437.0L549.15 449.0L549.35 461.0L549.53 473.0L549.68 485.0L549.81 497.0L549.92 509.0L550.00 521.0L550.07 533.0L550.10 545.0L550.12 557.0L550.11 569.0L550.08 581.0L550.03 593.0L549.95 605.0L549.84 617.0L549.71 629.0L549.56 641.0L549.38 653.0L549.18 665.0L548.96 677.0L548.71 689.0L548.43 701.0L548.14 713.0L547.81 725.0L547.47 737.0L547.10 749.0L546.70 761.0L546.28 773.0L545.84 785.0L545.37 797.0L544.89 808.8" stroke-width="1.95"/>
<path d="M541.82 113.0L542.66 125.0L543.47 137.0L544.25 149.0L545.02 161.0L545.76 173.0L546.48 185.0L547.18 197.0L547.85 209.0L548.50 221.0L549.13 233.0L549.73 245.0L550.32 257.0L550.88 269.0L551.42 281.0L551.93 293.0L552.42 305.0L552.89 317.0L553.34 329.0L553.76 341.0L554.16 353.0L554.54 365.0L554.90 377.0L555.23 389.0L555.54 401.0L555.83 413.0L556.09 425.0L556.34 437.0L556.56 449.0L556.75 461.0L556.93 473.0L557.08 485.0L557.21 497.0L557.31 509.0L557.40 521.0L557.46 533.0L557.49 545.0L557.51 557.0L557.50 569.0L557.47 581.0L557.41 593.0L557.33 605.0L557.23 617.0L557.10 629.0L556.95 641.0L556.78 653.0L556.58 665.0L556.36 677.0L556.11 689.0L555.84 701.0L555.54 713.0L555.23 725.0L554.88 737.0L554.52 749.0L554.13 761.0L553.72 773.0L553.28 785.0L552.82 797.0L552.34 808.8" stroke-width="1.95"/>
<path d="M549.36 113.0L550.18 125.0L550.97 137.0L551.75 149.0L552.50 161.0L553.23 173.0L553.94 185.0L554.63 197.0L555.29 209.0L555.93 221.0L556.55 233.0L557.15 245.0L557.72 257.0L558.27 269.0L558.80 281.0L559.31 293.0L559.79 305.0L560.26 317.0L560.70 329.0L561.11 341.0L561.51 353.0L561.88 365.0L562.23 377.0L562.56 389.0L562.86 401.0L563.15 413.0L563.41 425.0L563.65 437.0L563.86 449.0L564.06 461.0L564.23 473.0L564.38 485.0L564.50 497.0L564.61 509.0L564.69 521.0L564.75 533.0L564.78 545.0L564.80 557.0L564.79 569.0L564.76 581.0L564.70 593.0L564.62 605.0L564.52 617.0L564.39 629.0L564.24 641.0L564.07 653.0L563.87 665.0L563.65 677.0L563.41 689.0L563.14 701.0L562.85 713.0L562.54 725.0L562.20 737.0L561.84 749.0L561.46 761.0L561.05 773.0L560.62 785.0L560.16 797.0L559.69 808.8" stroke-width="1.94"/>
<path d="M556.58 113.0L557.38 125.0L558.17 137.0L558.94 149.0L559.68 161.0L560.40 173.0L561.10 185.0L561.77 197.0L562.43 209.0L563.06 221.0L563.67 233.0L564.26 245.0L564.82 257.0L565.36 269.0L565.89 281.0L566.39 293.0L566.86 305.0L567.32 317.0L567.75 329.0L568.16 341.0L568.55 353.0L568.92 365.0L569.26 377.0L569.59 389.0L569.89 401.0L570.17 413.0L570.42 425.0L570.66 437.0L570.87 449.0L571.06 461.0L571.23 473.0L571.37 485.0L571.50 497.0L571.60 509.0L571.68 521.0L571.74 533.0L571.77 545.0L571.79 557.0L571.78 569.0L571.75 581.0L571.69 593.0L571.61 605.0L571.51 617.0L571.39 629.0L571.24 641.0L571.07 653.0L570.87 665.0L570.65 677.0L570.41 689.0L570.15 701.0L569.86 713.0L569.55 725.0L569.22 737.0L568.86 749.0L568.48 761.0L568.08 773.0L567.65 785.0L567.20 797.0L566.74 808.8" stroke-width="1.94"/>
<path d="M563.69 113.0L564.49 125.0L565.27 137.0L566.02 149.0L566.75 161.0L567.46 173.0L568.15 185.0L568.81 197.0L569.46 209.0L570.08 221.0L570.68 233.0L571.26 245.0L571.82 257.0L572.35 269.0L572.87 281.0L573.36 293.0L573.83 305.0L574.28 317.0L574.71 329.0L575.11 341.0L575.49 353.0L575.85 365.0L576.19 377.0L576.51 389.0L576.81 401.0L577.08 413.0L577.33 425.0L577.57 437.0L577.77 449.0L577.96 461.0L578.13 473.0L578.27 485.0L578.39 497.0L578.49 509.0L578.57 521.0L578.63 533.0L578.66 545.0L578.68 557.0L578.67 569.0L578.63 581.0L578.58 593.0L578.50 605.0L578.40 617.0L578.28 629.0L578.13 641.0L577.96 653.0L577.77 665.0L577.55 677.0L577.32 689.0L577.06 701.0L576.77 713.0L576.47 725.0L576.14 737.0L575.78 749.0L575.41 761.0L575.01 773.0L574.59 785.0L574.15 797.0L573.69 808.8" stroke-width="1.94"/>
<path d="M580.92 113.0L581.69 125.0L582.44 137.0L583.16 149.0L583.87 161.0L584.55 173.0L585.22 185.0L585.86 197.0L586.48 209.0L587.08 221.0L587.66 233.0L588.22 245.0L588.75 257.0L589.27 269.0L589.77 281.0L590.24 293.0L590.69 305.0L591.12 317.0L591.54 329.0L591.93 341.0L592.29 353.0L592.64 365.0L592.97 377.0L593.28 389.0L593.56 401.0L593.82 413.0L594.07 425.0L594.29 437.0L594.49 449.0L594.67 461.0L594.83 473.0L594.97 485.0L595.08 497.0L595.18 509.0L595.25 521.0L595.31 533.0L595.34 545.0L595.35 557.0L595.34 569.0L595.31 581.0L595.25 593.0L595.18 605.0L595.08 617.0L594.96 629.0L594.81 641.0L594.65 653.0L594.46 665.0L594.25 677.0L594.02 689.0L593.77 701.0L593.50 713.0L593.20 725.0L592.88 737.0L592.54 749.0L592.17 761.0L591.79 773.0L591.38 785.0L590.95 797.0L590.51 808.8" stroke-width="1.93"/>
<path d="M587.21 113.0L587.97 125.0L588.71 137.0L589.42 149.0L590.12 161.0L590.79 173.0L591.45 185.0L592.08 197.0L592.70 209.0L593.29 221.0L593.86 233.0L594.41 245.0L594.94 257.0L595.45 269.0L595.94 281.0L596.41 293.0L596.85 305.0L597.28 317.0L597.68 329.0L598.07 341.0L598.43 353.0L598.77 365.0L599.10 377.0L599.40 389.0L599.68 401.0L599.94 413.0L600.18 425.0L600.40 437.0L600.60 449.0L600.77 461.0L600.93 473.0L601.06 485.0L601.18 497.0L601.27 509.0L601.35 521.0L601.40 533.0L601.43 545.0L601.44 557.0L601.43 569.0L601.40 581.0L601.34 593.0L601.27 605.0L601.17 617.0L601.05 629.0L600.91 641.0L600.75 653.0L600.56 665.0L600.36 677.0L600.13 689.0L599.88 701.0L599.60 713.0L599.31 725.0L598.99 737.0L598.66 749.0L598.30 761.0L597.92 773.0L597.51 785.0L597.09 797.0L596.65 808.8" stroke-width="1.93"/>
<path d="M593.50 113.0L594.25 125.0L594.98 137.0L595.68 149.0L596.37 161.0L597.04 173.0L597.68 185.0L598.31 197.0L598.91 209.0L599.50 221.0L600.06 233.0L600.60 245.0L601.13 257.0L601.63 269.0L602.11 281.0L602.57 293.0L603.01 305.0L603.43 317.0L603.83 329.0L604.21 341.0L604.57 353.0L604.91 365.0L605.22 377.0L605.52 389.0L605.80 401.0L606.05 413.0L606.29 425.0L606.51 437.0L606.70 449.0L606.87 461.0L607.03 473.0L607.16 485.0L607.27 497.0L607.37 509.0L607.44 521.0L607.49 533.0L607.52 545.0L607.53 557.0L607.52 569.0L607.49 581.0L607.43 593.0L607.36 605.0L607.26 617.0L607.14 629.0L607.00 641.0L606.84 653.0L606.66 665.0L606.46 677.0L606.23 689.0L605.98 701.0L605.71 713.0L605.42 725.0L605.11 737.0L604.78 749.0L604.42 761.0L604.05 773.0L603.65 785.0L603.23 797.0L602.80 808.8" stroke-width="1.92"/>
<path d="M600.41 113.0L601.15 125.0L601.86 137.0L602.56 149.0L603.24 161.0L603.89 173.0L604.53 185.0L605.14 197.0L605.74 209.0L606.31 221.0L606.87 233.0L607.40 245.0L607.92 257.0L608.41 269.0L608.89 281.0L609.34 293.0L609.78 305.0L610.19 317.0L610.58 329.0L610.96 341.0L611.31 353.0L611.64 365.0L611.95 377.0L612.25 389.0L612.52 401.0L612.77 413.0L613.00 425.0L613.21 437.0L613.41 449.0L613.58 461.0L613.73 473.0L613.86 485.0L613.97 497.0L614.06 509.0L614.13 521.0L614.18 533.0L614.21 545.0L614.22 557.0L614.21 569.0L614.18 581.0L614.12 593.0L614.05 605.0L613.95 617.0L613.84 629.0L613.70 641.0L613.54 653.0L613.36 665.0L613.16 677.0L612.93 689.0L612.69 701.0L612.42 713.0L612.14 725.0L611.83 737.0L611.50 749.0L611.15 761.0L610.78 773.0L610.39 785.0L609.97 797.0L609.54 808.8" stroke-width="1.92"/>
<path d="M606.60 113.0L607.32 125.0L608.03 137.0L608.72 149.0L609.38 161.0L610.03 173.0L610.66 185.0L611.27 197.0L611.85 209.0L612.42 221.0L612.97 233.0L613.50 245.0L614.00 257.0L614.49 269.0L614.96 281.0L615.41 293.0L615.83 305.0L616.24 317.0L616.63 329.0L617.00 341.0L617.34 353.0L617.67 365.0L617.98 377.0L618.27 389.0L618.54 401.0L618.79 413.0L619.01 425.0L619.22 437.0L619.41 449.0L619.58 461.0L619.73 473.0L619.86 485.0L619.97 497.0L620.06 509.0L620.12 521.0L620.17 533.0L620.20 545.0L620.21 557.0L620.20 569.0L620.17 581.0L620.12 593.0L620.04 605.0L619.95 617.0L619.83 629.0L619.69 641.0L619.54 653.0L619.36 665.0L619.16 677.0L618.94 689.0L618.70 701.0L618.43 713.0L618.15 725.0L617.85 737.0L617.52 749.0L617.17 761.0L616.81 773.0L616.42 785.0L616.01 797.0L615.59 808.8" stroke-width="1.92"/>
<path d="M612.58 113.0L613.30 125.0L613.99 137.0L614.67 149.0L615.33 161.0L615.97 173.0L616.58 185.0L617.18 197.0L617.76 209.0L618.32 221.0L618.86 233.0L619.38 245.0L619.88 257.0L620.36 269.0L620.83 281.0L621.27 293.0L621.69 305.0L622.09 317.0L622.47 329.0L622.84 341.0L623.18 353.0L623.50 365.0L623.81 377.0L624.09 389.0L624.36 401.0L624.60 413.0L624.83 425.0L625.03 437.0L625.22 449.0L625.38 461.0L625.53 473.0L625.66 485.0L625.76 497.0L625.85 509.0L625.92 521.0L625.97 533.0L625.99 545.0L626.00 557.0L625.99 569.0L625.96 581.0L625.91 593.0L625.83 605.0L625.74 617.0L625.62 629.0L625.49 641.0L625.33 653.0L625.16 665.0L624.96 677.0L624.74 689.0L624.50 701.0L624.24 713.0L623.96 725.0L623.66 737.0L623.34 749.0L623.00 761.0L622.64 773.0L622.25 785.0L621.85 797.0L621.43 808.8" stroke-width="1.92"/>
<path d="M624.44 113.0L625.13 125.0L625.81 137.0L626.47 149.0L627.11 161.0L627.73 173.0L628.33 185.0L628.92 197.0L629.48 209.0L630.02 221.0L630.55 233.0L631.06 245.0L631.54 257.0L632.01 269.0L632.46 281.0L632.89 293.0L633.30 305.0L633.69 317.0L634.06 329.0L634.41 341.0L634.75 353.0L635.06 365.0L635.36 377.0L635.63 389.0L635.89 401.0L636.13 413.0L636.35 425.0L636.55 437.0L636.73 449.0L636.89 461.0L637.03 473.0L637.15 485.0L637.26 497.0L637.34 509.0L637.41 521.0L637.45 533.0L637.48 545.0L637.49 557.0L637.48 569.0L637.44 581.0L637.39 593.0L637.32 605.0L637.23 617.0L637.11 629.0L636.98 641.0L636.83 653.0L636.66 665.0L636.46 677.0L636.25 689.0L636.02 701.0L635.76 713.0L635.49 725.0L635.20 737.0L634.88 749.0L634.55 761.0L634.19 773.0L633.82 785.0L633.43 797.0L633.02 808.8" stroke-width="1.91"/>
<path d="M630.62 113.0L631.31 125.0L631.98 137.0L632.63 149.0L633.26 161.0L633.87 173.0L634.46 185.0L635.04 197.0L635.59 209.0L636.13 221.0L636.65 233.0L637.15 245.0L637.63 257.0L638.09 269.0L638.53 281.0L638.95 293.0L639.36 305.0L639.74 317.0L640.11 329.0L640.46 341.0L640.78 353.0L641.09 365.0L641.38 377.0L641.66 389.0L641.91 401.0L642.14 413.0L642.36 425.0L642.55 437.0L642.73 449.0L642.89 461.0L643.03 473.0L643.15 485.0L643.25 497.0L643.34 509.0L643.40 521.0L643.44 533.0L643.47 545.0L643.48 557.0L643.47 569.0L643.43 581.0L643.38 593.0L643.31 605.0L643.22 617.0L643.11 629.0L642.98 641.0L642.83 653.0L642.65 665.0L642.46 677.0L642.25 689.0L642.02 701.0L641.77 713.0L641.50 725.0L641.21 737.0L640.90 749.0L640.57 761.0L640.22 773.0L639.85 785.0L639.47 797.0L639.06 808.8" stroke-width="1.91"/>
<path d="M636.81 113.0L637.48 125.0L638.14 137.0L638.78 149.0L639.41 161.0L640.01 173.0L640.59 185.0L641.16 197.0L641.71 209.0L642.23 221.0L642.74 233.0L643.24 245.0L643.71 257.0L644.16 269.0L644.60 281.0L645.01 293.0L645.41 305.0L645.79 317.0L646.15 329.0L646.50 341.0L646.82 353.0L647.12 365.0L647.41 377.0L647.68 389.0L647.93 401.0L648.16 413.0L648.37 425.0L648.56 437.0L648.74 449.0L648.89 461.0L649.03 473.0L649.15 485.0L649.25 497.0L649.33 509.0L649.39 521.0L649.44 533.0L649.46 545.0L649.47 557.0L649.46 569.0L649.43 581.0L649.37 593.0L649.30 605.0L649.21 617.0L649.10 629.0L648.97 641.0L648.82 653.0L648.65 665.0L648.47 677.0L648.26 689.0L648.03 701.0L647.78 713.0L647.52 725.0L647.23 737.0L646.92 749.0L646.60 761.0L646.25 773.0L645.89 785.0L645.51 797.0L645.11 808.8" stroke-width="1.91"/>
<path d="M642.06 113.0L642.73 125.0L643.38 137.0L644.02 149.0L644.63 161.0L645.23 173.0L645.80 185.0L646.36 197.0L646.90 209.0L647.42 221.0L647.93 233.0L648.41 245.0L648.88 257.0L649.33 269.0L649.76 281.0L650.17 293.0L650.56 305.0L650.94 317.0L651.29 329.0L651.63 341.0L651.95 353.0L652.25 365.0L652.53 377.0L652.80 389.0L653.04 401.0L653.27 413.0L653.48 425.0L653.67 437.0L653.84 449.0L654.00 461.0L654.13 473.0L654.25 485.0L654.35 497.0L654.43 509.0L654.49 521.0L654.53 533.0L654.56 545.0L654.56 557.0L654.55 569.0L654.52 581.0L654.47 593.0L654.40 605.0L654.31 617.0L654.20 629.0L654.07 641.0L653.92 653.0L653.75 665.0L653.57 677.0L653.36 689.0L653.14 701.0L652.89 713.0L652.63 725.0L652.35 737.0L652.04 749.0L651.72 761.0L651.38 773.0L651.02 785.0L650.64 797.0L650.25 808.8" stroke-width="1.90"/>
<path d="M423.48 113.0L424.46 125.0L425.41 137.0L426.34 149.0L427.24 161.0L428.11 173.0L428.96 185.0L429.78 197.0L430.58 209.0L431.35 221.0L432.10 233.0L432.82 245.0L433.51 257.0L434.18 269.0L434.82 281.0L435.43 293.0L436.02 305.0L436.58 317.0L437.12 329.0L437.63 341.0L438.12 353.0L438.58 365.0L439.01 377.0L439.42 389.0L439.80 401.0L440.16 413.0L440.49 425.0L440.80 437.0L441.07 449.0L441.33 461.0L441.55 473.0L441.76 485.0L441.93 497.0L442.08 509.0L442.20 521.0L442.30 533.0L442.37 545.0L442.42 557.0L442.44 569.0L442.43 581.0L442.40 593.0L442.34 605.0L442.25 617.0L442.13 629.0L441.99 641.0L441.82 653.0L441.63 665.0L441.40 677.0L441.15 689.0L440.87 701.0L440.57 713.0L440.23 725.0L439.87 737.0L439.49 749.0L439.07 761.0L438.63 773.0L438.16 785.0L437.67 797.0L437.15 808.8" stroke-width="1.99"/>
<path d="M526.47 113.0L527.33 125.0L528.16 137.0L528.97 149.0L529.76 161.0L530.53 173.0L531.27 185.0L531.98 197.0L532.68 209.0L533.35 221.0L534.00 233.0L534.62 245.0L535.22 257.0L535.80 269.0L536.35 281.0L536.89 293.0L537.39 305.0L537.88 317.0L538.34 329.0L538.77 341.0L539.19 353.0L539.58 365.0L539.95 377.0L540.29 389.0L540.61 401.0L540.91 413.0L541.18 425.0L541.43 437.0L541.66 449.0L541.86 461.0L542.04 473.0L542.20 485.0L542.33 497.0L542.44 509.0L542.53 521.0L542.59 533.0L542.63 545.0L542.65 557.0L542.64 569.0L542.61 581.0L542.56 593.0L542.47 605.0L542.37 617.0L542.24 629.0L542.09 641.0L541.91 653.0L541.70 665.0L541.47 677.0L541.22 689.0L540.95 701.0L540.64 713.0L540.32 725.0L539.97 737.0L539.59 749.0L539.19 761.0L538.77 773.0L538.32 785.0L537.85 797.0L537.36 808.8" stroke-width="1.95"/>
<path d="M573.92 113.0L574.70 125.0L575.46 137.0L576.19 149.0L576.91 161.0L577.60 173.0L578.28 185.0L578.93 197.0L579.56 209.0L580.17 221.0L580.76 233.0L581.32 245.0L581.87 257.0L582.39 269.0L582.90 281.0L583.38 293.0L583.84 305.0L584.28 317.0L584.69 329.0L585.09 341.0L585.46 353.0L585.82 365.0L586.15 377.0L586.46 389.0L586.75 401.0L587.02 413.0L587.26 425.0L587.49 437.0L587.69 449.0L587.88 461.0L588.04 473.0L588.18 485.0L588.30 497.0L588.39 509.0L588.47 521.0L588.53 533.0L588.56 545.0L588.57 557.0L588.56 569.0L588.53 581.0L588.47 593.0L588.40 605.0L588.30 617.0L588.18 629.0L588.03 641.0L587.87 653.0L587.68 665.0L587.46 677.0L587.23 689.0L586.97 701.0L586.70 713.0L586.40 725.0L586.07 737.0L585.73 749.0L585.36 761.0L584.97 773.0L584.55 785.0L584.12 797.0L583.67 808.8" stroke-width="1.93"/>
<path d="M644.64 113.0L645.31 125.0L645.95 137.0L646.58 149.0L647.19 161.0L647.78 173.0L648.36 185.0L648.91 197.0L649.45 209.0L649.97 221.0L650.47 233.0L650.95 245.0L651.41 257.0L651.86 269.0L652.29 281.0L652.70 293.0L653.09 305.0L653.46 317.0L653.81 329.0L654.15 341.0L654.47 353.0L654.76 365.0L655.04 377.0L655.31 389.0L655.55 401.0L655.78 413.0L655.98 425.0L656.17 437.0L656.34 449.0L656.50 461.0L656.63 473.0L656.75 485.0L656.85 497.0L656.93 509.0L656.99 521.0L657.03 533.0L657.05 545.0L657.06 557.0L657.05 569.0L657.02 581.0L656.96 593.0L656.89 605.0L656.81 617.0L656.70 629.0L656.57 641.0L656.42 653.0L656.26 665.0L656.07 677.0L655.87 689.0L655.64 701.0L655.40 713.0L655.14 725.0L654.85 737.0L654.55 749.0L654.23 761.0L653.89 773.0L653.54 785.0L653.16 797.0L652.77 808.8" stroke-width="1.90"/>
</g></g>
<g mask="url(#mFm)"><g shape-rendering="crispEdges" fill="none" stroke="#fff">
<path d="M413.78 113.0L414.77 125.0L415.73 137.0L416.67 149.0L417.58 161.0L418.47 173.0L419.32 185.0L420.16 197.0L420.96 209.0L421.74 221.0L422.50 233.0L423.22 245.0L423.92 257.0L424.60 269.0L425.25 281.0L425.87 293.0L426.47 305.0L427.04 317.0L427.59 329.0L428.10 341.0L428.60 353.0L429.06 365.0L429.50 377.0L429.92 389.0L430.31 401.0L430.67 413.0L431.00 425.0L431.31 437.0L431.60 449.0L431.86 461.0L432.09 473.0L432.29 485.0L432.47 497.0L432.63 509.0L432.75 521.0L432.85 533.0L432.93 545.0L432.98 557.0L433.00 569.0L433.00 581.0L432.97 593.0L432.91 605.0L432.82 617.0L432.71 629.0L432.57 641.0L432.40 653.0L432.21 665.0L431.98 677.0L431.73 689.0L431.46 701.0L431.15 713.0L430.82 725.0L430.46 737.0L430.07 749.0L429.66 761.0L429.21 773.0L428.75 785.0L428.25 797.0L427.73 808.8" stroke-width="2.00"/>
<path d="M427.61 113.0L428.59 125.0L429.53 137.0L430.45 149.0L431.35 161.0L432.22 173.0L433.06 185.0L433.88 197.0L434.68 209.0L435.44 221.0L436.18 233.0L436.90 245.0L437.59 257.0L438.25 269.0L438.89 281.0L439.50 293.0L440.09 305.0L440.65 317.0L441.18 329.0L441.69 341.0L442.17 353.0L442.63 365.0L443.06 377.0L443.47 389.0L443.85 401.0L444.20 413.0L444.53 425.0L444.83 437.0L445.11 449.0L445.36 461.0L445.58 473.0L445.78 485.0L445.96 497.0L446.10 509.0L446.23 521.0L446.32 533.0L446.39 545.0L446.44 557.0L446.46 569.0L446.45 581.0L446.41 593.0L446.35 605.0L446.26 617.0L446.15 629.0L446.00 641.0L445.83 653.0L445.64 665.0L445.41 677.0L445.16 689.0L444.88 701.0L444.58 713.0L444.24 725.0L443.88 737.0L443.50 749.0L443.08 761.0L442.64 773.0L442.17 785.0L441.68 797.0L441.16 808.8" stroke-width="1.99"/>
<path d="M437.14 113.0L438.10 125.0L439.04 137.0L439.95 149.0L440.83 161.0L441.69 173.0L442.53 185.0L443.34 197.0L444.12 209.0L444.88 221.0L445.61 233.0L446.32 245.0L447.00 257.0L447.65 269.0L448.28 281.0L448.89 293.0L449.47 305.0L450.02 317.0L450.55 329.0L451.05 341.0L451.53 353.0L451.98 365.0L452.40 377.0L452.80 389.0L453.18 401.0L453.52 413.0L453.85 425.0L454.14 437.0L454.42 449.0L454.66 461.0L454.88 473.0L455.08 485.0L455.25 497.0L455.39 509.0L455.51 521.0L455.60 533.0L455.67 545.0L455.71 557.0L455.72 569.0L455.71 581.0L455.68 593.0L455.61 605.0L455.52 617.0L455.40 629.0L455.26 641.0L455.09 653.0L454.89 665.0L454.66 677.0L454.41 689.0L454.13 701.0L453.83 713.0L453.49 725.0L453.13 737.0L452.75 749.0L452.33 761.0L451.89 773.0L451.42 785.0L450.93 797.0L450.42 808.8" stroke-width="1.99"/>
<path d="M446.56 113.0L447.51 125.0L448.44 137.0L449.34 149.0L450.21 161.0L451.07 173.0L451.89 185.0L452.69 197.0L453.46 209.0L454.21 221.0L454.94 233.0L455.64 245.0L456.31 257.0L456.96 269.0L457.58 281.0L458.18 293.0L458.75 305.0L459.29 317.0L459.81 329.0L460.31 341.0L460.78 353.0L461.22 365.0L461.64 377.0L462.03 389.0L462.40 401.0L462.75 413.0L463.06 425.0L463.36 437.0L463.62 449.0L463.86 461.0L464.08 473.0L464.27 485.0L464.44 497.0L464.58 509.0L464.69 521.0L464.78 533.0L464.84 545.0L464.88 557.0L464.89 569.0L464.88 581.0L464.84 593.0L464.77 605.0L464.68 617.0L464.56 629.0L464.41 641.0L464.24 653.0L464.04 665.0L463.82 677.0L463.56 689.0L463.28 701.0L462.98 713.0L462.64 725.0L462.28 737.0L461.90 749.0L461.48 761.0L461.04 773.0L460.58 785.0L460.09 797.0L459.57 808.8" stroke-width="1.98"/>
<path d="M455.88 113.0L456.82 125.0L457.73 137.0L458.63 149.0L459.49 161.0L460.33 173.0L461.15 185.0L461.94 197.0L462.71 209.0L463.45 221.0L464.16 233.0L464.85 245.0L465.52 257.0L466.16 269.0L466.77 281.0L467.36 293.0L467.92 305.0L468.46 317.0L468.98 329.0L469.46 341.0L469.93 353.0L470.37 365.0L470.78 377.0L471.17 389.0L471.53 401.0L471.87 413.0L472.18 425.0L472.47 437.0L472.73 449.0L472.97 461.0L473.18 473.0L473.36 485.0L473.52 497.0L473.66 509.0L473.77 521.0L473.86 533.0L473.92 545.0L473.95 557.0L473.96 569.0L473.95 581.0L473.91 593.0L473.84 605.0L473.74 617.0L473.62 629.0L473.47 641.0L473.30 653.0L473.10 665.0L472.87 677.0L472.62 689.0L472.34 701.0L472.03 713.0L471.70 725.0L471.34 737.0L470.95 749.0L470.54 761.0L470.10 773.0L469.63 785.0L469.14 797.0L468.63 808.8" stroke-width="1.98"/>
<path d="M464.99 113.0L465.92 125.0L466.83 137.0L467.71 149.0L468.56 161.0L469.40 173.0L470.20 185.0L470.99 197.0L471.74 209.0L472.47 221.0L473.18 233.0L473.86 245.0L474.52 257.0L475.15 269.0L475.76 281.0L476.34 293.0L476.90 305.0L477.43 317.0L477.94 329.0L478.42 341.0L478.88 353.0L479.31 365.0L479.72 377.0L480.10 389.0L480.46 401.0L480.79 413.0L481.10 425.0L481.38 437.0L481.64 449.0L481.87 461.0L482.07 473.0L482.26 485.0L482.41 497.0L482.55 509.0L482.65 521.0L482.74 533.0L482.79 545.0L482.83 557.0L482.83 569.0L482.82 581.0L482.77 593.0L482.70 605.0L482.60 617.0L482.48 629.0L482.33 641.0L482.16 653.0L481.95 665.0L481.72 677.0L481.47 689.0L481.19 701.0L480.88 713.0L480.55 725.0L480.19 737.0L479.80 749.0L479.39 761.0L478.96 773.0L478.49 785.0L478.00 797.0L477.49 808.8" stroke-width="1.98"/>
<path d="M478.50 113.0L479.42 125.0L480.31 137.0L481.18 149.0L482.02 161.0L482.84 173.0L483.63 185.0L484.40 197.0L485.14 209.0L485.86 221.0L486.56 233.0L487.23 245.0L487.87 257.0L488.49 269.0L489.09 281.0L489.66 293.0L490.21 305.0L490.73 317.0L491.23 329.0L491.70 341.0L492.15 353.0L492.57 365.0L492.97 377.0L493.35 389.0L493.69 401.0L494.02 413.0L494.32 425.0L494.59 437.0L494.84 449.0L495.07 461.0L495.27 473.0L495.45 485.0L495.60 497.0L495.73 509.0L495.83 521.0L495.91 533.0L495.96 545.0L495.99 557.0L495.99 569.0L495.97 581.0L495.92 593.0L495.85 605.0L495.75 617.0L495.62 629.0L495.47 641.0L495.29 653.0L495.09 665.0L494.86 677.0L494.61 689.0L494.32 701.0L494.02 713.0L493.68 725.0L493.32 737.0L492.94 749.0L492.53 761.0L492.09 773.0L491.63 785.0L491.14 797.0L490.63 808.8" stroke-width="1.97"/>
<path d="M487.40 113.0L488.31 125.0L489.19 137.0L490.05 149.0L490.89 161.0L491.69 173.0L492.48 185.0L493.24 197.0L493.98 209.0L494.69 221.0L495.37 233.0L496.04 245.0L496.67 257.0L497.29 269.0L497.88 281.0L498.44 293.0L498.98 305.0L499.50 317.0L499.99 329.0L500.45 341.0L500.90 353.0L501.31 365.0L501.71 377.0L502.08 389.0L502.42 401.0L502.74 413.0L503.03 425.0L503.30 437.0L503.55 449.0L503.77 461.0L503.97 473.0L504.14 485.0L504.29 497.0L504.41 509.0L504.51 521.0L504.59 533.0L504.64 545.0L504.66 557.0L504.66 569.0L504.64 581.0L504.59 593.0L504.51 605.0L504.41 617.0L504.29 629.0L504.13 641.0L503.95 653.0L503.75 665.0L503.52 677.0L503.26 689.0L502.98 701.0L502.67 713.0L502.34 725.0L501.98 737.0L501.60 749.0L501.19 761.0L500.75 773.0L500.29 785.0L499.80 797.0L499.30 808.8" stroke-width="1.97"/>
<path d="M495.69 113.0L496.59 125.0L497.46 137.0L498.31 149.0L499.14 161.0L499.94 173.0L500.72 185.0L501.47 197.0L502.20 209.0L502.90 221.0L503.58 233.0L504.24 245.0L504.87 257.0L505.47 269.0L506.06 281.0L506.61 293.0L507.15 305.0L507.66 317.0L508.14 329.0L508.60 341.0L509.04 353.0L509.45 365.0L509.84 377.0L510.20 389.0L510.54 401.0L510.86 413.0L511.15 425.0L511.41 437.0L511.66 449.0L511.87 461.0L512.07 473.0L512.24 485.0L512.38 497.0L512.50 509.0L512.60 521.0L512.67 533.0L512.72 545.0L512.74 557.0L512.74 569.0L512.71 581.0L512.66 593.0L512.58 605.0L512.48 617.0L512.35 629.0L512.20 641.0L512.02 653.0L511.81 665.0L511.58 677.0L511.32 689.0L511.04 701.0L510.73 713.0L510.40 725.0L510.04 737.0L509.66 749.0L509.25 761.0L508.82 773.0L508.35 785.0L507.87 797.0L507.37 808.8" stroke-width="1.96"/>
<path d="M503.98 113.0L504.87 125.0L505.73 137.0L506.57 149.0L507.39 161.0L508.18 173.0L508.95 185.0L509.70 197.0L510.42 209.0L511.11 221.0L511.79 233.0L512.44 245.0L513.06 257.0L513.66 269.0L514.23 281.0L514.79 293.0L515.31 305.0L515.82 317.0L516.30 329.0L516.75 341.0L517.18 353.0L517.59 365.0L517.97 377.0L518.33 389.0L518.67 401.0L518.98 413.0L519.26 425.0L519.52 437.0L519.76 449.0L519.98 461.0L520.17 473.0L520.33 485.0L520.47 497.0L520.59 509.0L520.68 521.0L520.75 533.0L520.80 545.0L520.82 557.0L520.81 569.0L520.79 581.0L520.73 593.0L520.65 605.0L520.55 617.0L520.42 629.0L520.26 641.0L520.08 653.0L519.87 665.0L519.64 677.0L519.39 689.0L519.10 701.0L518.80 713.0L518.46 725.0L518.11 737.0L517.72 749.0L517.31 761.0L516.88 773.0L516.42 785.0L515.94 797.0L515.43 808.8" stroke-width="1.96"/>
<path d="M512.06 113.0L512.94 125.0L513.80 137.0L514.63 149.0L515.44 161.0L516.23 173.0L516.99 185.0L517.72 197.0L518.44 209.0L519.12 221.0L519.79 233.0L520.43 245.0L521.05 257.0L521.64 269.0L522.21 281.0L522.76 293.0L523.28 305.0L523.78 317.0L524.25 329.0L524.70 341.0L525.12 353.0L525.53 365.0L525.90 377.0L526.26 389.0L526.59 401.0L526.89 413.0L527.17 425.0L527.43 437.0L527.67 449.0L527.88 461.0L528.06 473.0L528.23 485.0L528.36 497.0L528.48 509.0L528.57 521.0L528.63 533.0L528.68 545.0L528.70 557.0L528.69 569.0L528.66 581.0L528.60 593.0L528.52 605.0L528.42 617.0L528.28 629.0L528.13 641.0L527.95 653.0L527.74 665.0L527.51 677.0L527.25 689.0L526.97 701.0L526.66 713.0L526.33 725.0L525.97 737.0L525.59 749.0L525.18 761.0L524.75 773.0L524.29 785.0L523.80 797.0L523.30 808.8" stroke-width="1.96"/>
<path d="M531.13 113.0L531.98 125.0L532.81 137.0L533.61 149.0L534.39 161.0L535.15 173.0L535.88 185.0L536.59 197.0L537.28 209.0L537.95 221.0L538.59 233.0L539.21 245.0L539.80 257.0L540.38 269.0L540.92 281.0L541.45 293.0L541.95 305.0L542.43 317.0L542.89 329.0L543.32 341.0L543.73 353.0L544.12 365.0L544.48 377.0L544.82 389.0L545.14 401.0L545.44 413.0L545.71 425.0L545.95 437.0L546.18 449.0L546.38 461.0L546.56 473.0L546.71 485.0L546.85 497.0L546.95 509.0L547.04 521.0L547.10 533.0L547.14 545.0L547.16 557.0L547.15 569.0L547.12 581.0L547.06 593.0L546.98 605.0L546.88 617.0L546.75 629.0L546.60 641.0L546.42 653.0L546.22 665.0L545.99 677.0L545.74 689.0L545.46 701.0L545.16 713.0L544.84 725.0L544.49 737.0L544.12 749.0L543.72 761.0L543.30 773.0L542.86 785.0L542.39 797.0L541.90 808.8" stroke-width="1.95"/>
<path d="M538.76 113.0L539.60 125.0L540.41 137.0L541.21 149.0L541.97 161.0L542.72 173.0L543.44 185.0L544.15 197.0L544.82 209.0L545.48 221.0L546.11 233.0L546.72 245.0L547.31 257.0L547.87 269.0L548.41 281.0L548.93 293.0L549.42 305.0L549.90 317.0L550.35 329.0L550.77 341.0L551.18 353.0L551.56 365.0L551.91 377.0L552.25 389.0L552.56 401.0L552.85 413.0L553.12 425.0L553.36 437.0L553.58 449.0L553.78 461.0L553.96 473.0L554.11 485.0L554.24 497.0L554.35 509.0L554.43 521.0L554.49 533.0L554.53 545.0L554.54 557.0L554.54 569.0L554.50 581.0L554.45 593.0L554.37 605.0L554.27 617.0L554.14 629.0L553.99 641.0L553.81 653.0L553.61 665.0L553.39 677.0L553.14 689.0L552.87 701.0L552.57 713.0L552.25 725.0L551.91 737.0L551.54 749.0L551.15 761.0L550.73 773.0L550.29 785.0L549.83 797.0L549.35 808.8" stroke-width="1.95"/>
<path d="M546.29 113.0L547.12 125.0L547.92 137.0L548.70 149.0L549.46 161.0L550.19 173.0L550.90 185.0L551.59 197.0L552.26 209.0L552.91 221.0L553.53 233.0L554.13 245.0L554.71 257.0L555.26 269.0L555.80 281.0L556.31 293.0L556.79 305.0L557.26 317.0L557.70 329.0L558.12 341.0L558.52 353.0L558.89 365.0L559.25 377.0L559.58 389.0L559.88 401.0L560.17 413.0L560.43 425.0L560.67 437.0L560.89 449.0L561.08 461.0L561.26 473.0L561.40 485.0L561.53 497.0L561.64 509.0L561.72 521.0L561.78 533.0L561.82 545.0L561.83 557.0L561.82 569.0L561.79 581.0L561.73 593.0L561.66 605.0L561.55 617.0L561.43 629.0L561.28 641.0L561.10 653.0L560.90 665.0L560.68 677.0L560.44 689.0L560.17 701.0L559.88 713.0L559.56 725.0L559.22 737.0L558.86 749.0L558.47 761.0L558.06 773.0L557.63 785.0L557.17 797.0L556.70 808.8" stroke-width="1.94"/>
<path d="M553.51 113.0L554.32 125.0L555.11 137.0L555.88 149.0L556.63 161.0L557.35 173.0L558.06 185.0L558.74 197.0L559.40 209.0L560.03 221.0L560.65 233.0L561.24 245.0L561.81 257.0L562.35 269.0L562.88 281.0L563.38 293.0L563.86 305.0L564.32 317.0L564.75 329.0L565.17 341.0L565.56 353.0L565.93 365.0L566.28 377.0L566.60 389.0L566.90 401.0L567.18 413.0L567.44 425.0L567.68 437.0L567.89 449.0L568.08 461.0L568.25 473.0L568.40 485.0L568.53 497.0L568.63 509.0L568.71 521.0L568.77 533.0L568.80 545.0L568.82 557.0L568.81 569.0L568.78 581.0L568.72 593.0L568.64 605.0L568.54 617.0L568.42 629.0L568.27 641.0L568.09 653.0L567.90 665.0L567.68 677.0L567.44 689.0L567.17 701.0L566.89 713.0L566.57 725.0L566.24 737.0L565.88 749.0L565.50 761.0L565.09 773.0L564.66 785.0L564.21 797.0L563.75 808.8" stroke-width="1.94"/>
<path d="M560.63 113.0L561.43 125.0L562.21 137.0L562.96 149.0L563.70 161.0L564.42 173.0L565.11 185.0L565.78 197.0L566.43 209.0L567.05 221.0L567.66 233.0L568.24 245.0L568.80 257.0L569.34 269.0L569.86 281.0L570.35 293.0L570.83 305.0L571.28 317.0L571.71 329.0L572.11 341.0L572.50 353.0L572.86 365.0L573.21 377.0L573.53 389.0L573.82 401.0L574.10 413.0L574.35 425.0L574.59 437.0L574.80 449.0L574.99 461.0L575.15 473.0L575.30 485.0L575.42 497.0L575.52 509.0L575.60 521.0L575.66 533.0L575.69 545.0L575.70 557.0L575.70 569.0L575.66 581.0L575.61 593.0L575.53 605.0L575.43 617.0L575.31 629.0L575.16 641.0L574.99 653.0L574.79 665.0L574.58 677.0L574.34 689.0L574.08 701.0L573.79 713.0L573.48 725.0L573.15 737.0L572.80 749.0L572.42 761.0L572.02 773.0L571.60 785.0L571.15 797.0L570.69 808.8" stroke-width="1.94"/>
<path d="M577.85 113.0L578.62 125.0L579.37 137.0L580.10 149.0L580.81 161.0L581.50 173.0L582.17 185.0L582.82 197.0L583.44 209.0L584.05 221.0L584.63 233.0L585.19 245.0L585.73 257.0L586.25 269.0L586.75 281.0L587.23 293.0L587.68 305.0L588.12 317.0L588.53 329.0L588.93 341.0L589.30 353.0L589.65 365.0L589.98 377.0L590.28 389.0L590.57 401.0L590.84 413.0L591.08 425.0L591.30 437.0L591.51 449.0L591.69 461.0L591.85 473.0L591.99 485.0L592.10 497.0L592.20 509.0L592.28 521.0L592.33 533.0L592.36 545.0L592.37 557.0L592.36 569.0L592.33 581.0L592.28 593.0L592.20 605.0L592.10 617.0L591.98 629.0L591.84 641.0L591.67 653.0L591.48 665.0L591.27 677.0L591.04 689.0L590.79 701.0L590.51 713.0L590.21 725.0L589.89 737.0L589.55 749.0L589.18 761.0L588.79 773.0L588.38 785.0L587.95 797.0L587.51 808.8" stroke-width="1.93"/>
<path d="M584.14 113.0L584.90 125.0L585.64 137.0L586.36 149.0L587.06 161.0L587.74 173.0L588.40 185.0L589.04 197.0L589.66 209.0L590.25 221.0L590.83 233.0L591.38 245.0L591.92 257.0L592.43 269.0L592.92 281.0L593.39 293.0L593.84 305.0L594.27 317.0L594.68 329.0L595.07 341.0L595.43 353.0L595.78 365.0L596.10 377.0L596.41 389.0L596.69 401.0L596.95 413.0L597.19 425.0L597.41 437.0L597.61 449.0L597.79 461.0L597.95 473.0L598.08 485.0L598.20 497.0L598.29 509.0L598.37 521.0L598.42 533.0L598.45 545.0L598.46 557.0L598.45 569.0L598.42 581.0L598.37 593.0L598.29 605.0L598.19 617.0L598.07 629.0L597.93 641.0L597.77 653.0L597.58 665.0L597.37 677.0L597.14 689.0L596.89 701.0L596.62 713.0L596.32 725.0L596.01 737.0L595.67 749.0L595.30 761.0L594.92 773.0L594.52 785.0L594.09 797.0L593.65 808.8" stroke-width="1.93"/>
<path d="M590.42 113.0L591.18 125.0L591.91 137.0L592.62 149.0L593.31 161.0L593.98 173.0L594.63 185.0L595.26 197.0L595.87 209.0L596.46 221.0L597.03 233.0L597.57 245.0L598.10 257.0L598.61 269.0L599.09 281.0L599.56 293.0L600.00 305.0L600.42 317.0L600.82 329.0L601.21 341.0L601.57 353.0L601.91 365.0L602.23 377.0L602.53 389.0L602.81 401.0L603.06 413.0L603.30 425.0L603.52 437.0L603.71 449.0L603.89 461.0L604.04 473.0L604.18 485.0L604.29 497.0L604.39 509.0L604.46 521.0L604.51 533.0L604.54 545.0L604.55 557.0L604.54 569.0L604.51 581.0L604.46 593.0L604.38 605.0L604.28 617.0L604.16 629.0L604.02 641.0L603.86 653.0L603.68 665.0L603.47 677.0L603.24 689.0L603.00 701.0L602.73 713.0L602.43 725.0L602.12 737.0L601.78 749.0L601.43 761.0L601.05 773.0L600.65 785.0L600.23 797.0L599.79 808.8" stroke-width="1.92"/>
<path d="M597.33 113.0L598.07 125.0L598.80 137.0L599.50 149.0L600.18 161.0L600.84 173.0L601.48 185.0L602.10 197.0L602.70 209.0L603.28 221.0L603.84 233.0L604.37 245.0L604.89 257.0L605.39 269.0L605.87 281.0L606.32 293.0L606.76 305.0L607.18 317.0L607.57 329.0L607.95 341.0L608.31 353.0L608.64 365.0L608.96 377.0L609.25 389.0L609.52 401.0L609.78 413.0L610.01 425.0L610.23 437.0L610.42 449.0L610.59 461.0L610.74 473.0L610.88 485.0L610.99 497.0L611.08 509.0L611.15 521.0L611.20 533.0L611.23 545.0L611.24 557.0L611.23 569.0L611.20 581.0L611.14 593.0L611.07 605.0L610.97 617.0L610.85 629.0L610.72 641.0L610.56 653.0L610.37 665.0L610.17 677.0L609.95 689.0L609.70 701.0L609.43 713.0L609.15 725.0L608.84 737.0L608.51 749.0L608.15 761.0L607.78 773.0L607.38 785.0L606.97 797.0L606.54 808.8" stroke-width="1.92"/>
<path d="M603.52 113.0L604.25 125.0L604.96 137.0L605.65 149.0L606.32 161.0L606.98 173.0L607.61 185.0L608.22 197.0L608.81 209.0L609.38 221.0L609.93 233.0L610.46 245.0L610.97 257.0L611.46 269.0L611.94 281.0L612.39 293.0L612.82 305.0L613.23 317.0L613.62 329.0L613.99 341.0L614.34 353.0L614.67 365.0L614.98 377.0L615.27 389.0L615.54 401.0L615.79 413.0L616.02 425.0L616.23 437.0L616.42 449.0L616.59 461.0L616.74 473.0L616.87 485.0L616.98 497.0L617.07 509.0L617.14 521.0L617.19 533.0L617.22 545.0L617.23 557.0L617.22 569.0L617.19 581.0L617.13 593.0L617.06 605.0L616.96 617.0L616.85 629.0L616.71 641.0L616.55 653.0L616.37 665.0L616.17 677.0L615.95 689.0L615.71 701.0L615.44 713.0L615.16 725.0L614.85 737.0L614.52 749.0L614.18 761.0L613.81 773.0L613.42 785.0L613.00 797.0L612.58 808.8" stroke-width="1.92"/>
<path d="M609.50 113.0L610.22 125.0L610.92 137.0L611.60 149.0L612.27 161.0L612.91 173.0L613.53 185.0L614.13 197.0L614.72 209.0L615.28 221.0L615.83 233.0L616.35 245.0L616.85 257.0L617.34 269.0L617.80 281.0L618.25 293.0L618.67 305.0L619.08 317.0L619.46 329.0L619.83 341.0L620.17 353.0L620.50 365.0L620.80 377.0L621.09 389.0L621.36 401.0L621.60 413.0L621.83 425.0L622.04 437.0L622.23 449.0L622.39 461.0L622.54 473.0L622.67 485.0L622.78 497.0L622.86 509.0L622.93 521.0L622.98 533.0L623.01 545.0L623.02 557.0L623.01 569.0L622.98 581.0L622.92 593.0L622.85 605.0L622.75 617.0L622.64 629.0L622.50 641.0L622.35 653.0L622.17 665.0L621.97 677.0L621.75 689.0L621.51 701.0L621.25 713.0L620.97 725.0L620.67 737.0L620.34 749.0L620.00 761.0L619.63 773.0L619.25 785.0L618.84 797.0L618.42 808.8" stroke-width="1.92"/>
<path d="M621.35 113.0L622.05 125.0L622.74 137.0L623.40 149.0L624.05 161.0L624.67 173.0L625.28 185.0L625.86 197.0L626.43 209.0L626.98 221.0L627.51 233.0L628.02 245.0L628.51 257.0L628.98 269.0L629.43 281.0L629.87 293.0L630.28 305.0L630.67 317.0L631.05 329.0L631.40 341.0L631.74 353.0L632.06 365.0L632.35 377.0L632.63 389.0L632.89 401.0L633.13 413.0L633.35 425.0L633.55 437.0L633.73 449.0L633.89 461.0L634.04 473.0L634.16 485.0L634.27 497.0L634.35 509.0L634.42 521.0L634.46 533.0L634.49 545.0L634.50 557.0L634.49 569.0L634.46 581.0L634.40 593.0L634.33 605.0L634.24 617.0L634.12 629.0L633.99 641.0L633.84 653.0L633.66 665.0L633.47 677.0L633.25 689.0L633.02 701.0L632.77 713.0L632.49 725.0L632.19 737.0L631.88 749.0L631.54 761.0L631.19 773.0L630.81 785.0L630.41 797.0L630.00 808.8" stroke-width="1.91"/>
<path d="M627.54 113.0L628.23 125.0L628.90 137.0L629.56 149.0L630.19 161.0L630.81 173.0L631.41 185.0L631.98 197.0L632.54 209.0L633.08 221.0L633.61 233.0L634.11 245.0L634.59 257.0L635.06 269.0L635.50 281.0L635.93 293.0L636.33 305.0L636.72 317.0L637.09 329.0L637.44 341.0L637.77 353.0L638.08 365.0L638.38 377.0L638.65 389.0L638.91 401.0L639.14 413.0L639.36 425.0L639.56 437.0L639.74 449.0L639.90 461.0L640.04 473.0L640.16 485.0L640.26 497.0L640.34 509.0L640.41 521.0L640.45 533.0L640.48 545.0L640.49 557.0L640.48 569.0L640.44 581.0L640.39 593.0L640.32 605.0L640.23 617.0L640.12 629.0L639.99 641.0L639.83 653.0L639.66 665.0L639.47 677.0L639.26 689.0L639.03 701.0L638.77 713.0L638.50 725.0L638.21 737.0L637.90 749.0L637.57 761.0L637.22 773.0L636.84 785.0L636.45 797.0L636.05 808.8" stroke-width="1.91"/>
<path d="M633.72 113.0L634.40 125.0L635.07 137.0L635.71 149.0L636.34 161.0L636.94 173.0L637.53 185.0L638.10 197.0L638.65 209.0L639.19 221.0L639.70 233.0L640.20 245.0L640.67 257.0L641.13 269.0L641.57 281.0L641.99 293.0L642.39 305.0L642.77 317.0L643.14 329.0L643.48 341.0L643.81 353.0L644.11 365.0L644.40 377.0L644.67 389.0L644.92 401.0L645.16 413.0L645.37 425.0L645.56 437.0L645.74 449.0L645.90 461.0L646.03 473.0L646.15 485.0L646.26 497.0L646.34 509.0L646.40 521.0L646.45 533.0L646.47 545.0L646.48 557.0L646.47 569.0L646.43 581.0L646.38 593.0L646.31 605.0L646.22 617.0L646.11 629.0L645.98 641.0L645.83 653.0L645.66 665.0L645.47 677.0L645.26 689.0L645.03 701.0L644.78 713.0L644.51 725.0L644.23 737.0L643.92 749.0L643.59 761.0L643.24 773.0L642.88 785.0L642.49 797.0L642.09 808.8" stroke-width="1.91"/>
<path d="M638.98 113.0L639.65 125.0L640.30 137.0L640.94 149.0L641.56 161.0L642.16 173.0L642.74 185.0L643.30 197.0L643.85 209.0L644.37 221.0L644.88 233.0L645.37 245.0L645.84 257.0L646.29 269.0L646.73 281.0L647.14 293.0L647.54 305.0L647.91 317.0L648.27 329.0L648.61 341.0L648.93 353.0L649.24 365.0L649.52 377.0L649.79 389.0L650.04 401.0L650.27 413.0L650.48 425.0L650.67 437.0L650.84 449.0L651.00 461.0L651.13 473.0L651.25 485.0L651.35 497.0L651.43 509.0L651.49 521.0L651.54 533.0L651.56 545.0L651.57 557.0L651.56 569.0L651.53 581.0L651.47 593.0L651.40 605.0L651.31 617.0L651.20 629.0L651.07 641.0L650.93 653.0L650.76 665.0L650.57 677.0L650.36 689.0L650.14 701.0L649.89 713.0L649.62 725.0L649.34 737.0L649.04 749.0L648.71 761.0L648.37 773.0L648.01 785.0L647.62 797.0L647.23 808.8" stroke-width="1.90"/>
<path d="M520.48 113.0L521.35 125.0L522.20 137.0L523.02 149.0L523.81 161.0L524.59 173.0L525.34 185.0L526.06 197.0L526.77 209.0L527.45 221.0L528.10 233.0L528.73 245.0L529.34 257.0L529.92 269.0L530.49 281.0L531.02 293.0L531.54 305.0L532.03 317.0L532.49 329.0L532.93 341.0L533.35 353.0L533.75 365.0L534.12 377.0L534.47 389.0L534.79 401.0L535.09 413.0L535.37 425.0L535.62 437.0L535.85 449.0L536.06 461.0L536.24 473.0L536.40 485.0L536.54 497.0L536.65 509.0L536.74 521.0L536.80 533.0L536.84 545.0L536.86 557.0L536.85 569.0L536.82 581.0L536.77 593.0L536.68 605.0L536.58 617.0L536.45 629.0L536.29 641.0L536.11 653.0L535.91 665.0L535.68 677.0L535.42 689.0L535.14 701.0L534.84 713.0L534.51 725.0L534.15 737.0L533.78 749.0L533.37 761.0L532.94 773.0L532.49 785.0L532.01 797.0L531.52 808.8" stroke-width="1.95"/>
<path d="M567.73 113.0L568.52 125.0L569.29 137.0L570.03 149.0L570.76 161.0L571.46 173.0L572.15 185.0L572.81 197.0L573.45 209.0L574.06 221.0L574.66 233.0L575.23 245.0L575.79 257.0L576.32 269.0L576.83 281.0L577.31 293.0L577.78 305.0L578.22 317.0L578.65 329.0L579.05 341.0L579.43 353.0L579.79 365.0L580.12 377.0L580.44 389.0L580.73 401.0L581.00 413.0L581.25 425.0L581.48 437.0L581.69 449.0L581.88 461.0L582.04 473.0L582.18 485.0L582.30 497.0L582.40 509.0L582.48 521.0L582.53 533.0L582.57 545.0L582.58 557.0L582.57 569.0L582.54 581.0L582.48 593.0L582.41 605.0L582.31 617.0L582.18 629.0L582.04 641.0L581.87 653.0L581.68 665.0L581.47 677.0L581.23 689.0L580.97 701.0L580.69 713.0L580.38 725.0L580.06 737.0L579.71 749.0L579.34 761.0L578.94 773.0L578.52 785.0L578.08 797.0L577.63 808.8" stroke-width="1.93"/>
<path d="M615.78 113.0L616.49 125.0L617.18 137.0L617.86 149.0L618.51 161.0L619.14 173.0L619.76 185.0L620.35 197.0L620.93 209.0L621.48 221.0L622.02 233.0L622.53 245.0L623.03 257.0L623.51 269.0L623.97 281.0L624.40 293.0L624.82 305.0L625.22 317.0L625.60 329.0L625.96 341.0L626.30 353.0L626.62 365.0L626.93 377.0L627.21 389.0L627.47 401.0L627.71 413.0L627.94 425.0L628.14 437.0L628.32 449.0L628.49 461.0L628.63 473.0L628.76 485.0L628.87 497.0L628.95 509.0L629.02 521.0L629.07 533.0L629.10 545.0L629.10 557.0L629.09 569.0L629.06 581.0L629.01 593.0L628.93 605.0L628.84 617.0L628.73 629.0L628.59 641.0L628.44 653.0L628.26 665.0L628.06 677.0L627.85 689.0L627.61 701.0L627.35 713.0L627.07 725.0L626.78 737.0L626.46 749.0L626.12 761.0L625.76 773.0L625.38 785.0L624.97 797.0L624.56 808.8" stroke-width="1.91"/>
<path d="M650.15 113.0L650.81 125.0L651.45 137.0L652.07 149.0L652.68 161.0L653.26 173.0L653.83 185.0L654.38 197.0L654.91 209.0L655.43 221.0L655.92 233.0L656.40 245.0L656.86 257.0L657.30 269.0L657.73 281.0L658.13 293.0L658.52 305.0L658.89 317.0L659.24 329.0L659.57 341.0L659.88 353.0L660.18 365.0L660.46 377.0L660.72 389.0L660.96 401.0L661.18 413.0L661.39 425.0L661.58 437.0L661.75 449.0L661.90 461.0L662.03 473.0L662.15 485.0L662.24 497.0L662.32 509.0L662.38 521.0L662.42 533.0L662.45 545.0L662.45 557.0L662.44 569.0L662.41 581.0L662.36 593.0L662.29 605.0L662.20 617.0L662.09 629.0L661.97 641.0L661.82 653.0L661.65 665.0L661.47 677.0L661.27 689.0L661.05 701.0L660.80 713.0L660.54 725.0L660.26 737.0L659.97 749.0L659.65 761.0L659.31 773.0L658.96 785.0L658.58 797.0L658.19 808.8" stroke-width="1.90"/>
</g></g>
</g>
<g shape-rendering="crispEdges" fill="#e90000">
<rect x="305.0" y="459" width="371.0" height="4"/>
<rect x="348.80" y="113.0" width="3.4" height="695.8"/>
<rect x="395.50" y="113.0" width="3.4" height="695.8"/>
<rect x="441.90" y="113.0" width="3.4" height="695.8"/>
<rect x="489.70" y="113.0" width="3.4" height="695.8"/>
<rect x="537.30" y="113.0" width="3.4" height="695.8"/>
<rect x="583.30" y="113.0" width="3.4" height="695.8"/>
<rect x="629.30" y="113.0" width="3.4" height="695.8"/>
<rect x="663.6" y="113.0" width="13" height="695.8"/>
</g>
</g>
<path d="M305.00 808.80L305.00 815.80" stroke="#000" stroke-width="1.75" fill="none"/>
<text x="301.82" y="832.00" font-size="10.45" textLength="6.36" lengthAdjust="spacingAndGlyphs" fill="#000">0</text>
<path d="M379.75 808.80L379.75 815.80" stroke="#000" stroke-width="1.75" fill="none"/>
<text x="370.21" y="832.00" font-size="10.45" textLength="19.09" lengthAdjust="spacingAndGlyphs" fill="#000">500</text>
<path d="M454.50 808.80L454.50 815.80" stroke="#000" stroke-width="1.75" fill="none"/>
<text x="441.78" y="832.00" font-size="10.45" textLength="25.45" lengthAdjust="spacingAndGlyphs" fill="#000">1000</text>
<path d="M529.25 808.80L529.25 815.80" stroke="#000" stroke-width="1.75" fill="none"/>
<text x="516.53" y="832.00" font-size="10.45" textLength="25.45" lengthAdjust="spacingAndGlyphs" fill="#000">1500</text>
<path d="M604.00 808.80L604.00 815.80" stroke="#000" stroke-width="1.75" fill="none"/>
<text x="591.28" y="832.00" font-size="10.45" textLength="25.45" lengthAdjust="spacingAndGlyphs" fill="#000">2000</text>
<path d="M298.00 808.50L305.00 808.50" stroke="#000" stroke-width="1.75" fill="none"/>
<text x="283.94" y="812.25" font-size="10.45" textLength="6.36" lengthAdjust="spacingAndGlyphs" fill="#000">0</text>
<path d="M298.00 659.00L305.00 659.00" stroke="#000" stroke-width="1.75" fill="none"/>
<text x="264.85" y="662.75" font-size="10.45" textLength="25.45" lengthAdjust="spacingAndGlyphs" fill="#000">1000</text>
<path d="M298.00 509.50L305.00 509.50" stroke="#000" stroke-width="1.75" fill="none"/>
<text x="264.85" y="513.25" font-size="10.45" textLength="25.45" lengthAdjust="spacingAndGlyphs" fill="#000">2000</text>
<path d="M298.00 360.00L305.00 360.00" stroke="#000" stroke-width="1.75" fill="none"/>
<text x="264.85" y="363.75" font-size="10.45" textLength="25.45" lengthAdjust="spacingAndGlyphs" fill="#000">3000</text>
<path d="M298.00 210.50L305.00 210.50" stroke="#000" stroke-width="1.75" fill="none"/>
<text x="264.85" y="214.25" font-size="10.45" textLength="25.45" lengthAdjust="spacingAndGlyphs" fill="#000">4000</text>
<text x="486.93" y="850.00" font-size="10.89" textLength="7.14" lengthAdjust="spacingAndGlyphs" fill="#000">X</text>
<text x="249.72" y="460.90" font-size="10.89" textLength="6.36" lengthAdjust="spacingAndGlyphs" fill="#000" transform="rotate(-90 252.90 460.90)">Y</text>
<rect x="305.0" y="113.0" width="371.0" height="695.8" fill="none" stroke="#000" stroke-width="1.75"/>
<defs><linearGradient id="hot" x1="0" y1="1" x2="0" y2="0">
<stop offset="0" stop-color="#0b0000"/><stop offset="0.365079" stop-color="#ff0000"/>
<stop offset="0.746032" stop-color="#ffff00"/><stop offset="1" stop-color="#ffffff"/></linearGradient></defs>
<rect x="712.0" y="113.0" width="35.0" height="695.8" fill="url(#hot)" stroke="#000" stroke-width="1.75"/>
<path d="M747.00 808.80L754.00 808.80" stroke="#000" stroke-width="1.75" fill="none"/>
<text x="762.00" y="812.60" font-size="10.45" textLength="6.36" lengthAdjust="spacingAndGlyphs" fill="#000">0</text>
<path d="M747.00 692.83L754.00 692.83" stroke="#000" stroke-width="1.75" fill="none"/>
<text x="762.00" y="696.63" font-size="10.45" textLength="19.09" lengthAdjust="spacingAndGlyphs" fill="#000">500</text>
<path d="M747.00 576.87L754.00 576.87" stroke="#000" stroke-width="1.75" fill="none"/>
<text x="762.00" y="580.67" font-size="10.45" textLength="25.45" lengthAdjust="spacingAndGlyphs" fill="#000">1000</text>
<path d="M747.00 460.90L754.00 460.90" stroke="#000" stroke-width="1.75" fill="none"/>
<text x="762.00" y="464.70" font-size="10.45" textLength="25.45" lengthAdjust="spacingAndGlyphs" fill="#000">1500</text>
<path d="M747.00 344.93L754.00 344.93" stroke="#000" stroke-width="1.75" fill="none"/>
<text x="762.00" y="348.73" font-size="10.45" textLength="25.45" lengthAdjust="spacingAndGlyphs" fill="#000">2000</text>
<path d="M747.00 228.97L754.00 228.97" stroke="#000" stroke-width="1.75" fill="none"/>
<text x="762.00" y="232.77" font-size="10.45" textLength="25.45" lengthAdjust="spacingAndGlyphs" fill="#000">2500</text>
<path d="M747.00 113.00L754.00 113.00" stroke="#000" stroke-width="1.75" fill="none"/>
<text x="762.00" y="116.80" font-size="10.45" textLength="25.45" lengthAdjust="spacingAndGlyphs" fill="#000">3000</text>
<path d="M911.0 232.8L997.0 232.8L997.0 119.2L1003.0 119.2L1003.0 124.8L1009.0 124.8L1009.0 138.9L1014.0 138.9L1014.0 142.9L1030.5 142.9L1030.5 144.0L1036.7 144.0L1036.7 145.0L1042.0 145.0L1042.0 146.0L1048.2 146.0L1048.2 147.0L1058.3 147.0L1058.3 148.0L1064.0 148.0L1064.0 149.0L1086.5 149.0L1086.5 150.0L1103.5 150.0L1103.5 151.0L1120.0 151.0L1120.0 152.0L1131.8 152.0L1131.8 153.0L1147.7 153.0L1147.7 154.0L1164.5 154.0L1164.5 155.0L1182.0 155.0L1182.0 126.0L1185.0 126.0" fill="none" stroke="#0000ff" stroke-width="1.5" stroke-linejoin="miter"/>
<path d="M904.00 232.80L911.00 232.80" stroke="#000" stroke-width="1.75" fill="none"/>
<text x="890.24" y="236.55" font-size="10.45" textLength="6.36" lengthAdjust="spacingAndGlyphs" fill="#000">0</text>
<path d="M904.00 198.60L911.00 198.60" stroke="#000" stroke-width="1.75" fill="none"/>
<text x="890.24" y="202.35" font-size="10.45" textLength="6.36" lengthAdjust="spacingAndGlyphs" fill="#000">2</text>
<path d="M904.00 164.40L911.00 164.40" stroke="#000" stroke-width="1.75" fill="none"/>
<text x="890.24" y="168.15" font-size="10.45" textLength="6.36" lengthAdjust="spacingAndGlyphs" fill="#000">4</text>
<path d="M904.00 130.20L911.00 130.20" stroke="#000" stroke-width="1.75" fill="none"/>
<text x="890.24" y="133.95" font-size="10.45" textLength="6.36" lengthAdjust="spacingAndGlyphs" fill="#000">6</text>
<path d="M911.00 232.80L911.00 239.80" stroke="#000" stroke-width="1.75" fill="none"/>
<text x="907.82" y="256.00" font-size="10.45" textLength="6.36" lengthAdjust="spacingAndGlyphs" fill="#000">0</text>
<path d="M957.50 232.80L957.50 239.80" stroke="#000" stroke-width="1.75" fill="none"/>
<path d="M1004.00 232.80L1004.00 239.80" stroke="#000" stroke-width="1.75" fill="none"/>
<text x="991.28" y="256.00" font-size="10.45" textLength="25.45" lengthAdjust="spacingAndGlyphs" fill="#000">1000</text>
<path d="M1050.50 232.80L1050.50 239.80" stroke="#000" stroke-width="1.75" fill="none"/>
<path d="M1097.00 232.80L1097.00 239.80" stroke="#000" stroke-width="1.75" fill="none"/>
<text x="1084.28" y="256.00" font-size="10.45" textLength="25.45" lengthAdjust="spacingAndGlyphs" fill="#000">2000</text>
<path d="M1143.50 232.80L1143.50 239.80" stroke="#000" stroke-width="1.75" fill="none"/>
<text x="1030.59" y="274.10" font-size="10.89" textLength="34.83" lengthAdjust="spacingAndGlyphs" fill="#000">counts</text>
<text x="842.47" y="174.00" font-size="10.89" textLength="71.46" lengthAdjust="spacingAndGlyphs" fill="#000" transform="rotate(-90 878.20 174.00)">log frequency</text>
<text x="1146.94" y="175.00" font-size="11.02" textLength="94.72" lengthAdjust="spacingAndGlyphs" fill="#000" transform="rotate(90 1194.30 175.00)">histogram (detail)</text>
<rect x="911.0" y="113.0" width="274.0" height="119.80000000000001" fill="none" stroke="#000" stroke-width="1.75"/>
<path d="M911.0 404.4L925.0 404.4L925.0 306.0L930.5 306.0L930.5 291.1L936.0 291.1L936.0 308.0L941.5 308.0L941.5 311.8L947.1 311.8L947.1 314.7L953.0 314.7L953.0 316.9L958.5 316.9L958.5 319.1L964.0 319.1L964.0 321.7L969.5 321.7L969.5 326.8L975.1 326.8L975.1 339.9L980.8 339.9L980.8 364.8L986.3 364.8L986.3 404.4L1185.0 404.4" fill="none" stroke="#0000ff" stroke-width="1.5" stroke-linejoin="miter"/>
<path d="M904.00 404.40L911.00 404.40" stroke="#000" stroke-width="1.75" fill="none"/>
<text x="890.24" y="408.15" font-size="10.45" textLength="6.36" lengthAdjust="spacingAndGlyphs" fill="#000">0</text>
<path d="M904.00 371.80L911.00 371.80" stroke="#000" stroke-width="1.75" fill="none"/>
<text x="890.24" y="375.55" font-size="10.45" textLength="6.36" lengthAdjust="spacingAndGlyphs" fill="#000">2</text>
<path d="M904.00 338.80L911.00 338.80" stroke="#000" stroke-width="1.75" fill="none"/>
<text x="890.24" y="342.55" font-size="10.45" textLength="6.36" lengthAdjust="spacingAndGlyphs" fill="#000">4</text>
<path d="M904.00 305.90L911.00 305.90" stroke="#000" stroke-width="1.75" fill="none"/>
<text x="890.24" y="309.65" font-size="10.45" textLength="6.36" lengthAdjust="spacingAndGlyphs" fill="#000">6</text>
<path d="M929.30 404.40L929.30 411.40" stroke="#000" stroke-width="1.75" fill="none"/>
<text x="926.12" y="427.60" font-size="10.45" textLength="6.36" lengthAdjust="spacingAndGlyphs" fill="#000">0</text>
<path d="M966.60 404.40L966.60 411.40" stroke="#000" stroke-width="1.75" fill="none"/>
<path d="M1003.90 404.40L1003.90 411.40" stroke="#000" stroke-width="1.75" fill="none"/>
<text x="987.99" y="427.60" font-size="10.45" textLength="31.81" lengthAdjust="spacingAndGlyphs" fill="#000">20000</text>
<path d="M1041.00 404.40L1041.00 411.40" stroke="#000" stroke-width="1.75" fill="none"/>
<path d="M1078.00 404.40L1078.00 411.40" stroke="#000" stroke-width="1.75" fill="none"/>
<text x="1062.09" y="427.60" font-size="10.45" textLength="31.81" lengthAdjust="spacingAndGlyphs" fill="#000">40000</text>
<path d="M1115.50 404.40L1115.50 411.40" stroke="#000" stroke-width="1.75" fill="none"/>
<path d="M1153.00 404.40L1153.00 411.40" stroke="#000" stroke-width="1.75" fill="none"/>
<text x="1137.09" y="427.60" font-size="10.45" textLength="31.81" lengthAdjust="spacingAndGlyphs" fill="#000">60000</text>
<text x="1030.59" y="445.70" font-size="10.89" textLength="34.83" lengthAdjust="spacingAndGlyphs" fill="#000">counts</text>
<text x="842.47" y="345.80" font-size="10.89" textLength="71.46" lengthAdjust="spacingAndGlyphs" fill="#000" transform="rotate(-90 878.20 345.80)">log frequency</text>
<text x="1153.63" y="349.40" font-size="11.02" textLength="81.33" lengthAdjust="spacingAndGlyphs" fill="#000" transform="rotate(90 1194.30 349.40)">histogram (full)</text>
<rect x="911.0" y="285.0" width="274.0" height="119.39999999999998" fill="none" stroke="#000" stroke-width="1.75"/>
</svg>
</body></html>
